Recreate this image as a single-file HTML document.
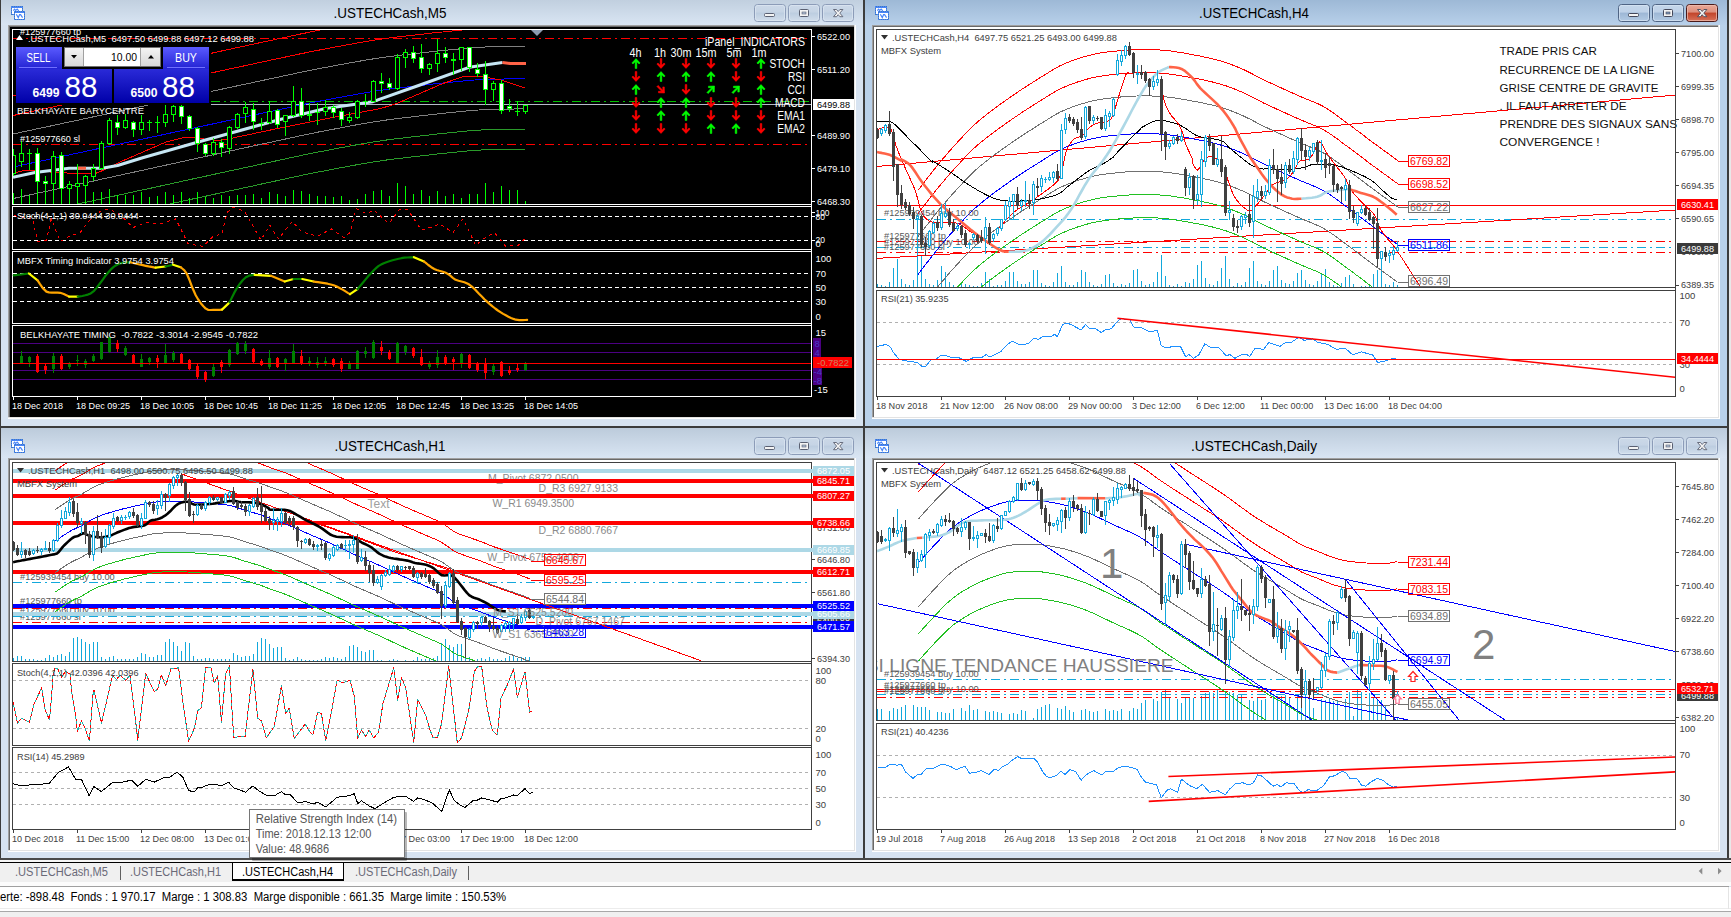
<!DOCTYPE html><html><head><meta charset="utf-8"><title>MT4</title><style>html,body{margin:0;padding:0;background:#f0f0f0;overflow:hidden}svg{display:block}text{font-family:"Liberation Sans",sans-serif;white-space:pre}</style></head><body>
<svg width="1731" height="917" viewBox="0 0 1731 917">
<defs>
<linearGradient id="gInact" x1="0" y1="0" x2="0" y2="1"><stop offset="0" stop-color="#bccbdb"/><stop offset="1" stop-color="#d9e5f3"/></linearGradient>
<linearGradient id="gAct" x1="0" y1="0" x2="0" y2="1"><stop offset="0" stop-color="#98b4d2"/><stop offset="1" stop-color="#b8d0ea"/></linearGradient>
<linearGradient id="gBtnI" x1="0" y1="0" x2="0" y2="1"><stop offset="0" stop-color="#ccd9e8"/><stop offset="0.45" stop-color="#c6d4e5"/><stop offset="0.5" stop-color="#bccde0"/><stop offset="1" stop-color="#d2deec"/></linearGradient>
<linearGradient id="gBtnA" x1="0" y1="0" x2="0" y2="1"><stop offset="0" stop-color="#c4d6ea"/><stop offset="0.45" stop-color="#bfd2e8"/><stop offset="0.5" stop-color="#9db7d5"/><stop offset="1" stop-color="#b4cbe4"/></linearGradient>
<linearGradient id="gBtnX" x1="0" y1="0" x2="0" y2="1"><stop offset="0" stop-color="#eaa999"/><stop offset="0.45" stop-color="#dd8f7d"/><stop offset="0.5" stop-color="#c2442a"/><stop offset="1" stop-color="#d8745c"/></linearGradient>
<linearGradient id="gSell" x1="0" y1="0" x2="0" y2="1"><stop offset="0" stop-color="#5a5aff"/><stop offset="1" stop-color="#2020d0"/></linearGradient>
<linearGradient id="gPrice" x1="0" y1="0" x2="0" y2="1"><stop offset="0" stop-color="#2a2ad8"/><stop offset="1" stop-color="#0000a8"/></linearGradient>
<linearGradient id="gSpin" x1="0" y1="0" x2="0" y2="1"><stop offset="0" stop-color="#f4f4f4"/><stop offset="1" stop-color="#d8d8d8"/></linearGradient>
</defs>
<rect x="0" y="0" width="1731" height="917" fill="#d7e3f1" />
<g shape-rendering="crispEdges">
<rect x="-1" y="-7" width="866" height="435" fill="#3c3c3c" />
<rect x="1" y="-5" width="862" height="431" fill="#d7e3f1" />
<rect x="1" y="-5" width="862" height="30" fill="url(#gInact)" />
<rect x="8" y="25" width="848" height="394" fill="#ffffff" />
<rect x="8" y="25" width="847" height="393" fill="#e3e3e3" />
<rect x="8" y="25" width="846" height="392" fill="#a0a0a0" />
<rect x="9" y="26" width="845" height="391" fill="#696969" />
<rect x="10" y="27" width="844" height="390" fill="#000000" />
</g>
<g shape-rendering="crispEdges">
<rect x="11" y="6" width="12" height="9" fill="#4a86f8" />
<rect x="12" y="8" width="10" height="6" fill="#fff" />
<rect x="12" y="6" width="1" height="1" fill="#3f78c0" />
<rect x="14" y="6" width="1" height="1" fill="#3f78c0" />
<rect x="16" y="6" width="1" height="1" fill="#3f78c0" />
<rect x="18" y="6" width="1" height="1" fill="#3f78c0" />
<rect x="20" y="6" width="1" height="1" fill="#3f78c0" />
<rect x="22" y="6" width="1" height="1" fill="#3f78c0" />
<rect x="11" y="8" width="1" height="1" fill="#3f78c0" />
<rect x="22" y="8" width="1" height="1" fill="#3f78c0" />
<rect x="11" y="10" width="1" height="1" fill="#3f78c0" />
<rect x="22" y="10" width="1" height="1" fill="#3f78c0" />
<rect x="11" y="12" width="1" height="1" fill="#3f78c0" />
<rect x="22" y="12" width="1" height="1" fill="#3f78c0" />
<rect x="11" y="14" width="1" height="1" fill="#3f78c0" />
<rect x="22" y="14" width="1" height="1" fill="#3f78c0" />
<rect x="12" y="14" width="1" height="1" fill="#3f78c0" />
<rect x="14" y="14" width="1" height="1" fill="#3f78c0" />
<rect x="16" y="14" width="1" height="1" fill="#3f78c0" />
<rect x="18" y="14" width="1" height="1" fill="#3f78c0" />
<rect x="20" y="14" width="1" height="1" fill="#3f78c0" />
<rect x="22" y="14" width="1" height="1" fill="#3f78c0" />
<rect x="14" y="11" width="11" height="9" fill="#4a86f8" />
<rect x="15" y="13" width="9" height="6" fill="#fff" />
<rect x="15" y="11" width="1" height="1" fill="#3f78c0" />
<rect x="15" y="19" width="1" height="1" fill="#3f78c0" />
<rect x="17" y="11" width="1" height="1" fill="#3f78c0" />
<rect x="17" y="19" width="1" height="1" fill="#3f78c0" />
<rect x="19" y="11" width="1" height="1" fill="#3f78c0" />
<rect x="19" y="19" width="1" height="1" fill="#3f78c0" />
<rect x="21" y="11" width="1" height="1" fill="#3f78c0" />
<rect x="21" y="19" width="1" height="1" fill="#3f78c0" />
<rect x="23" y="11" width="1" height="1" fill="#3f78c0" />
<rect x="23" y="19" width="1" height="1" fill="#3f78c0" />
<rect x="14" y="12" width="1" height="1" fill="#3f78c0" />
<rect x="24" y="12" width="1" height="1" fill="#3f78c0" />
<rect x="14" y="14" width="1" height="1" fill="#3f78c0" />
<rect x="24" y="14" width="1" height="1" fill="#3f78c0" />
<rect x="14" y="16" width="1" height="1" fill="#3f78c0" />
<rect x="24" y="16" width="1" height="1" fill="#3f78c0" />
<rect x="14" y="18" width="1" height="1" fill="#3f78c0" />
<rect x="24" y="18" width="1" height="1" fill="#3f78c0" />
</g>
<polyline points="13.3,10.6 14.6,9.2 15.6,10.4 17.2,9.0 18.8,10.8" fill="none" stroke="#4a86f8" stroke-width="1.2"/>
<polyline points="16.3,14.3 18.3,17.6 19.6,14.6 20.6,14.6 22.6,17.6" fill="none" stroke="#4a86f8" stroke-width="1.2"/>
<text x="390" y="17.5" font-size="15" fill="#000" text-anchor="middle" textLength="113" lengthAdjust="spacingAndGlyphs" >.USTECHCash,M5</text>
<rect x="754.5" y="4.5" width="31" height="17" rx="3" ry="3" fill="url(#gBtnI)" stroke="#8c9cb8"/>
<rect x="755.5" y="5.5" width="29" height="15" rx="2" ry="2" fill="none" stroke="#dde7f2" stroke-opacity="0.7"/>
<rect x="764.5" y="13.5" width="10" height="3" rx="1" fill="#f4f4f4" stroke="#5a6072"/>
<rect x="788.5" y="4.5" width="31" height="17" rx="3" ry="3" fill="url(#gBtnI)" stroke="#8c9cb8"/>
<rect x="789.5" y="5.5" width="29" height="15" rx="2" ry="2" fill="none" stroke="#dde7f2" stroke-opacity="0.7"/>
<rect x="799.5" y="9.5" width="9" height="7" rx="1" fill="#f4f4f4" stroke="#5a6072"/>
<rect x="802" y="12" width="4" height="2" fill="#b0c0d6" stroke="#5a6072" stroke-width="0.6"/>
<rect x="822.5" y="4.5" width="31" height="17" rx="3" ry="3" fill="url(#gBtnI)" stroke="#8c9cb8"/>
<rect x="823.5" y="5.5" width="29" height="15" rx="2" ry="2" fill="none" stroke="#dde7f2" stroke-opacity="0.7"/>
<path d="M833.5 9.5 l3 0 l1.7 2 l1.7 -2 l3 0 l-3.1 3.6 l3.1 3.6 l-3 0 l-1.7 -2 l-1.7 2 l-3 0 l3.1 -3.6 z" fill="#f4f4f4" stroke="#5a6072" stroke-width="0.9" stroke-linejoin="round"/>
<g shape-rendering="crispEdges">
<rect x="-1" y="426" width="866" height="435" fill="#3c3c3c" />
<rect x="1" y="428" width="862" height="431" fill="#d7e3f1" />
<rect x="1" y="428" width="862" height="30" fill="url(#gInact)" />
<rect x="8" y="458" width="848" height="394" fill="#ffffff" />
<rect x="8" y="458" width="847" height="393" fill="#e3e3e3" />
<rect x="8" y="458" width="846" height="392" fill="#a0a0a0" />
<rect x="9" y="459" width="845" height="391" fill="#696969" />
<rect x="10" y="460" width="844" height="390" fill="#ffffff" />
</g>
<g shape-rendering="crispEdges">
<rect x="11" y="439" width="12" height="9" fill="#4a86f8" />
<rect x="12" y="441" width="10" height="6" fill="#fff" />
<rect x="12" y="439" width="1" height="1" fill="#3f78c0" />
<rect x="14" y="439" width="1" height="1" fill="#3f78c0" />
<rect x="16" y="439" width="1" height="1" fill="#3f78c0" />
<rect x="18" y="439" width="1" height="1" fill="#3f78c0" />
<rect x="20" y="439" width="1" height="1" fill="#3f78c0" />
<rect x="22" y="439" width="1" height="1" fill="#3f78c0" />
<rect x="11" y="441" width="1" height="1" fill="#3f78c0" />
<rect x="22" y="441" width="1" height="1" fill="#3f78c0" />
<rect x="11" y="443" width="1" height="1" fill="#3f78c0" />
<rect x="22" y="443" width="1" height="1" fill="#3f78c0" />
<rect x="11" y="445" width="1" height="1" fill="#3f78c0" />
<rect x="22" y="445" width="1" height="1" fill="#3f78c0" />
<rect x="11" y="447" width="1" height="1" fill="#3f78c0" />
<rect x="22" y="447" width="1" height="1" fill="#3f78c0" />
<rect x="12" y="447" width="1" height="1" fill="#3f78c0" />
<rect x="14" y="447" width="1" height="1" fill="#3f78c0" />
<rect x="16" y="447" width="1" height="1" fill="#3f78c0" />
<rect x="18" y="447" width="1" height="1" fill="#3f78c0" />
<rect x="20" y="447" width="1" height="1" fill="#3f78c0" />
<rect x="22" y="447" width="1" height="1" fill="#3f78c0" />
<rect x="14" y="444" width="11" height="9" fill="#4a86f8" />
<rect x="15" y="446" width="9" height="6" fill="#fff" />
<rect x="15" y="444" width="1" height="1" fill="#3f78c0" />
<rect x="15" y="452" width="1" height="1" fill="#3f78c0" />
<rect x="17" y="444" width="1" height="1" fill="#3f78c0" />
<rect x="17" y="452" width="1" height="1" fill="#3f78c0" />
<rect x="19" y="444" width="1" height="1" fill="#3f78c0" />
<rect x="19" y="452" width="1" height="1" fill="#3f78c0" />
<rect x="21" y="444" width="1" height="1" fill="#3f78c0" />
<rect x="21" y="452" width="1" height="1" fill="#3f78c0" />
<rect x="23" y="444" width="1" height="1" fill="#3f78c0" />
<rect x="23" y="452" width="1" height="1" fill="#3f78c0" />
<rect x="14" y="445" width="1" height="1" fill="#3f78c0" />
<rect x="24" y="445" width="1" height="1" fill="#3f78c0" />
<rect x="14" y="447" width="1" height="1" fill="#3f78c0" />
<rect x="24" y="447" width="1" height="1" fill="#3f78c0" />
<rect x="14" y="449" width="1" height="1" fill="#3f78c0" />
<rect x="24" y="449" width="1" height="1" fill="#3f78c0" />
<rect x="14" y="451" width="1" height="1" fill="#3f78c0" />
<rect x="24" y="451" width="1" height="1" fill="#3f78c0" />
</g>
<polyline points="13.3,443.6 14.6,442.2 15.6,443.4 17.2,442.0 18.8,443.8" fill="none" stroke="#4a86f8" stroke-width="1.2"/>
<polyline points="16.3,447.3 18.3,450.6 19.6,447.6 20.6,447.6 22.6,450.6" fill="none" stroke="#4a86f8" stroke-width="1.2"/>
<text x="390" y="450.5" font-size="15" fill="#000" text-anchor="middle" textLength="111" lengthAdjust="spacingAndGlyphs" >.USTECHCash,H1</text>
<rect x="754.5" y="437.5" width="31" height="17" rx="3" ry="3" fill="url(#gBtnI)" stroke="#8c9cb8"/>
<rect x="755.5" y="438.5" width="29" height="15" rx="2" ry="2" fill="none" stroke="#dde7f2" stroke-opacity="0.7"/>
<rect x="764.5" y="446.5" width="10" height="3" rx="1" fill="#f4f4f4" stroke="#5a6072"/>
<rect x="788.5" y="437.5" width="31" height="17" rx="3" ry="3" fill="url(#gBtnI)" stroke="#8c9cb8"/>
<rect x="789.5" y="438.5" width="29" height="15" rx="2" ry="2" fill="none" stroke="#dde7f2" stroke-opacity="0.7"/>
<rect x="799.5" y="442.5" width="9" height="7" rx="1" fill="#f4f4f4" stroke="#5a6072"/>
<rect x="802" y="445" width="4" height="2" fill="#b0c0d6" stroke="#5a6072" stroke-width="0.6"/>
<rect x="822.5" y="437.5" width="31" height="17" rx="3" ry="3" fill="url(#gBtnI)" stroke="#8c9cb8"/>
<rect x="823.5" y="438.5" width="29" height="15" rx="2" ry="2" fill="none" stroke="#dde7f2" stroke-opacity="0.7"/>
<path d="M833.5 442.5 l3 0 l1.7 2 l1.7 -2 l3 0 l-3.1 3.6 l3.1 3.6 l-3 0 l-1.7 -2 l-1.7 2 l-3 0 l3.1 -3.6 z" fill="#f4f4f4" stroke="#5a6072" stroke-width="0.9" stroke-linejoin="round"/>
<g shape-rendering="crispEdges">
<rect x="863" y="426" width="866" height="435" fill="#3c3c3c" />
<rect x="865" y="428" width="862" height="431" fill="#d7e3f1" />
<rect x="865" y="428" width="862" height="30" fill="url(#gInact)" />
<rect x="872" y="458" width="848" height="394" fill="#ffffff" />
<rect x="872" y="458" width="847" height="393" fill="#e3e3e3" />
<rect x="872" y="458" width="846" height="392" fill="#a0a0a0" />
<rect x="873" y="459" width="845" height="391" fill="#696969" />
<rect x="874" y="460" width="844" height="390" fill="#ffffff" />
</g>
<g shape-rendering="crispEdges">
<rect x="875" y="439" width="12" height="9" fill="#4a86f8" />
<rect x="876" y="441" width="10" height="6" fill="#fff" />
<rect x="876" y="439" width="1" height="1" fill="#3f78c0" />
<rect x="878" y="439" width="1" height="1" fill="#3f78c0" />
<rect x="880" y="439" width="1" height="1" fill="#3f78c0" />
<rect x="882" y="439" width="1" height="1" fill="#3f78c0" />
<rect x="884" y="439" width="1" height="1" fill="#3f78c0" />
<rect x="886" y="439" width="1" height="1" fill="#3f78c0" />
<rect x="875" y="441" width="1" height="1" fill="#3f78c0" />
<rect x="886" y="441" width="1" height="1" fill="#3f78c0" />
<rect x="875" y="443" width="1" height="1" fill="#3f78c0" />
<rect x="886" y="443" width="1" height="1" fill="#3f78c0" />
<rect x="875" y="445" width="1" height="1" fill="#3f78c0" />
<rect x="886" y="445" width="1" height="1" fill="#3f78c0" />
<rect x="875" y="447" width="1" height="1" fill="#3f78c0" />
<rect x="886" y="447" width="1" height="1" fill="#3f78c0" />
<rect x="876" y="447" width="1" height="1" fill="#3f78c0" />
<rect x="878" y="447" width="1" height="1" fill="#3f78c0" />
<rect x="880" y="447" width="1" height="1" fill="#3f78c0" />
<rect x="882" y="447" width="1" height="1" fill="#3f78c0" />
<rect x="884" y="447" width="1" height="1" fill="#3f78c0" />
<rect x="886" y="447" width="1" height="1" fill="#3f78c0" />
<rect x="878" y="444" width="11" height="9" fill="#4a86f8" />
<rect x="879" y="446" width="9" height="6" fill="#fff" />
<rect x="879" y="444" width="1" height="1" fill="#3f78c0" />
<rect x="879" y="452" width="1" height="1" fill="#3f78c0" />
<rect x="881" y="444" width="1" height="1" fill="#3f78c0" />
<rect x="881" y="452" width="1" height="1" fill="#3f78c0" />
<rect x="883" y="444" width="1" height="1" fill="#3f78c0" />
<rect x="883" y="452" width="1" height="1" fill="#3f78c0" />
<rect x="885" y="444" width="1" height="1" fill="#3f78c0" />
<rect x="885" y="452" width="1" height="1" fill="#3f78c0" />
<rect x="887" y="444" width="1" height="1" fill="#3f78c0" />
<rect x="887" y="452" width="1" height="1" fill="#3f78c0" />
<rect x="878" y="445" width="1" height="1" fill="#3f78c0" />
<rect x="888" y="445" width="1" height="1" fill="#3f78c0" />
<rect x="878" y="447" width="1" height="1" fill="#3f78c0" />
<rect x="888" y="447" width="1" height="1" fill="#3f78c0" />
<rect x="878" y="449" width="1" height="1" fill="#3f78c0" />
<rect x="888" y="449" width="1" height="1" fill="#3f78c0" />
<rect x="878" y="451" width="1" height="1" fill="#3f78c0" />
<rect x="888" y="451" width="1" height="1" fill="#3f78c0" />
</g>
<polyline points="877.3,443.6 878.6,442.2 879.6,443.4 881.2,442.0 882.8,443.8" fill="none" stroke="#4a86f8" stroke-width="1.2"/>
<polyline points="880.3,447.3 882.3,450.6 883.6,447.6 884.6,447.6 886.6,450.6" fill="none" stroke="#4a86f8" stroke-width="1.2"/>
<text x="1254" y="450.5" font-size="15" fill="#000" text-anchor="middle" textLength="126" lengthAdjust="spacingAndGlyphs" >.USTECHCash,Daily</text>
<rect x="1618.5" y="437.5" width="31" height="17" rx="3" ry="3" fill="url(#gBtnI)" stroke="#8c9cb8"/>
<rect x="1619.5" y="438.5" width="29" height="15" rx="2" ry="2" fill="none" stroke="#dde7f2" stroke-opacity="0.7"/>
<rect x="1628.5" y="446.5" width="10" height="3" rx="1" fill="#f4f4f4" stroke="#5a6072"/>
<rect x="1652.5" y="437.5" width="31" height="17" rx="3" ry="3" fill="url(#gBtnI)" stroke="#8c9cb8"/>
<rect x="1653.5" y="438.5" width="29" height="15" rx="2" ry="2" fill="none" stroke="#dde7f2" stroke-opacity="0.7"/>
<rect x="1663.5" y="442.5" width="9" height="7" rx="1" fill="#f4f4f4" stroke="#5a6072"/>
<rect x="1666" y="445" width="4" height="2" fill="#b0c0d6" stroke="#5a6072" stroke-width="0.6"/>
<rect x="1686.5" y="437.5" width="31" height="17" rx="3" ry="3" fill="url(#gBtnI)" stroke="#8c9cb8"/>
<rect x="1687.5" y="438.5" width="29" height="15" rx="2" ry="2" fill="none" stroke="#dde7f2" stroke-opacity="0.7"/>
<path d="M1697.5 442.5 l3 0 l1.7 2 l1.7 -2 l3 0 l-3.1 3.6 l3.1 3.6 l-3 0 l-1.7 -2 l-1.7 2 l-3 0 l3.1 -3.6 z" fill="#f4f4f4" stroke="#5a6072" stroke-width="0.9" stroke-linejoin="round"/>
<g shape-rendering="crispEdges">
<rect x="863" y="-7" width="866" height="435" fill="#3c3c3c" />
<rect x="865" y="-5" width="862" height="431" fill="#b9d1ea" />
<rect x="865" y="-5" width="862" height="30" fill="url(#gAct)" />
<rect x="872" y="25" width="848" height="394" fill="#ffffff" />
<rect x="872" y="25" width="847" height="393" fill="#e3e3e3" />
<rect x="872" y="25" width="846" height="392" fill="#a0a0a0" />
<rect x="873" y="26" width="845" height="391" fill="#696969" />
<rect x="874" y="27" width="844" height="390" fill="#ffffff" />
</g>
<g shape-rendering="crispEdges">
<rect x="875" y="6" width="12" height="9" fill="#4a86f8" />
<rect x="876" y="8" width="10" height="6" fill="#fff" />
<rect x="876" y="6" width="1" height="1" fill="#3f78c0" />
<rect x="878" y="6" width="1" height="1" fill="#3f78c0" />
<rect x="880" y="6" width="1" height="1" fill="#3f78c0" />
<rect x="882" y="6" width="1" height="1" fill="#3f78c0" />
<rect x="884" y="6" width="1" height="1" fill="#3f78c0" />
<rect x="886" y="6" width="1" height="1" fill="#3f78c0" />
<rect x="875" y="8" width="1" height="1" fill="#3f78c0" />
<rect x="886" y="8" width="1" height="1" fill="#3f78c0" />
<rect x="875" y="10" width="1" height="1" fill="#3f78c0" />
<rect x="886" y="10" width="1" height="1" fill="#3f78c0" />
<rect x="875" y="12" width="1" height="1" fill="#3f78c0" />
<rect x="886" y="12" width="1" height="1" fill="#3f78c0" />
<rect x="875" y="14" width="1" height="1" fill="#3f78c0" />
<rect x="886" y="14" width="1" height="1" fill="#3f78c0" />
<rect x="876" y="14" width="1" height="1" fill="#3f78c0" />
<rect x="878" y="14" width="1" height="1" fill="#3f78c0" />
<rect x="880" y="14" width="1" height="1" fill="#3f78c0" />
<rect x="882" y="14" width="1" height="1" fill="#3f78c0" />
<rect x="884" y="14" width="1" height="1" fill="#3f78c0" />
<rect x="886" y="14" width="1" height="1" fill="#3f78c0" />
<rect x="878" y="11" width="11" height="9" fill="#4a86f8" />
<rect x="879" y="13" width="9" height="6" fill="#fff" />
<rect x="879" y="11" width="1" height="1" fill="#3f78c0" />
<rect x="879" y="19" width="1" height="1" fill="#3f78c0" />
<rect x="881" y="11" width="1" height="1" fill="#3f78c0" />
<rect x="881" y="19" width="1" height="1" fill="#3f78c0" />
<rect x="883" y="11" width="1" height="1" fill="#3f78c0" />
<rect x="883" y="19" width="1" height="1" fill="#3f78c0" />
<rect x="885" y="11" width="1" height="1" fill="#3f78c0" />
<rect x="885" y="19" width="1" height="1" fill="#3f78c0" />
<rect x="887" y="11" width="1" height="1" fill="#3f78c0" />
<rect x="887" y="19" width="1" height="1" fill="#3f78c0" />
<rect x="878" y="12" width="1" height="1" fill="#3f78c0" />
<rect x="888" y="12" width="1" height="1" fill="#3f78c0" />
<rect x="878" y="14" width="1" height="1" fill="#3f78c0" />
<rect x="888" y="14" width="1" height="1" fill="#3f78c0" />
<rect x="878" y="16" width="1" height="1" fill="#3f78c0" />
<rect x="888" y="16" width="1" height="1" fill="#3f78c0" />
<rect x="878" y="18" width="1" height="1" fill="#3f78c0" />
<rect x="888" y="18" width="1" height="1" fill="#3f78c0" />
</g>
<polyline points="877.3,10.6 878.6,9.2 879.6,10.4 881.2,9.0 882.8,10.8" fill="none" stroke="#4a86f8" stroke-width="1.2"/>
<polyline points="880.3,14.3 882.3,17.6 883.6,14.6 884.6,14.6 886.6,17.6" fill="none" stroke="#4a86f8" stroke-width="1.2"/>
<text x="1254" y="17.5" font-size="15" fill="#000" text-anchor="middle" textLength="110" lengthAdjust="spacingAndGlyphs" >.USTECHCash,H4</text>
<rect x="1618.5" y="4.5" width="31" height="17" rx="3" ry="3" fill="url(#gBtnA)" stroke="#4f6484"/>
<rect x="1619.5" y="5.5" width="29" height="15" rx="2" ry="2" fill="none" stroke="#d8e6f4" stroke-opacity="0.7"/>
<rect x="1628.5" y="13.5" width="10" height="3" rx="1" fill="#f4f4f4" stroke="#44485a"/>
<rect x="1652.5" y="4.5" width="31" height="17" rx="3" ry="3" fill="url(#gBtnA)" stroke="#4f6484"/>
<rect x="1653.5" y="5.5" width="29" height="15" rx="2" ry="2" fill="none" stroke="#d8e6f4" stroke-opacity="0.7"/>
<rect x="1663.5" y="9.5" width="9" height="7" rx="1" fill="#f4f4f4" stroke="#44485a"/>
<rect x="1666" y="12" width="4" height="2" fill="#7d98bb" stroke="#44485a" stroke-width="0.6"/>
<rect x="1686.5" y="4.5" width="31" height="17" rx="3" ry="3" fill="url(#gBtnX)" stroke="#4a1a1a"/>
<rect x="1687.5" y="5.5" width="29" height="15" rx="2" ry="2" fill="none" stroke="#f0c0b4" stroke-opacity="0.7"/>
<path d="M1697.5 9.5 l3 0 l1.7 2 l1.7 -2 l3 0 l-3.1 3.6 l3.1 3.6 l-3 0 l-1.7 -2 l-1.7 2 l-3 0 l3.1 -3.6 z" fill="#f4f4f4" stroke="#44485a" stroke-width="0.9" stroke-linejoin="round"/>
<g shape-rendering="crispEdges">
<rect x="1727" y="0" width="2" height="860" fill="#3c3c3c" />
<rect x="1729" y="0" width="2" height="860" fill="#e8e8e8" />
</g>
<g id="m5">
<clipPath id="cm5"><rect x="13" y="30" width="798" height="174"/></clipPath>
<g clip-path="url(#cm5)">
<line x1="13" y1="38.5" x2="811" y2="38.5" stroke="#ff0000" stroke-width="1" stroke-dasharray="9 4 2 4" shape-rendering="crispEdges"/>
<line x1="13" y1="144.5" x2="811" y2="144.5" stroke="#ff0000" stroke-width="1" stroke-dasharray="9 4 2 4" shape-rendering="crispEdges"/>
<line x1="211" y1="101.5" x2="811" y2="101.5" stroke="#00c000" stroke-width="1" stroke-dasharray="9 4 2 4" shape-rendering="crispEdges"/>
<line x1="211" y1="104.5" x2="811" y2="104.5" stroke="#b4bcc8" stroke-width="1" shape-rendering="crispEdges"/>
<polyline points="13.0,96.0 14.0,95.8 15.1,95.6 16.2,95.3 17.3,95.1 18.5,94.8 19.7,94.6 21.0,94.3 22.3,94.0 23.6,93.7 25.0,93.4 26.5,93.1 27.9,92.8 29.5,92.5 31.0,92.1 32.7,91.8 34.3,91.4 36.0,91.1 37.8,90.7 39.6,90.3 41.4,89.9 43.3,89.5 45.2,89.1 47.2,88.7 49.3,88.2 51.3,87.8 53.5,87.3 55.6,86.9 57.9,86.4 60.1,85.9 62.4,85.4 64.8,84.9 67.2,84.4 69.7,83.8 72.2,83.3 74.7,82.7 77.3,82.2 80.0,81.6 82.7,81.0 85.5,80.4 88.3,79.8 91.1,79.2 94.0,78.6 97.0,77.9 100.0,77.3 101.5,77.0 103.0,76.7 104.6,76.3 106.2,76.0 107.8,75.6 109.5,75.3 111.2,74.9 112.9,74.5 114.6,74.1 116.4,73.8 118.2,73.4 120.1,73.0 122.0,72.6 123.9,72.1 125.8,71.7 127.8,71.3 129.7,70.9 131.7,70.4 133.7,70.0 135.8,69.6 137.9,69.1 139.9,68.7 142.0,68.2 144.2,67.7 146.3,67.3 148.4,66.8 150.6,66.4 152.8,65.9 155.0,65.4 157.2,64.9 159.4,64.4 161.6,64.0 163.9,63.5 166.1,63.0 168.4,62.5 170.6,62.0 172.9,61.5 175.2,61.0 177.5,60.5 179.7,60.0 182.0,59.5 184.3,59.1 186.6,58.6 188.9,58.1 191.2,57.6 193.5,57.1 195.7,56.6 198.0,56.1 200.3,55.6 202.6,55.1 204.8,54.6 207.1,54.1 209.3,53.6 211.6,53.2 213.8,52.7 216.0,52.2 218.2,51.7 220.4,51.2 222.6,50.8 224.7,50.3 226.9,49.8 229.0,49.4 231.2,48.9 233.3,48.5 235.3,48.0 237.4,47.6 239.4,47.1 241.5,46.7 243.5,46.3 245.4,45.8 247.4,45.4 249.3,45.0 251.2,44.6 253.1,44.2 254.9,43.8 256.7,43.4 258.5,43.0 260.3,42.6 262.0,42.3 263.7,41.9 265.4,41.5 267.0,41.2 268.6,40.8 270.2,40.5 271.7,40.2 273.2,39.9 274.6,39.6 276.0,39.3 277.4,39.0 278.7,38.7 280.0,38.4 284.2,37.5 288.1,36.7 291.7,35.9 294.9,35.2 297.8,34.6 300.5,34.0 302.9,33.5 305.1,33.1 307.1,32.7 308.8,32.3 310.5,32.0 312.0,31.7 313.3,31.4 314.6,31.1 315.8,30.9 316.9,30.7 318.0,30.5 319.1,30.3 320.2,30.0 321.3,29.8 322.5,29.6 323.8,29.4 325.1,29.1 326.6,28.8 328.2,28.5 330.0,28.2 332.0,27.8 334.0,27.4 336.1,27.0 338.1,26.7 340.1,26.3 342.1,25.9 344.1,25.5 346.1,25.2 348.1,24.8 350.1,24.4 352.1,24.1 354.1,23.7 356.0,23.4 358.0,23.0 359.9,22.7 361.9,22.3 363.8,22.0 365.7,21.7 367.6,21.4 369.5,21.1 371.3,20.8 373.2,20.5 375.0,20.2 376.8,19.9 378.9,19.6 381.1,19.3 383.1,19.0 385.2,18.7 387.3,18.4 389.3,18.1 391.3,17.9 393.3,17.6 395.2,17.4 397.2,17.2 399.1,16.9 401.1,16.7 403.0,16.5 404.9,16.3 406.7,16.1 408.6,15.8 410.5,15.6 412.3,15.4 414.2,15.2 416.0,15.0 418.0,14.8 420.0,14.5 422.0,14.3 423.9,14.1 425.8,13.9 427.8,13.6 429.6,13.4 431.5,13.2 433.4,13.0 435.2,12.8 437.1,12.6 438.9,12.4 440.8,12.2 442.6,12.0 444.5,11.9 446.3,11.7 448.1,11.5 450.0,11.3 452.0,11.1 453.9,10.9 455.8,10.7 457.6,10.5 459.5,10.3 461.4,10.2 463.2,10.0 465.1,9.8 466.9,9.6 468.8,9.5 470.7,9.3 472.7,9.1 474.6,9.0 476.7,8.9 478.7,8.7 480.8,8.6 483.0,8.5 484.8,8.4 486.6,8.3 488.6,8.3 490.7,8.2 492.8,8.2 494.9,8.1 497.1,8.1 499.4,8.0 501.6,8.0 503.8,8.0 506.1,7.9 508.2,7.9 510.4,7.9 512.4,7.8 514.4,7.8 516.3,7.8 518.1,7.8 519.8,7.8 521.3,7.8 522.7,7.7 524.0,7.7 525.0,7.7" fill="none" stroke="#ff0000" stroke-width="1" stroke-linejoin="round" shape-rendering="crispEdges" />
<polyline points="13.0,115.5 14.0,115.3 15.1,115.1 16.2,114.8 17.3,114.6 18.5,114.3 19.7,114.1 21.0,113.8 22.3,113.5 23.6,113.2 25.0,112.9 26.5,112.6 27.9,112.3 29.5,112.0 31.0,111.6 32.7,111.3 34.3,110.9 36.0,110.6 37.8,110.2 39.6,109.8 41.4,109.4 43.3,109.0 45.2,108.6 47.2,108.2 49.3,107.8 51.3,107.3 53.5,106.9 55.6,106.4 57.9,105.9 60.1,105.4 62.4,104.9 64.8,104.4 67.2,103.9 69.7,103.4 72.2,102.9 74.7,102.3 77.3,101.7 80.0,101.2 82.7,100.6 85.5,100.0 88.3,99.4 91.1,98.8 94.0,98.2 97.0,97.5 100.0,96.9 101.5,96.6 103.0,96.2 104.6,95.9 106.2,95.6 107.8,95.2 109.5,94.9 111.2,94.5 112.9,94.1 114.6,93.7 116.4,93.4 118.2,93.0 120.1,92.6 122.0,92.2 123.9,91.7 125.8,91.3 127.8,90.9 129.7,90.5 131.7,90.1 133.7,89.6 135.8,89.2 137.9,88.7 139.9,88.3 142.0,87.8 144.2,87.4 146.3,86.9 148.4,86.5 150.6,86.0 152.8,85.5 155.0,85.0 157.2,84.6 159.4,84.1 161.6,83.6 163.9,83.1 166.1,82.6 168.4,82.2 170.6,81.7 172.9,81.2 175.2,80.7 177.5,80.2 179.7,79.7 182.0,79.2 184.3,78.7 186.6,78.2 188.9,77.7 191.2,77.2 193.5,76.7 195.7,76.3 198.0,75.8 200.3,75.3 202.6,74.8 204.8,74.3 207.1,73.8 209.3,73.3 211.6,72.8 213.8,72.4 216.0,71.9 218.2,71.4 220.4,70.9 222.6,70.5 224.7,70.0 226.9,69.5 229.0,69.1 231.2,68.6 233.3,68.2 235.3,67.7 237.4,67.3 239.4,66.8 241.5,66.4 243.5,66.0 245.4,65.6 247.4,65.1 249.3,64.7 251.2,64.3 253.1,63.9 254.9,63.5 256.7,63.1 258.5,62.7 260.3,62.4 262.0,62.0 263.7,61.6 265.4,61.3 267.0,60.9 268.6,60.6 270.2,60.3 271.7,59.9 273.2,59.6 274.6,59.3 276.0,59.0 277.4,58.7 278.7,58.4 280.0,58.2 284.2,57.3 288.1,56.4 291.7,55.7 294.9,55.0 297.8,54.4 300.5,53.8 302.9,53.3 305.1,52.9 307.1,52.5 308.8,52.1 310.5,51.8 312.0,51.5 313.3,51.2 314.6,50.9 315.8,50.7 316.9,50.5 318.0,50.3 319.1,50.1 320.2,49.8 321.3,49.6 322.5,49.4 323.8,49.2 325.1,48.9 326.6,48.7 328.2,48.3 330.0,48.0 332.0,47.6 334.0,47.2 336.1,46.9 338.1,46.5 340.1,46.1 342.1,45.7 344.1,45.4 346.1,45.0 348.1,44.6 350.1,44.3 352.1,43.9 354.1,43.6 356.0,43.2 358.0,42.9 359.9,42.5 361.9,42.2 363.8,41.9 365.7,41.5 367.6,41.2 369.5,40.9 371.3,40.6 373.2,40.3 375.0,40.0 376.8,39.8 378.9,39.4 381.1,39.1 383.1,38.8 385.2,38.5 387.3,38.3 389.3,38.0 391.3,37.8 393.3,37.5 395.2,37.3 397.2,37.0 399.1,36.8 401.1,36.6 403.0,36.4 404.9,36.2 406.7,35.9 408.6,35.7 410.5,35.5 412.3,35.3 414.2,35.1 416.0,34.9 418.0,34.7 420.0,34.4 422.0,34.2 423.9,34.0 425.8,33.8 427.8,33.5 429.6,33.3 431.5,33.1 433.4,32.9 435.2,32.7 437.1,32.5 438.9,32.3 440.8,32.1 442.6,32.0 444.5,31.8 446.3,31.6 448.1,31.4 450.0,31.2 452.0,31.0 453.9,30.8 455.8,30.7 457.6,30.5 459.5,30.3 461.4,30.1 463.2,29.9 465.1,29.7 466.9,29.6 468.8,29.4 470.7,29.3 472.7,29.1 474.6,29.0 476.7,28.8 478.7,28.7 480.8,28.6 483.0,28.5 484.8,28.4 486.6,28.3 488.6,28.2 490.7,28.2 492.8,28.1 494.9,28.1 497.1,28.0 499.4,28.0 501.6,28.0 503.8,27.9 506.1,27.9 508.2,27.9 510.4,27.9 512.4,27.8 514.4,27.8 516.3,27.8 518.1,27.8 519.8,27.8 521.3,27.7 522.7,27.7 524.0,27.7 525.0,27.7" fill="none" stroke="#ff0000" stroke-width="1" stroke-linejoin="round" shape-rendering="crispEdges" />
<polyline points="13.0,134.0 14.0,133.8 15.1,133.6 16.2,133.3 17.3,133.1 18.5,132.8 19.7,132.6 21.0,132.3 22.3,132.0 23.6,131.7 25.0,131.4 26.5,131.1 27.9,130.8 29.5,130.5 31.0,130.2 32.7,129.8 34.3,129.5 36.0,129.1 37.8,128.7 39.6,128.3 41.4,127.9 43.3,127.5 45.2,127.1 47.2,126.7 49.3,126.3 51.3,125.8 53.5,125.4 55.6,124.9 57.9,124.4 60.1,123.9 62.4,123.4 64.8,122.9 67.2,122.4 69.7,121.9 72.2,121.4 74.7,120.8 77.3,120.3 80.0,119.7 82.7,119.1 85.5,118.5 88.3,117.9 91.1,117.3 94.0,116.7 97.0,116.0 100.0,115.4 101.5,115.1 103.0,114.8 104.6,114.4 106.2,114.1 107.8,113.7 109.5,113.4 111.2,113.0 112.9,112.6 114.6,112.3 116.4,111.9 118.2,111.5 120.1,111.1 122.0,110.7 123.9,110.3 125.8,109.9 127.8,109.4 129.7,109.0 131.7,108.6 133.7,108.1 135.8,107.7 137.9,107.3 139.9,106.8 142.0,106.4 144.2,105.9 146.3,105.4 148.4,105.0 150.6,104.5 152.8,104.0 155.0,103.6 157.2,103.1 159.4,102.6 161.6,102.1 163.9,101.7 166.1,101.2 168.4,100.7 170.6,100.2 172.9,99.7 175.2,99.2 177.5,98.7 179.7,98.2 182.0,97.7 184.3,97.3 186.6,96.8 188.9,96.3 191.2,95.8 193.5,95.3 195.7,94.8 198.0,94.3 200.3,93.8 202.6,93.3 204.8,92.8 207.1,92.4 209.3,91.9 211.6,91.4 213.8,90.9 216.0,90.4 218.2,90.0 220.4,89.5 222.6,89.0 224.7,88.5 226.9,88.1 229.0,87.6 231.2,87.2 233.3,86.7 235.3,86.3 237.4,85.8 239.4,85.4 241.5,85.0 243.5,84.5 245.4,84.1 247.4,83.7 249.3,83.3 251.2,82.9 253.1,82.5 254.9,82.1 256.7,81.7 258.5,81.3 260.3,80.9 262.0,80.5 263.7,80.2 265.4,79.8 267.0,79.5 268.6,79.1 270.2,78.8 271.7,78.5 273.2,78.2 274.6,77.9 276.0,77.6 277.4,77.3 278.7,77.0 280.0,76.7 284.2,75.8 288.1,75.0 291.7,74.2 294.9,73.6 297.8,72.9 300.5,72.4 302.9,71.9 305.1,71.4 307.1,71.0 308.8,70.6 310.5,70.3 312.0,70.0 313.3,69.7 314.6,69.5 315.8,69.3 316.9,69.0 318.0,68.8 319.1,68.6 320.2,68.4 321.3,68.2 322.5,68.0 323.8,67.7 325.1,67.5 326.6,67.2 328.2,66.9 330.0,66.6 332.0,66.2 334.0,65.8 336.1,65.4 338.1,65.0 340.1,64.7 342.1,64.3 344.1,63.9 346.1,63.6 348.1,63.2 350.1,62.8 352.1,62.5 354.1,62.1 356.0,61.8 358.0,61.4 359.9,61.1 361.9,60.8 363.8,60.4 365.7,60.1 367.6,59.8 369.5,59.5 371.3,59.2 373.2,58.9 375.0,58.6 376.8,58.3 378.9,58.0 381.1,57.7 383.1,57.4 385.2,57.1 387.3,56.8 389.3,56.6 391.3,56.3 393.3,56.1 395.2,55.8 397.2,55.6 399.1,55.4 401.1,55.2 403.0,54.9 404.9,54.7 406.7,54.5 408.6,54.3 410.5,54.1 412.3,53.9 414.2,53.7 416.0,53.5 418.0,53.2 420.0,53.0 422.0,52.8 423.9,52.6 425.8,52.3 427.8,52.1 429.6,51.9 431.5,51.7 433.4,51.5 435.2,51.3 437.1,51.1 438.9,50.9 440.8,50.7 442.6,50.5 444.5,50.4 446.3,50.2 448.1,50.0 450.0,49.8 452.0,49.6 453.9,49.4 455.8,49.2 457.6,49.1 459.5,48.9 461.4,48.7 463.2,48.5 465.1,48.3 466.9,48.2 468.8,48.0 470.7,47.8 472.7,47.7 474.6,47.5 476.7,47.4 478.7,47.3 480.8,47.2 483.0,47.1 484.8,47.0 486.6,46.9 488.6,46.8 490.7,46.8 492.8,46.7 494.9,46.7 497.1,46.6 499.4,46.6 501.6,46.6 503.8,46.5 506.1,46.5 508.2,46.5 510.4,46.5 512.4,46.4 514.4,46.4 516.3,46.4 518.1,46.4 519.8,46.4 521.3,46.3 522.7,46.3 524.0,46.3 525.0,46.3" fill="none" stroke="#808080" stroke-width="1" stroke-linejoin="round" shape-rendering="crispEdges" />
<polyline points="13.0,198.5 14.0,198.3 15.1,198.1 16.2,197.8 17.3,197.6 18.5,197.3 19.7,197.0 21.0,196.8 22.3,196.5 23.6,196.2 25.0,195.9 26.5,195.6 27.9,195.3 29.5,194.9 31.0,194.6 32.7,194.2 34.3,193.9 36.0,193.5 37.8,193.1 39.6,192.7 41.4,192.3 43.3,191.9 45.2,191.5 47.2,191.1 49.3,190.6 51.3,190.2 53.5,189.7 55.6,189.2 57.9,188.8 60.1,188.3 62.4,187.8 64.8,187.2 67.2,186.7 69.7,186.2 72.2,185.6 74.7,185.1 77.3,184.5 80.0,183.9 82.7,183.3 85.5,182.7 88.3,182.1 91.1,181.5 94.0,180.9 97.0,180.2 100.0,179.6 101.5,179.2 103.0,178.9 104.6,178.6 106.2,178.2 107.8,177.9 109.5,177.5 111.2,177.1 112.9,176.7 114.6,176.4 116.4,176.0 118.2,175.6 120.1,175.2 122.0,174.8 123.9,174.3 125.8,173.9 127.8,173.5 129.7,173.1 131.7,172.6 133.7,172.2 135.8,171.7 137.9,171.3 139.9,170.8 142.0,170.4 144.2,169.9 146.3,169.4 148.4,169.0 150.6,168.5 152.8,168.0 155.0,167.5 157.2,167.0 159.4,166.5 161.6,166.1 163.9,165.6 166.1,165.1 168.4,164.6 170.6,164.1 172.9,163.6 175.2,163.1 177.5,162.6 179.7,162.1 182.0,161.6 184.3,161.1 186.6,160.6 188.9,160.1 191.2,159.6 193.5,159.1 195.7,158.6 198.0,158.1 200.3,157.6 202.6,157.1 204.8,156.6 207.1,156.1 209.3,155.6 211.6,155.1 213.8,154.6 216.0,154.1 218.2,153.7 220.4,153.2 222.6,152.7 224.7,152.2 226.9,151.7 229.0,151.3 231.2,150.8 233.3,150.4 235.3,149.9 237.4,149.5 239.4,149.0 241.5,148.6 243.5,148.1 245.4,147.7 247.4,147.3 249.3,146.8 251.2,146.4 253.1,146.0 254.9,145.6 256.7,145.2 258.5,144.8 260.3,144.5 262.0,144.1 263.7,143.7 265.4,143.3 267.0,143.0 268.6,142.6 270.2,142.3 271.7,142.0 273.2,141.7 274.6,141.3 276.0,141.0 277.4,140.7 278.7,140.4 280.0,140.2 284.2,139.3 288.1,138.4 291.7,137.7 294.9,137.0 297.8,136.3 300.5,135.8 302.9,135.2 305.1,134.8 307.1,134.4 308.8,134.0 310.5,133.7 312.0,133.3 313.3,133.1 314.6,132.8 315.8,132.6 316.9,132.3 318.0,132.1 319.1,131.9 320.2,131.7 321.3,131.5 322.5,131.3 323.8,131.0 325.1,130.8 326.6,130.5 328.2,130.2 330.0,129.8 332.0,129.4 334.0,129.1 336.1,128.7 338.1,128.3 340.1,127.9 342.1,127.5 344.1,127.1 346.1,126.8 348.1,126.4 350.1,126.0 352.1,125.6 354.1,125.3 356.0,124.9 358.0,124.6 359.9,124.2 361.9,123.9 363.8,123.6 365.7,123.2 367.6,122.9 369.5,122.6 371.3,122.3 373.2,122.0 375.0,121.7 376.8,121.4 378.9,121.1 381.1,120.8 383.1,120.5 385.2,120.2 387.3,119.9 389.3,119.6 391.3,119.4 393.3,119.1 395.2,118.9 397.2,118.6 399.1,118.4 401.1,118.1 403.0,117.9 404.9,117.7 406.7,117.5 408.6,117.3 410.5,117.1 412.3,116.8 414.2,116.6 416.0,116.4 418.0,116.2 420.0,115.9 422.0,115.7 423.9,115.5 425.8,115.2 427.8,115.0 429.6,114.8 431.5,114.6 433.4,114.4 435.2,114.2 437.1,114.0 438.9,113.8 440.8,113.6 442.6,113.4 444.5,113.2 446.3,113.0 448.1,112.8 450.0,112.6 452.0,112.4 453.9,112.2 455.8,112.0 457.6,111.8 459.5,111.6 461.4,111.4 463.2,111.3 465.1,111.1 466.9,110.9 468.8,110.7 470.7,110.6 472.7,110.4 474.6,110.2 476.7,110.1 478.7,110.0 480.8,109.8 483.0,109.7 484.8,109.6 486.6,109.6 488.6,109.5 490.7,109.4 492.8,109.4 494.9,109.3 497.1,109.2 499.4,109.2 501.6,109.2 503.8,109.1 506.1,109.1 508.2,109.0 510.4,109.0 512.4,109.0 514.4,109.0 516.3,108.9 518.1,108.9 519.8,108.9 521.3,108.9 522.7,108.8 524.0,108.8 525.0,108.8" fill="none" stroke="#808080" stroke-width="1" stroke-linejoin="round" shape-rendering="crispEdges" />
<polyline points="13.0,218.0 14.0,217.8 15.1,217.6 16.2,217.3 17.3,217.1 18.5,216.8 19.7,216.6 21.0,216.3 22.3,216.0 23.6,215.7 25.0,215.4 26.5,215.1 27.9,214.8 29.5,214.4 31.0,214.1 32.7,213.8 34.3,213.4 36.0,213.0 37.8,212.7 39.6,212.3 41.4,211.9 43.3,211.5 45.2,211.0 47.2,210.6 49.3,210.2 51.3,209.7 53.5,209.3 55.6,208.8 57.9,208.3 60.1,207.8 62.4,207.3 64.8,206.8 67.2,206.3 69.7,205.8 72.2,205.2 74.7,204.7 77.3,204.1 80.0,203.5 82.7,202.9 85.5,202.3 88.3,201.7 91.1,201.1 94.0,200.5 97.0,199.8 100.0,199.2 101.5,198.9 103.0,198.5 104.6,198.2 106.2,197.8 107.8,197.5 109.5,197.1 111.2,196.8 112.9,196.4 114.6,196.0 116.4,195.6 118.2,195.2 120.1,194.8 122.0,194.4 123.9,194.0 125.8,193.6 127.8,193.1 129.7,192.7 131.7,192.3 133.7,191.8 135.8,191.4 137.9,190.9 139.9,190.5 142.0,190.0 144.2,189.6 146.3,189.1 148.4,188.6 150.6,188.2 152.8,187.7 155.0,187.2 157.2,186.7 159.4,186.2 161.6,185.8 163.9,185.3 166.1,184.8 168.4,184.3 170.6,183.8 172.9,183.3 175.2,182.8 177.5,182.3 179.7,181.8 182.0,181.3 184.3,180.8 186.6,180.3 188.9,179.8 191.2,179.3 193.5,178.8 195.7,178.3 198.0,177.8 200.3,177.3 202.6,176.8 204.8,176.3 207.1,175.9 209.3,175.4 211.6,174.9 213.8,174.4 216.0,173.9 218.2,173.4 220.4,173.0 222.6,172.5 224.7,172.0 226.9,171.5 229.0,171.1 231.2,170.6 233.3,170.2 235.3,169.7 237.4,169.3 239.4,168.8 241.5,168.4 243.5,167.9 245.4,167.5 247.4,167.1 249.3,166.7 251.2,166.3 253.1,165.9 254.9,165.5 256.7,165.1 258.5,164.7 260.3,164.3 262.0,163.9 263.7,163.5 265.4,163.2 267.0,162.8 268.6,162.5 270.2,162.2 271.7,161.8 273.2,161.5 274.6,161.2 276.0,160.9 277.4,160.6 278.7,160.3 280.0,160.0 284.2,159.1 288.1,158.3 291.7,157.5 294.9,156.8 297.8,156.2 300.5,155.7 302.9,155.1 305.1,154.7 307.1,154.3 308.8,153.9 310.5,153.6 312.0,153.3 313.3,153.0 314.6,152.7 315.8,152.5 316.9,152.3 318.0,152.0 319.1,151.8 320.2,151.6 321.3,151.4 322.5,151.2 323.8,151.0 325.1,150.7 326.6,150.4 328.2,150.1 330.0,149.8 332.0,149.4 334.0,149.0 336.1,148.6 338.1,148.2 340.1,147.8 342.1,147.5 344.1,147.1 346.1,146.7 348.1,146.3 350.1,146.0 352.1,145.6 354.1,145.3 356.0,144.9 358.0,144.5 359.9,144.2 361.9,143.9 363.8,143.5 365.7,143.2 367.6,142.9 369.5,142.6 371.3,142.3 373.2,142.0 375.0,141.7 376.8,141.4 378.9,141.1 381.1,140.8 383.1,140.5 385.2,140.2 387.3,139.9 389.3,139.6 391.3,139.4 393.3,139.1 395.2,138.9 397.2,138.6 399.1,138.4 401.1,138.2 403.0,138.0 404.9,137.7 406.7,137.5 408.6,137.3 410.5,137.1 412.3,136.9 414.2,136.7 416.0,136.4 418.0,136.2 420.0,136.0 422.0,135.7 423.9,135.5 425.8,135.3 427.8,135.1 429.6,134.9 431.5,134.7 433.4,134.4 435.2,134.2 437.1,134.0 438.9,133.8 440.8,133.6 442.6,133.5 444.5,133.3 446.3,133.1 448.1,132.9 450.0,132.7 452.0,132.5 453.9,132.3 455.8,132.1 457.6,131.9 459.5,131.7 461.4,131.6 463.2,131.4 465.1,131.2 466.9,131.0 468.8,130.8 470.7,130.7 472.7,130.5 474.6,130.4 476.7,130.2 478.7,130.1 480.8,130.0 483.0,129.9 484.8,129.8 486.6,129.7 488.6,129.6 490.7,129.6 492.8,129.5 494.9,129.5 497.1,129.4 499.4,129.4 501.6,129.3 503.8,129.3 506.1,129.3 508.2,129.2 510.4,129.2 512.4,129.2 514.4,129.1 516.3,129.1 518.1,129.1 519.8,129.1 521.3,129.1 522.7,129.0 524.0,129.0 525.0,129.0" fill="none" stroke="#2a9a2a" stroke-width="1" stroke-linejoin="round" shape-rendering="crispEdges" />
<polyline points="13.0,238.0 14.0,237.8 15.1,237.6 16.2,237.3 17.3,237.1 18.5,236.8 19.7,236.6 21.0,236.3 22.3,236.0 23.6,235.7 25.0,235.4 26.5,235.1 27.9,234.8 29.5,234.4 31.0,234.1 32.7,233.8 34.3,233.4 36.0,233.0 37.8,232.7 39.6,232.3 41.4,231.9 43.3,231.5 45.2,231.0 47.2,230.6 49.3,230.2 51.3,229.7 53.5,229.3 55.6,228.8 57.9,228.3 60.1,227.8 62.4,227.3 64.8,226.8 67.2,226.3 69.7,225.8 72.2,225.2 74.7,224.7 77.3,224.1 80.0,223.5 82.7,222.9 85.5,222.3 88.3,221.7 91.1,221.1 94.0,220.5 97.0,219.8 100.0,219.2 101.5,218.9 103.0,218.5 104.6,218.2 106.2,217.8 107.8,217.5 109.5,217.1 111.2,216.8 112.9,216.4 114.6,216.0 116.4,215.6 118.2,215.2 120.1,214.8 122.0,214.4 123.9,214.0 125.8,213.6 127.8,213.1 129.7,212.7 131.7,212.3 133.7,211.8 135.8,211.4 137.9,210.9 139.9,210.5 142.0,210.0 144.2,209.6 146.3,209.1 148.4,208.6 150.6,208.2 152.8,207.7 155.0,207.2 157.2,206.7 159.4,206.2 161.6,205.8 163.9,205.3 166.1,204.8 168.4,204.3 170.6,203.8 172.9,203.3 175.2,202.8 177.5,202.3 179.7,201.8 182.0,201.3 184.3,200.8 186.6,200.3 188.9,199.8 191.2,199.3 193.5,198.8 195.7,198.3 198.0,197.8 200.3,197.3 202.6,196.8 204.8,196.3 207.1,195.9 209.3,195.4 211.6,194.9 213.8,194.4 216.0,193.9 218.2,193.4 220.4,193.0 222.6,192.5 224.7,192.0 226.9,191.5 229.0,191.1 231.2,190.6 233.3,190.2 235.3,189.7 237.4,189.3 239.4,188.8 241.5,188.4 243.5,187.9 245.4,187.5 247.4,187.1 249.3,186.7 251.2,186.3 253.1,185.9 254.9,185.5 256.7,185.1 258.5,184.7 260.3,184.3 262.0,183.9 263.7,183.5 265.4,183.2 267.0,182.8 268.6,182.5 270.2,182.2 271.7,181.8 273.2,181.5 274.6,181.2 276.0,180.9 277.4,180.6 278.7,180.3 280.0,180.0 284.2,179.1 288.1,178.3 291.7,177.5 294.9,176.8 297.8,176.2 300.5,175.7 302.9,175.1 305.1,174.7 307.1,174.3 308.8,173.9 310.5,173.6 312.0,173.3 313.3,173.0 314.6,172.7 315.8,172.5 316.9,172.3 318.0,172.0 319.1,171.8 320.2,171.6 321.3,171.4 322.5,171.2 323.8,171.0 325.1,170.7 326.6,170.4 328.2,170.1 330.0,169.8 332.0,169.4 334.0,169.0 336.1,168.6 338.1,168.2 340.1,167.8 342.1,167.5 344.1,167.1 346.1,166.7 348.1,166.3 350.1,166.0 352.1,165.6 354.1,165.3 356.0,164.9 358.0,164.5 359.9,164.2 361.9,163.9 363.8,163.5 365.7,163.2 367.6,162.9 369.5,162.6 371.3,162.3 373.2,162.0 375.0,161.7 376.8,161.4 378.9,161.1 381.1,160.8 383.1,160.5 385.2,160.2 387.3,159.9 389.3,159.6 391.3,159.4 393.3,159.1 395.2,158.9 397.2,158.6 399.1,158.4 401.1,158.2 403.0,158.0 404.9,157.7 406.7,157.5 408.6,157.3 410.5,157.1 412.3,156.9 414.2,156.7 416.0,156.4 418.0,156.2 420.0,156.0 422.0,155.7 423.9,155.5 425.8,155.3 427.8,155.1 429.6,154.9 431.5,154.7 433.4,154.4 435.2,154.2 437.1,154.0 438.9,153.8 440.8,153.6 442.6,153.5 444.5,153.3 446.3,153.1 448.1,152.9 450.0,152.7 452.0,152.5 453.9,152.3 455.8,152.1 457.6,151.9 459.5,151.7 461.4,151.6 463.2,151.4 465.1,151.2 466.9,151.0 468.8,150.8 470.7,150.7 472.7,150.5 474.6,150.4 476.7,150.2 478.7,150.1 480.8,150.0 483.0,149.9 484.8,149.8 486.6,149.7 488.6,149.6 490.7,149.6 492.8,149.5 494.9,149.5 497.1,149.4 499.4,149.4 501.6,149.3 503.8,149.3 506.1,149.3 508.2,149.2 510.4,149.2 512.4,149.2 514.4,149.1 516.3,149.1 518.1,149.1 519.8,149.1 521.3,149.1 522.7,149.0 524.0,149.0 525.0,149.0" fill="none" stroke="#2a9a2a" stroke-width="1" stroke-linejoin="round" shape-rendering="crispEdges" />
<polyline points="13.0,167.0 14.0,166.8 15.1,166.6 16.2,166.3 17.3,166.1 18.5,165.8 19.7,165.6 21.0,165.3 22.3,165.0 23.6,164.7 25.0,164.4 26.5,164.1 27.9,163.8 29.5,163.5 31.0,163.1 32.7,162.8 34.3,162.4 36.0,162.1 37.8,161.7 39.6,161.3 41.4,160.9 43.3,160.5 45.2,160.1 47.2,159.7 49.3,159.2 51.3,158.8 53.5,158.3 55.6,157.9 57.9,157.4 60.1,156.9 62.4,156.4 64.8,155.9 67.2,155.4 69.7,154.8 72.2,154.3 74.7,153.7 77.3,153.2 80.0,152.6 82.7,152.0 85.5,151.4 88.3,150.8 91.1,150.2 94.0,149.6 97.0,148.9 100.0,148.3 101.5,148.0 103.0,147.7 104.6,147.3 106.2,147.0 107.8,146.6 109.5,146.3 111.2,145.9 112.9,145.5 114.6,145.1 116.4,144.8 118.2,144.4 120.1,144.0 122.0,143.6 123.9,143.1 125.8,142.7 127.8,142.3 129.7,141.9 131.7,141.4 133.7,141.0 135.8,140.6 137.9,140.1 139.9,139.7 142.0,139.2 144.2,138.7 146.3,138.3 148.4,137.8 150.6,137.4 152.8,136.9 155.0,136.4 157.2,135.9 159.4,135.4 161.6,135.0 163.9,134.5 166.1,134.0 168.4,133.5 170.6,133.0 172.9,132.5 175.2,132.0 177.5,131.5 179.7,131.0 182.0,130.5 184.3,130.1 186.6,129.6 188.9,129.1 191.2,128.6 193.5,128.1 195.7,127.6 198.0,127.1 200.3,126.6 202.6,126.1 204.8,125.6 207.1,125.1 209.3,124.6 211.6,124.2 213.8,123.7 216.0,123.2 218.2,122.7 220.4,122.2 222.6,121.8 224.7,121.3 226.9,120.8 229.0,120.4 231.2,119.9 233.3,119.5 235.3,119.0 237.4,118.6 239.4,118.1 241.5,117.7 243.5,117.3 245.4,116.8 247.4,116.4 249.3,116.0 251.2,115.6 253.1,115.2 254.9,114.8 256.7,114.4 258.5,114.0 260.3,113.6 262.0,113.3 263.7,112.9 265.4,112.5 267.0,112.2 268.6,111.8 270.2,111.5 271.7,111.2 273.2,110.9 274.6,110.6 276.0,110.3 277.4,110.0 278.7,109.7 280.0,109.4 284.2,108.5 288.1,107.7 291.7,106.9 294.9,106.2 297.8,105.6 300.5,105.0 302.9,104.5 305.1,104.1 307.1,103.7 308.8,103.3 310.5,103.0 312.0,102.7 313.3,102.4 314.6,102.1 315.8,101.9 316.9,101.7 318.0,101.5 319.1,101.3 320.2,101.0 321.3,100.8 322.5,100.6 323.8,100.4 325.1,100.1 326.6,99.8 328.2,99.5 330.0,99.2 332.0,98.8 334.0,98.4 336.1,98.0 338.1,97.7 340.1,97.3 342.1,96.9 344.1,96.5 346.1,96.2 348.1,95.8 350.1,95.4 352.1,95.1 354.1,94.7 356.0,94.4 358.0,94.0 359.9,93.7 361.9,93.3 363.8,93.0 365.7,92.7 367.6,92.4 369.5,92.1 371.3,91.8 373.2,91.5 375.0,91.2 376.8,90.9 378.9,90.6 381.1,90.3 383.1,90.0 385.2,89.7 387.3,89.4 389.3,89.1 391.3,88.9 393.3,88.6 395.2,88.4 397.2,88.2 399.1,87.9 401.1,87.7 403.0,87.5 404.9,87.3 406.7,87.1 408.6,86.8 410.5,86.6 412.3,86.4 414.2,86.2 416.0,86.0 418.0,85.8 420.0,85.5 422.0,85.3 423.9,85.1 425.8,84.9 427.8,84.6 429.6,84.4 431.5,84.2 433.4,84.0 435.2,83.8 437.1,83.6 438.9,83.4 440.8,83.2 442.6,83.0 444.5,82.9 446.3,82.7 448.1,82.5 450.0,82.3 452.0,82.1 453.9,81.9 455.8,81.7 457.6,81.5 459.5,81.3 461.4,81.2 463.2,81.0 465.1,80.8 466.9,80.6 468.8,80.5 470.7,80.3 472.7,80.1 474.6,80.0 476.7,79.9 478.7,79.7 480.8,79.6 483.0,79.5 484.8,79.4 486.6,79.3 488.6,79.3 490.7,79.2 492.8,79.2 494.9,79.1 497.1,79.1 499.4,79.0 501.6,79.0 503.8,79.0 506.1,78.9 508.2,78.9 510.4,78.9 512.4,78.8 514.4,78.8 516.3,78.8 518.1,78.8 519.8,78.8 521.3,78.8 522.7,78.7 524.0,78.7 525.0,78.7" fill="none" stroke="#0000ff" stroke-width="1" stroke-linejoin="round" shape-rendering="crispEdges" />
<polyline points="13.0,173.3 25.6,170.2 50.0,172.0 72.4,173.3 94.0,174.0 104.0,170.0 119.0,162.4 166.0,142.0 186.0,137.0 200.0,138.5 217.5,140.5 228.0,139.0 280.0,128.0 330.0,118.0 380.7,108.5 396.5,103.6 441.7,84.0 465.0,76.0 479.0,76.0 500.6,80.0 525.0,88.0" fill="none" stroke="#ff0000" stroke-width="1" stroke-linejoin="round" shape-rendering="crispEdges" />
<g shape-rendering="crispEdges">
<rect x="13" y="193" width="1" height="11" fill="#00ff00" />
<rect x="21" y="189" width="1" height="15" fill="#00ff00" />
<rect x="29" y="195" width="1" height="9" fill="#00ff00" />
<rect x="37" y="184" width="1" height="20" fill="#00ff00" />
<rect x="45" y="184" width="1" height="20" fill="#00ff00" />
<rect x="53" y="184" width="1" height="20" fill="#00ff00" />
<rect x="61" y="184" width="1" height="20" fill="#00ff00" />
<rect x="69" y="187" width="1" height="17" fill="#00ff00" />
<rect x="77" y="187" width="1" height="17" fill="#00ff00" />
<rect x="85" y="187" width="1" height="17" fill="#00ff00" />
<rect x="93" y="192" width="1" height="12" fill="#00ff00" />
<rect x="101" y="192" width="1" height="12" fill="#00ff00" />
<rect x="109" y="189" width="1" height="15" fill="#00ff00" />
<rect x="117" y="195" width="1" height="9" fill="#00ff00" />
<rect x="125" y="195" width="1" height="9" fill="#00ff00" />
<rect x="133" y="195" width="1" height="9" fill="#00ff00" />
<rect x="141" y="192" width="1" height="12" fill="#00ff00" />
<rect x="149" y="197" width="1" height="7" fill="#00ff00" />
<rect x="157" y="196" width="1" height="8" fill="#00ff00" />
<rect x="165" y="192" width="1" height="12" fill="#00ff00" />
<rect x="173" y="195" width="1" height="9" fill="#00ff00" />
<rect x="181" y="192" width="1" height="12" fill="#00ff00" />
<rect x="189" y="198" width="1" height="6" fill="#00ff00" />
<rect x="197" y="192" width="1" height="12" fill="#00ff00" />
<rect x="205" y="197" width="1" height="7" fill="#00ff00" />
<rect x="213" y="198" width="1" height="6" fill="#00ff00" />
<rect x="221" y="195" width="1" height="9" fill="#00ff00" />
<rect x="229" y="196" width="1" height="8" fill="#00ff00" />
<rect x="237" y="195" width="1" height="9" fill="#00ff00" />
<rect x="245" y="195" width="1" height="9" fill="#00ff00" />
<rect x="253" y="194" width="1" height="10" fill="#00ff00" />
<rect x="261" y="198" width="1" height="6" fill="#00ff00" />
<rect x="269" y="192" width="1" height="12" fill="#00ff00" />
<rect x="277" y="194" width="1" height="10" fill="#00ff00" />
<rect x="285" y="196" width="1" height="8" fill="#00ff00" />
<rect x="293" y="190" width="1" height="14" fill="#00ff00" />
<rect x="301" y="191" width="1" height="13" fill="#00ff00" />
<rect x="309" y="194" width="1" height="10" fill="#00ff00" />
<rect x="317" y="196" width="1" height="8" fill="#00ff00" />
<rect x="325" y="196" width="1" height="8" fill="#00ff00" />
<rect x="333" y="197" width="1" height="7" fill="#00ff00" />
<rect x="341" y="196" width="1" height="8" fill="#00ff00" />
<rect x="349" y="200" width="1" height="4" fill="#00ff00" />
<rect x="357" y="199" width="1" height="5" fill="#00ff00" />
<rect x="365" y="194" width="1" height="10" fill="#00ff00" />
<rect x="373" y="191" width="1" height="13" fill="#00ff00" />
<rect x="381" y="190" width="1" height="14" fill="#00ff00" />
<rect x="389" y="196" width="1" height="8" fill="#00ff00" />
<rect x="397" y="183" width="1" height="21" fill="#00ff00" />
<rect x="405" y="186" width="1" height="18" fill="#00ff00" />
<rect x="413" y="194" width="1" height="10" fill="#00ff00" />
<rect x="421" y="190" width="1" height="14" fill="#00ff00" />
<rect x="429" y="196" width="1" height="8" fill="#00ff00" />
<rect x="437" y="191" width="1" height="13" fill="#00ff00" />
<rect x="445" y="196" width="1" height="8" fill="#00ff00" />
<rect x="453" y="194" width="1" height="10" fill="#00ff00" />
<rect x="461" y="198" width="1" height="6" fill="#00ff00" />
<rect x="469" y="194" width="1" height="10" fill="#00ff00" />
<rect x="477" y="194" width="1" height="10" fill="#00ff00" />
<rect x="485" y="183" width="1" height="21" fill="#00ff00" />
<rect x="493" y="192" width="1" height="12" fill="#00ff00" />
<rect x="501" y="186" width="1" height="18" fill="#00ff00" />
<rect x="509" y="190" width="1" height="14" fill="#00ff00" />
<rect x="517" y="190" width="1" height="14" fill="#00ff00" />
<rect x="525" y="201" width="1" height="3" fill="#00ff00" />
</g>
<polyline points="13.0,177.2 35.0,172.5 69.0,168.2 102.0,168.2 117.6,165.5 142.6,157.7 200.0,141.5 280.0,119.5 325.7,108.5 372.9,101.7 420.0,85.0 469.0,67.3 502.5,62.4" fill="none" stroke="#c6e6f4" stroke-width="3" stroke-linejoin="round" />
<polyline points="78.0,168.2 86.0,168.2" fill="none" stroke="#ff6347" stroke-width="3" stroke-linejoin="round" />
<polyline points="502.5,62.4 510.0,63.4 526.0,63.4" fill="none" stroke="#ff6347" stroke-width="3" stroke-linejoin="round" />
<g shape-rendering="crispEdges">
<rect x="13" y="149" width="1" height="27" fill="#00ff00" />
<rect x="11" y="155" width="5" height="19" fill="#00ff00" />
<rect x="12" y="156" width="3" height="17" fill="#000" />
<rect x="21" y="141" width="1" height="26" fill="#00ff00" />
<rect x="19" y="153" width="5" height="9" fill="#00ff00" />
<rect x="20" y="154" width="3" height="7" fill="#000" />
<rect x="29" y="149" width="1" height="21" fill="#00ff00" />
<rect x="27" y="153" width="5" height="1" fill="#00ff00" />
<rect x="37" y="148" width="1" height="40" fill="#00ff00" />
<rect x="35" y="153" width="5" height="29" fill="#00ff00" />
<rect x="36" y="154" width="3" height="27" fill="#fff" />
<rect x="45" y="176" width="1" height="12" fill="#00ff00" />
<rect x="43" y="181" width="5" height="3" fill="#00ff00" />
<rect x="44" y="182" width="3" height="1" fill="#fff" />
<rect x="53" y="151" width="1" height="34" fill="#00ff00" />
<rect x="51" y="156" width="5" height="28" fill="#00ff00" />
<rect x="52" y="157" width="3" height="26" fill="#000" />
<rect x="61" y="152" width="1" height="39" fill="#00ff00" />
<rect x="59" y="155" width="5" height="34" fill="#00ff00" />
<rect x="60" y="156" width="3" height="32" fill="#fff" />
<rect x="69" y="181" width="1" height="10" fill="#00ff00" />
<rect x="67" y="184" width="5" height="5" fill="#00ff00" />
<rect x="68" y="185" width="3" height="3" fill="#000" />
<rect x="77" y="164" width="1" height="24" fill="#00ff00" />
<rect x="75" y="183" width="5" height="4" fill="#00ff00" />
<rect x="76" y="184" width="3" height="2" fill="#000" />
<rect x="85" y="175" width="1" height="13" fill="#00ff00" />
<rect x="83" y="176" width="5" height="10" fill="#00ff00" />
<rect x="84" y="177" width="3" height="8" fill="#000" />
<rect x="93" y="164" width="1" height="17" fill="#00ff00" />
<rect x="91" y="168" width="5" height="9" fill="#00ff00" />
<rect x="92" y="169" width="3" height="7" fill="#000" />
<rect x="101" y="141" width="1" height="29" fill="#00ff00" />
<rect x="99" y="143" width="5" height="26" fill="#00ff00" />
<rect x="100" y="144" width="3" height="24" fill="#000" />
<rect x="109" y="118" width="1" height="27" fill="#00ff00" />
<rect x="107" y="120" width="5" height="24" fill="#00ff00" />
<rect x="108" y="121" width="3" height="22" fill="#000" />
<rect x="117" y="115" width="1" height="20" fill="#00ff00" />
<rect x="115" y="122" width="5" height="6" fill="#00ff00" />
<rect x="116" y="123" width="3" height="4" fill="#fff" />
<rect x="125" y="114" width="1" height="15" fill="#00ff00" />
<rect x="123" y="120" width="5" height="8" fill="#00ff00" />
<rect x="124" y="121" width="3" height="6" fill="#000" />
<rect x="133" y="121" width="1" height="16" fill="#00ff00" />
<rect x="131" y="122" width="5" height="8" fill="#00ff00" />
<rect x="132" y="123" width="3" height="6" fill="#fff" />
<rect x="141" y="115" width="1" height="20" fill="#00ff00" />
<rect x="139" y="122" width="5" height="8" fill="#00ff00" />
<rect x="140" y="123" width="3" height="6" fill="#000" />
<rect x="149" y="120" width="1" height="11" fill="#00ff00" />
<rect x="147" y="122" width="5" height="1" fill="#00ff00" />
<rect x="157" y="116" width="1" height="17" fill="#00ff00" />
<rect x="155" y="122" width="5" height="1" fill="#00ff00" />
<rect x="165" y="105" width="1" height="22" fill="#00ff00" />
<rect x="163" y="114" width="5" height="9" fill="#00ff00" />
<rect x="164" y="115" width="3" height="7" fill="#000" />
<rect x="173" y="105" width="1" height="17" fill="#00ff00" />
<rect x="171" y="106" width="5" height="9" fill="#00ff00" />
<rect x="172" y="107" width="3" height="7" fill="#000" />
<rect x="181" y="105" width="1" height="19" fill="#00ff00" />
<rect x="179" y="106" width="5" height="11" fill="#00ff00" />
<rect x="180" y="107" width="3" height="9" fill="#fff" />
<rect x="189" y="115" width="1" height="16" fill="#00ff00" />
<rect x="187" y="116" width="5" height="13" fill="#00ff00" />
<rect x="188" y="117" width="3" height="11" fill="#fff" />
<rect x="197" y="127" width="1" height="25" fill="#00ff00" />
<rect x="195" y="128" width="5" height="16" fill="#00ff00" />
<rect x="196" y="129" width="3" height="14" fill="#fff" />
<rect x="205" y="143" width="1" height="13" fill="#00ff00" />
<rect x="203" y="144" width="5" height="10" fill="#00ff00" />
<rect x="204" y="145" width="3" height="8" fill="#fff" />
<rect x="213" y="138" width="1" height="18" fill="#00ff00" />
<rect x="211" y="142" width="5" height="12" fill="#00ff00" />
<rect x="212" y="143" width="3" height="10" fill="#000" />
<rect x="221" y="139" width="1" height="18" fill="#00ff00" />
<rect x="219" y="142" width="5" height="6" fill="#00ff00" />
<rect x="220" y="143" width="3" height="4" fill="#fff" />
<rect x="229" y="126" width="1" height="28" fill="#00ff00" />
<rect x="227" y="127" width="5" height="22" fill="#00ff00" />
<rect x="228" y="128" width="3" height="20" fill="#000" />
<rect x="237" y="113" width="1" height="16" fill="#00ff00" />
<rect x="235" y="114" width="5" height="14" fill="#00ff00" />
<rect x="236" y="115" width="3" height="12" fill="#000" />
<rect x="245" y="102" width="1" height="21" fill="#00ff00" />
<rect x="243" y="107" width="5" height="7" fill="#00ff00" />
<rect x="244" y="108" width="3" height="5" fill="#000" />
<rect x="253" y="103" width="1" height="27" fill="#00ff00" />
<rect x="251" y="109" width="5" height="13" fill="#00ff00" />
<rect x="252" y="110" width="3" height="11" fill="#fff" />
<rect x="261" y="118" width="1" height="12" fill="#00ff00" />
<rect x="259" y="123" width="5" height="1" fill="#00ff00" />
<rect x="269" y="101" width="1" height="23" fill="#00ff00" />
<rect x="267" y="111" width="5" height="12" fill="#00ff00" />
<rect x="268" y="112" width="3" height="10" fill="#000" />
<rect x="277" y="109" width="1" height="19" fill="#00ff00" />
<rect x="275" y="110" width="5" height="15" fill="#00ff00" />
<rect x="276" y="111" width="3" height="13" fill="#fff" />
<rect x="285" y="115" width="1" height="21" fill="#00ff00" />
<rect x="283" y="115" width="5" height="7" fill="#00ff00" />
<rect x="284" y="116" width="3" height="5" fill="#000" />
<rect x="293" y="86" width="1" height="31" fill="#00ff00" />
<rect x="291" y="101" width="5" height="15" fill="#00ff00" />
<rect x="292" y="102" width="3" height="13" fill="#000" />
<rect x="301" y="88" width="1" height="30" fill="#00ff00" />
<rect x="299" y="101" width="5" height="15" fill="#00ff00" />
<rect x="300" y="102" width="3" height="13" fill="#fff" />
<rect x="309" y="103" width="1" height="18" fill="#00ff00" />
<rect x="307" y="114" width="5" height="2" fill="#00ff00" />
<rect x="317" y="103" width="1" height="22" fill="#00ff00" />
<rect x="315" y="112" width="5" height="1" fill="#00ff00" />
<rect x="325" y="100" width="1" height="16" fill="#00ff00" />
<rect x="323" y="107" width="5" height="5" fill="#00ff00" />
<rect x="324" y="108" width="3" height="3" fill="#000" />
<rect x="333" y="105" width="1" height="13" fill="#00ff00" />
<rect x="331" y="107" width="5" height="6" fill="#00ff00" />
<rect x="332" y="108" width="3" height="4" fill="#fff" />
<rect x="341" y="108" width="1" height="18" fill="#00ff00" />
<rect x="339" y="111" width="5" height="9" fill="#00ff00" />
<rect x="340" y="112" width="3" height="7" fill="#fff" />
<rect x="349" y="112" width="1" height="11" fill="#00ff00" />
<rect x="347" y="117" width="5" height="4" fill="#00ff00" />
<rect x="348" y="118" width="3" height="2" fill="#000" />
<rect x="357" y="100" width="1" height="19" fill="#00ff00" />
<rect x="355" y="101" width="5" height="17" fill="#00ff00" />
<rect x="356" y="102" width="3" height="15" fill="#000" />
<rect x="365" y="94" width="1" height="13" fill="#00ff00" />
<rect x="363" y="101" width="5" height="1" fill="#00ff00" />
<rect x="373" y="80" width="1" height="22" fill="#00ff00" />
<rect x="371" y="81" width="5" height="21" fill="#00ff00" />
<rect x="372" y="82" width="3" height="19" fill="#000" />
<rect x="381" y="73" width="1" height="20" fill="#00ff00" />
<rect x="379" y="81" width="5" height="3" fill="#00ff00" />
<rect x="380" y="82" width="3" height="1" fill="#fff" />
<rect x="389" y="78" width="1" height="12" fill="#00ff00" />
<rect x="387" y="83" width="5" height="5" fill="#00ff00" />
<rect x="388" y="84" width="3" height="3" fill="#fff" />
<rect x="397" y="54" width="1" height="36" fill="#00ff00" />
<rect x="395" y="57" width="5" height="32" fill="#00ff00" />
<rect x="396" y="58" width="3" height="30" fill="#000" />
<rect x="405" y="49" width="1" height="19" fill="#00ff00" />
<rect x="403" y="52" width="5" height="6" fill="#00ff00" />
<rect x="404" y="53" width="3" height="4" fill="#000" />
<rect x="413" y="46" width="1" height="17" fill="#00ff00" />
<rect x="411" y="52" width="5" height="7" fill="#00ff00" />
<rect x="412" y="53" width="3" height="5" fill="#fff" />
<rect x="421" y="44" width="1" height="29" fill="#00ff00" />
<rect x="419" y="57" width="5" height="12" fill="#00ff00" />
<rect x="420" y="58" width="3" height="10" fill="#fff" />
<rect x="429" y="63" width="1" height="12" fill="#00ff00" />
<rect x="427" y="64" width="5" height="5" fill="#00ff00" />
<rect x="428" y="65" width="3" height="3" fill="#000" />
<rect x="437" y="39" width="1" height="33" fill="#00ff00" />
<rect x="435" y="53" width="5" height="11" fill="#00ff00" />
<rect x="436" y="54" width="3" height="9" fill="#000" />
<rect x="445" y="47" width="1" height="16" fill="#00ff00" />
<rect x="443" y="53" width="5" height="5" fill="#00ff00" />
<rect x="444" y="54" width="3" height="3" fill="#fff" />
<rect x="453" y="53" width="1" height="22" fill="#00ff00" />
<rect x="451" y="59" width="5" height="2" fill="#00ff00" />
<rect x="461" y="47" width="1" height="24" fill="#00ff00" />
<rect x="459" y="47" width="5" height="13" fill="#00ff00" />
<rect x="460" y="48" width="3" height="11" fill="#000" />
<rect x="469" y="47" width="1" height="25" fill="#00ff00" />
<rect x="467" y="47" width="5" height="21" fill="#00ff00" />
<rect x="468" y="48" width="3" height="19" fill="#fff" />
<rect x="477" y="63" width="1" height="14" fill="#00ff00" />
<rect x="475" y="69" width="5" height="5" fill="#00ff00" />
<rect x="476" y="70" width="3" height="3" fill="#fff" />
<rect x="485" y="61" width="1" height="44" fill="#00ff00" />
<rect x="483" y="74" width="5" height="16" fill="#00ff00" />
<rect x="484" y="75" width="3" height="14" fill="#fff" />
<rect x="493" y="81" width="1" height="20" fill="#00ff00" />
<rect x="491" y="83" width="5" height="7" fill="#00ff00" />
<rect x="492" y="84" width="3" height="5" fill="#000" />
<rect x="501" y="80" width="1" height="34" fill="#00ff00" />
<rect x="499" y="83" width="5" height="28" fill="#00ff00" />
<rect x="500" y="84" width="3" height="26" fill="#fff" />
<rect x="509" y="99" width="1" height="13" fill="#00ff00" />
<rect x="507" y="106" width="5" height="3" fill="#00ff00" />
<rect x="508" y="107" width="3" height="1" fill="#fff" />
<rect x="517" y="101" width="1" height="15" fill="#00ff00" />
<rect x="515" y="111" width="5" height="1" fill="#00ff00" />
<rect x="525" y="105" width="1" height="9" fill="#00ff00" />
<rect x="523" y="105" width="5" height="7" fill="#00ff00" />
<rect x="524" y="106" width="3" height="5" fill="#000" />
</g>
</g>
<path d="M531 30 l12 0 l-6 6z" fill="#8c9cb0"/>
<g shape-rendering="crispEdges">
<rect x="12" y="29" width="800" height="1" fill="#ffffff" />
<rect x="12" y="204" width="800" height="1" fill="#ffffff" />
<rect x="12" y="29" width="1" height="176" fill="#ffffff" />
<rect x="12" y="206" width="800" height="1" fill="#ffffff" />
<rect x="12" y="249" width="800" height="1" fill="#ffffff" />
<rect x="12" y="206" width="1" height="44" fill="#ffffff" />
<rect x="12" y="251" width="800" height="1" fill="#ffffff" />
<rect x="12" y="323" width="800" height="1" fill="#ffffff" />
<rect x="12" y="251" width="1" height="73" fill="#ffffff" />
<rect x="12" y="325" width="800" height="1" fill="#ffffff" />
<rect x="12" y="396" width="800" height="1" fill="#ffffff" />
<rect x="12" y="325" width="1" height="72" fill="#ffffff" />
<rect x="811" y="29" width="1" height="368" fill="#ffffff" />
<rect x="812" y="36" width="3" height="1" fill="#ffffff" />
<rect x="812" y="69" width="3" height="1" fill="#ffffff" />
<rect x="812" y="135" width="3" height="1" fill="#ffffff" />
<rect x="812" y="168" width="3" height="1" fill="#ffffff" />
<rect x="812" y="201" width="3" height="1" fill="#ffffff" />
<rect x="812" y="212" width="3" height="1" fill="#ffffff" />
<rect x="812" y="216" width="3" height="1" fill="#ffffff" />
<rect x="812" y="240" width="3" height="1" fill="#ffffff" />
</g>
<text x="817" y="39.5" font-size="9.5" fill="#ffffff" text-anchor="start" textLength="33" lengthAdjust="spacingAndGlyphs" >6522.00</text>
<text x="817" y="72.5" font-size="9.5" fill="#ffffff" text-anchor="start" textLength="33" lengthAdjust="spacingAndGlyphs" >6511.20</text>
<text x="817" y="138.5" font-size="9.5" fill="#ffffff" text-anchor="start" textLength="33" lengthAdjust="spacingAndGlyphs" >6489.90</text>
<text x="817" y="171.5" font-size="9.5" fill="#ffffff" text-anchor="start" textLength="33" lengthAdjust="spacingAndGlyphs" >6479.10</text>
<text x="817" y="204.5" font-size="9.5" fill="#ffffff" text-anchor="start" textLength="33" lengthAdjust="spacingAndGlyphs" >6468.30</text>
<rect x="813" y="99" width="41" height="11" fill="#ffffff" shape-rendering="crispEdges"/>
<text x="817" y="107.8" font-size="9.5" fill="#000" text-anchor="start" textLength="33" lengthAdjust="spacingAndGlyphs" >6499.88</text>
<text x="815.5" y="215.5" font-size="9.5" fill="#ffffff" text-anchor="start" textLength="14" lengthAdjust="spacingAndGlyphs" >100</text>
<text x="815.5" y="219.5" font-size="9.5" fill="#ffffff" text-anchor="start" textLength="9.5" lengthAdjust="spacingAndGlyphs" >80</text>
<text x="815.5" y="243.3" font-size="9.5" fill="#ffffff" text-anchor="start" textLength="9.5" lengthAdjust="spacingAndGlyphs" >20</text>
<text x="815.5" y="247" font-size="9.5" fill="#ffffff" text-anchor="start" >0</text>
<text x="815.5" y="261.5" font-size="9.5" fill="#ffffff" text-anchor="start" >100</text>
<text x="815.5" y="277.0" font-size="9.5" fill="#ffffff" text-anchor="start" >70</text>
<text x="815.5" y="291.0" font-size="9.5" fill="#ffffff" text-anchor="start" >50</text>
<text x="815.5" y="305.0" font-size="9.5" fill="#ffffff" text-anchor="start" >30</text>
<text x="815.5" y="320.0" font-size="9.5" fill="#ffffff" text-anchor="start" >0</text>
<text x="815.5" y="336" font-size="9.5" fill="#ffffff" text-anchor="start" >15</text>
<text x="814" y="393" font-size="9.5" fill="#ffffff" text-anchor="start" >-15</text>
<rect x="813" y="338" width="8" height="20" fill="#4b0082" shape-rendering="crispEdges"/>
<rect x="813" y="367" width="9" height="18" fill="#4b0082" shape-rendering="crispEdges"/>
<text x="814.5" y="346.5" font-size="9.5" fill="#4a3ac8" text-anchor="start" >8</text>
<text x="814.5" y="356" font-size="9.5" fill="#4a3ac8" text-anchor="start" >4</text>
<text x="813.5" y="375" font-size="9.5" fill="#4a3ac8" text-anchor="start" >-4</text>
<text x="813.5" y="383.5" font-size="9.5" fill="#4a3ac8" text-anchor="start" >-8</text>
<rect x="813" y="357" width="39" height="11" fill="#ff0000" shape-rendering="crispEdges"/>
<text x="817" y="366" font-size="9.5" fill="#d08060" text-anchor="start" textLength="32" lengthAdjust="spacingAndGlyphs" >-0.7822</text>
<g shape-rendering="crispEdges">
<line x1="13" y1="216.5" x2="811" y2="216.5" stroke="#ffffff" stroke-width="1" stroke-dasharray="4 3" />
<line x1="13" y1="240.5" x2="811" y2="240.5" stroke="#ffffff" stroke-width="1" stroke-dasharray="4 3" />
<line x1="13" y1="273.5" x2="811" y2="273.5" stroke="#ffffff" stroke-width="1" stroke-dasharray="4 3" />
<line x1="13" y1="287.5" x2="811" y2="287.5" stroke="#ffffff" stroke-width="1" stroke-dasharray="4 3" />
<line x1="13" y1="301.5" x2="811" y2="301.5" stroke="#ffffff" stroke-width="1" stroke-dasharray="4 3" />
</g>
<polyline points="13.8,215.6 32.6,218.8 37.6,241.4 46.4,240.1 51.4,218.8 60.2,241.4 69.0,236.4 80.3,232.6 91.6,217.6 102.9,209.5 110.4,209.5 120.4,215.1 133.0,227.6 145.5,222.6 160.6,223.8 175.6,218.8 188.2,243.9 203.2,246.4 213.2,236.4 222.0,233.9 227.0,212.5 233.3,207.5 244.6,211.3 260.9,240.1 269.7,225.1 278.5,238.9 292.3,221.3 301.1,231.4 317.4,236.4 331.2,228.9 343.7,237.6 350.0,232.6 356.2,208.8 366.3,213.8 373.8,210.0 388.9,223.8 398.9,210.0 407.7,209.5 421.5,230.1 434.3,226.3 439.3,223.8 453.1,232.6 463.1,218.8 475.7,245.2 487.0,236.4 494.5,232.6 505.8,246.4 518.3,245.2 525.8,237.6" fill="none" stroke="#ff0000" stroke-width="1" stroke-linejoin="round" stroke-dasharray="3 4" shape-rendering="crispEdges" />
<text x="17" y="219" font-size="9.5" fill="#ffffff" text-anchor="start" textLength="121.5" lengthAdjust="spacingAndGlyphs" >Stoch(4,1,1) 30.0444 30.0444</text>
<polyline points="13.8,275.3 28.9,273.5" fill="none" stroke="#008000" stroke-width="2.2" stroke-linejoin="round" stroke-linecap="round"/>
<polyline points="28.9,273.5 37.6,280.3" fill="none" stroke="#ffff00" stroke-width="2.2" stroke-linejoin="round" stroke-linecap="round"/>
<polyline points="37.6,280.3 39.7,283.6 42.8,288.1 46.4,291.6 48.9,292.4 51.8,292.7 54.8,292.6 57.7,292.6 60.2,292.8 63.8,294.0 66.9,295.5 69.0,296.6" fill="none" stroke="#ffa500" stroke-width="2.2" stroke-linejoin="round" stroke-linecap="round"/>
<polyline points="69.0,296.6 77.8,296.6" fill="none" stroke="#ffff00" stroke-width="2.2" stroke-linejoin="round" stroke-linecap="round"/>
<polyline points="77.8,296.6 79.7,296.4 82.4,296.0 85.3,295.3 87.9,294.6 90.7,293.4 94.1,290.8 96.6,287.9 99.5,284.0 102.6,279.8 105.4,275.9 107.9,272.8 110.9,269.4 113.1,267.4 115.4,265.7 117.9,264.3 120.4,263.4 122.9,262.7 125.7,262.3 128.5,262.3 130.5,262.2" fill="none" stroke="#008000" stroke-width="2.2" stroke-linejoin="round" stroke-linecap="round"/>
<polyline points="130.5,262.2 132.1,262.7 134.5,263.3 137.4,264.0 140.5,264.7 142.9,265.2 145.7,265.8 148.6,266.4 151.5,266.9 153.8,267.4 155.5,267.7" fill="none" stroke="#ffa500" stroke-width="2.2" stroke-linejoin="round" stroke-linecap="round"/>
<polyline points="155.5,267.7 165.6,266.5" fill="none" stroke="#ffff00" stroke-width="2.2" stroke-linejoin="round" stroke-linecap="round"/>
<polyline points="165.6,266.5 173.1,264.7" fill="none" stroke="#008000" stroke-width="2.2" stroke-linejoin="round" stroke-linecap="round"/>
<polyline points="173.1,264.7 180.6,267.2" fill="none" stroke="#ffff00" stroke-width="2.2" stroke-linejoin="round" stroke-linecap="round"/>
<polyline points="180.6,267.2 182.2,268.5 184.4,270.4 186.9,274.0 189.6,280.3 192.6,288.3 195.7,295.3 198.2,299.5 200.8,303.2 203.4,306.3 205.7,308.6 208.4,310.0 210.7,310.0 213.2,309.9 216.4,309.9 219.7,309.8 222.0,309.6" fill="none" stroke="#ffa500" stroke-width="2.2" stroke-linejoin="round" stroke-linecap="round"/>
<polyline points="222.0,309.6 229.6,302.4" fill="none" stroke="#ffff00" stroke-width="2.2" stroke-linejoin="round" stroke-linecap="round"/>
<polyline points="229.6,302.4 231.5,298.4 234.2,292.9 237.1,287.8 239.9,283.7 242.9,280.0 245.9,277.3 249.1,275.7 252.4,275.1 254.6,274.8" fill="none" stroke="#008000" stroke-width="2.2" stroke-linejoin="round" stroke-linecap="round"/>
<polyline points="254.6,274.8 270.9,275.8" fill="none" stroke="#ffff00" stroke-width="2.2" stroke-linejoin="round" stroke-linecap="round"/>
<polyline points="270.9,275.8 284.7,281.5" fill="none" stroke="#ffa500" stroke-width="2.2" stroke-linejoin="round" stroke-linecap="round"/>
<polyline points="284.7,281.5 293.5,279.0" fill="none" stroke="#ffff00" stroke-width="2.2" stroke-linejoin="round" stroke-linecap="round"/>
<polyline points="293.5,279.0 302.3,279.0" fill="none" stroke="#008000" stroke-width="2.2" stroke-linejoin="round" stroke-linecap="round"/>
<polyline points="302.3,279.0 313.6,281.5" fill="none" stroke="#ffff00" stroke-width="2.2" stroke-linejoin="round" stroke-linecap="round"/>
<polyline points="313.6,281.5 315.4,281.8 318.0,282.2 321.0,282.6 324.3,283.1 327.6,283.7 330.8,284.5 333.7,285.3 336.8,286.6 340.0,288.2 343.1,289.9 345.9,291.6 348.2,293.1 350.0,294.1" fill="none" stroke="#ffa500" stroke-width="2.2" stroke-linejoin="round" stroke-linecap="round"/>
<polyline points="350.0,294.1 357.5,289.1" fill="none" stroke="#ffff00" stroke-width="2.2" stroke-linejoin="round" stroke-linecap="round"/>
<polyline points="357.5,289.1 359.3,286.9 362.0,283.7 365.0,280.1 368.2,276.3 371.3,272.9 373.8,270.2 376.6,267.6 378.7,265.9 381.0,264.6 383.8,263.2 386.4,262.2 389.3,261.3 392.5,260.3 395.6,259.5 398.7,258.8 401.4,258.2 404.4,257.7 407.4,257.5 410.1,257.3 412.3,257.3 413.9,257.2" fill="none" stroke="#008000" stroke-width="2.2" stroke-linejoin="round" stroke-linecap="round"/>
<polyline points="413.9,257.2 424.0,261.5" fill="none" stroke="#ffff00" stroke-width="2.2" stroke-linejoin="round" stroke-linecap="round"/>
<polyline points="424.0,261.5 425.8,262.9 428.3,265.0 431.3,267.2 434.3,269.0 436.7,270.0 439.3,270.8 442.0,271.5 444.5,272.3 446.8,273.3 450.0,275.4 452.8,277.8 455.6,279.8 458.6,280.8 461.5,281.5 464.4,282.3 466.7,283.2 468.9,284.3 471.9,286.6 474.0,288.5 476.4,290.9 479.0,293.7 481.8,296.5 484.4,299.2 487.0,301.6 489.8,304.1 492.5,306.4 495.2,308.5 497.9,310.5 500.8,312.4 503.2,313.9 505.8,315.3 508.4,316.7 511.0,317.9 513.5,318.9 515.8,319.7 519.2,320.2 522.4,320.2 525.2,320.0 527.1,319.9" fill="none" stroke="#ffa500" stroke-width="2.2" stroke-linejoin="round" stroke-linecap="round"/>
<text x="17" y="264" font-size="9.5" fill="#ffffff" text-anchor="start" textLength="157" lengthAdjust="spacingAndGlyphs" >MBFX Timing Indicator 3.9754 3.9754</text>
<g shape-rendering="crispEdges">
<rect x="13" y="343" width="798" height="1" fill="#4b0082" />
<rect x="13" y="352" width="798" height="1" fill="#4b0082" />
<rect x="13" y="370" width="798" height="1" fill="#4b0082" />
<rect x="13" y="379" width="798" height="1" fill="#4b0082" />
<rect x="21" y="351" width="1" height="12" fill="#008000" />
<rect x="20" y="356" width="3" height="7" fill="#008000" />
<rect x="29" y="356" width="1" height="11" fill="#008000" />
<rect x="28" y="357" width="3" height="5" fill="#008000" />
<rect x="37" y="354" width="1" height="19" fill="#ff0000" />
<rect x="36" y="356" width="3" height="16" fill="#ff0000" />
<rect x="45" y="364" width="1" height="10" fill="#ff0000" />
<rect x="44" y="366" width="3" height="4" fill="#ff0000" />
<rect x="53" y="353" width="1" height="20" fill="#008000" />
<rect x="52" y="356" width="3" height="13" fill="#008000" />
<rect x="61" y="354" width="1" height="16" fill="#ff0000" />
<rect x="60" y="356" width="3" height="13" fill="#ff0000" />
<rect x="69" y="362" width="1" height="7" fill="#008000" />
<rect x="68" y="363" width="3" height="4" fill="#008000" />
<rect x="77" y="355" width="1" height="11" fill="#008000" />
<rect x="76" y="360" width="3" height="1" fill="#008000" />
<rect x="85" y="359" width="1" height="9" fill="#008000" />
<rect x="84" y="361" width="3" height="4" fill="#008000" />
<rect x="93" y="354" width="1" height="8" fill="#008000" />
<rect x="92" y="356" width="3" height="5" fill="#008000" />
<rect x="101" y="342" width="1" height="18" fill="#008000" />
<rect x="100" y="342" width="3" height="17" fill="#008000" />
<rect x="109" y="337" width="1" height="16" fill="#008000" />
<rect x="108" y="337" width="3" height="15" fill="#008000" />
<rect x="117" y="340" width="1" height="12" fill="#ff0000" />
<rect x="116" y="343" width="3" height="6" fill="#ff0000" />
<rect x="125" y="346" width="1" height="10" fill="#008000" />
<rect x="124" y="348" width="3" height="7" fill="#008000" />
<rect x="133" y="354" width="1" height="10" fill="#ff0000" />
<rect x="132" y="355" width="3" height="8" fill="#ff0000" />
<rect x="141" y="354" width="1" height="13" fill="#008000" />
<rect x="140" y="359" width="3" height="8" fill="#008000" />
<rect x="149" y="357" width="1" height="8" fill="#008000" />
<rect x="148" y="358" width="3" height="4" fill="#008000" />
<rect x="157" y="355" width="1" height="13" fill="#ff0000" />
<rect x="156" y="358" width="3" height="4" fill="#ff0000" />
<rect x="165" y="344" width="1" height="20" fill="#008000" />
<rect x="164" y="355" width="3" height="9" fill="#008000" />
<rect x="173" y="351" width="1" height="11" fill="#008000" />
<rect x="172" y="353" width="3" height="7" fill="#008000" />
<rect x="181" y="353" width="1" height="11" fill="#ff0000" />
<rect x="180" y="354" width="3" height="9" fill="#ff0000" />
<rect x="189" y="359" width="1" height="11" fill="#ff0000" />
<rect x="188" y="360" width="3" height="9" fill="#ff0000" />
<rect x="197" y="364" width="1" height="15" fill="#ff0000" />
<rect x="196" y="366" width="3" height="11" fill="#ff0000" />
<rect x="205" y="371" width="1" height="11" fill="#ff0000" />
<rect x="204" y="372" width="3" height="8" fill="#ff0000" />
<rect x="213" y="364" width="1" height="13" fill="#008000" />
<rect x="212" y="367" width="3" height="9" fill="#008000" />
<rect x="221" y="360" width="1" height="13" fill="#ff0000" />
<rect x="220" y="362" width="3" height="5" fill="#ff0000" />
<rect x="229" y="349" width="1" height="18" fill="#008000" />
<rect x="228" y="350" width="3" height="15" fill="#008000" />
<rect x="237" y="342" width="1" height="13" fill="#008000" />
<rect x="236" y="343" width="3" height="11" fill="#008000" />
<rect x="245" y="341" width="1" height="13" fill="#008000" />
<rect x="244" y="344" width="3" height="7" fill="#008000" />
<rect x="253" y="348" width="1" height="15" fill="#ff0000" />
<rect x="252" y="349" width="3" height="13" fill="#ff0000" />
<rect x="261" y="359" width="1" height="7" fill="#ff0000" />
<rect x="260" y="361" width="3" height="4" fill="#ff0000" />
<rect x="269" y="350" width="1" height="19" fill="#008000" />
<rect x="268" y="358" width="3" height="9" fill="#008000" />
<rect x="277" y="357" width="1" height="11" fill="#ff0000" />
<rect x="276" y="358" width="3" height="9" fill="#ff0000" />
<rect x="285" y="358" width="1" height="13" fill="#008000" />
<rect x="284" y="359" width="3" height="5" fill="#008000" />
<rect x="293" y="344" width="1" height="20" fill="#008000" />
<rect x="292" y="351" width="3" height="12" fill="#008000" />
<rect x="301" y="350" width="1" height="15" fill="#ff0000" />
<rect x="300" y="356" width="3" height="8" fill="#ff0000" />
<rect x="309" y="357" width="1" height="9" fill="#008000" />
<rect x="308" y="361" width="3" height="3" fill="#008000" />
<rect x="317" y="357" width="1" height="11" fill="#008000" />
<rect x="316" y="362" width="3" height="3" fill="#008000" />
<rect x="325" y="357" width="1" height="9" fill="#008000" />
<rect x="324" y="361" width="3" height="3" fill="#008000" />
<rect x="333" y="358" width="1" height="9" fill="#ff0000" />
<rect x="332" y="359" width="3" height="6" fill="#ff0000" />
<rect x="341" y="358" width="1" height="14" fill="#ff0000" />
<rect x="340" y="361" width="3" height="8" fill="#ff0000" />
<rect x="349" y="361" width="1" height="8" fill="#008000" />
<rect x="348" y="363" width="3" height="6" fill="#008000" />
<rect x="357" y="350" width="1" height="19" fill="#008000" />
<rect x="356" y="351" width="3" height="18" fill="#008000" />
<rect x="365" y="347" width="1" height="11" fill="#008000" />
<rect x="364" y="351" width="3" height="3" fill="#008000" />
<rect x="373" y="340" width="1" height="19" fill="#008000" />
<rect x="372" y="342" width="3" height="16" fill="#008000" />
<rect x="381" y="341" width="1" height="14" fill="#ff0000" />
<rect x="380" y="347" width="3" height="4" fill="#ff0000" />
<rect x="389" y="350" width="1" height="10" fill="#ff0000" />
<rect x="388" y="352" width="3" height="7" fill="#ff0000" />
<rect x="397" y="342" width="1" height="22" fill="#008000" />
<rect x="396" y="343" width="3" height="21" fill="#008000" />
<rect x="405" y="345" width="1" height="10" fill="#008000" />
<rect x="404" y="346" width="3" height="6" fill="#008000" />
<rect x="413" y="347" width="1" height="11" fill="#ff0000" />
<rect x="412" y="348" width="3" height="8" fill="#ff0000" />
<rect x="421" y="349" width="1" height="17" fill="#ff0000" />
<rect x="420" y="357" width="3" height="8" fill="#ff0000" />
<rect x="429" y="361" width="1" height="8" fill="#008000" />
<rect x="428" y="363" width="3" height="4" fill="#008000" />
<rect x="437" y="350" width="1" height="18" fill="#008000" />
<rect x="436" y="357" width="3" height="8" fill="#008000" />
<rect x="445" y="355" width="1" height="10" fill="#ff0000" />
<rect x="444" y="357" width="3" height="6" fill="#ff0000" />
<rect x="453" y="357" width="1" height="13" fill="#ff0000" />
<rect x="452" y="359" width="3" height="3" fill="#ff0000" />
<rect x="461" y="353" width="1" height="15" fill="#008000" />
<rect x="460" y="354" width="3" height="9" fill="#008000" />
<rect x="469" y="354" width="1" height="15" fill="#ff0000" />
<rect x="468" y="355" width="3" height="13" fill="#ff0000" />
<rect x="477" y="362" width="1" height="10" fill="#ff0000" />
<rect x="476" y="364" width="3" height="6" fill="#ff0000" />
<rect x="485" y="358" width="1" height="21" fill="#ff0000" />
<rect x="484" y="364" width="3" height="9" fill="#ff0000" />
<rect x="493" y="364" width="1" height="11" fill="#008000" />
<rect x="492" y="366" width="3" height="6" fill="#008000" />
<rect x="501" y="361" width="1" height="16" fill="#ff0000" />
<rect x="500" y="362" width="3" height="14" fill="#ff0000" />
<rect x="509" y="366" width="1" height="9" fill="#ff0000" />
<rect x="508" y="370" width="3" height="3" fill="#ff0000" />
<rect x="517" y="364" width="1" height="8" fill="#ff0000" />
<rect x="516" y="368" width="3" height="2" fill="#ff0000" />
<rect x="525" y="362" width="1" height="9" fill="#008000" />
<rect x="524" y="364" width="3" height="6" fill="#008000" />
<rect x="13" y="363" width="798" height="1" fill="#ff0000" />
</g>
<text x="20" y="337.5" font-size="9.5" fill="#ffffff" text-anchor="start" textLength="238" lengthAdjust="spacingAndGlyphs" >BELKHAYATE TIMING  -0.7822 -3.3014 -2.9545 -0.7822</text>
<rect x="13" y="397" width="1" height="3" fill="#ffffff" shape-rendering="crispEdges"/>
<text x="12" y="409" font-size="9.5" fill="#ffffff" text-anchor="start" textLength="51" lengthAdjust="spacingAndGlyphs" >18 Dec 2018</text>
<rect x="77" y="397" width="1" height="3" fill="#ffffff" shape-rendering="crispEdges"/>
<text x="76" y="409" font-size="9.5" fill="#ffffff" text-anchor="start" textLength="54" lengthAdjust="spacingAndGlyphs" >18 Dec 09:25</text>
<rect x="141" y="397" width="1" height="3" fill="#ffffff" shape-rendering="crispEdges"/>
<text x="140" y="409" font-size="9.5" fill="#ffffff" text-anchor="start" textLength="54" lengthAdjust="spacingAndGlyphs" >18 Dec 10:05</text>
<rect x="205" y="397" width="1" height="3" fill="#ffffff" shape-rendering="crispEdges"/>
<text x="204" y="409" font-size="9.5" fill="#ffffff" text-anchor="start" textLength="54" lengthAdjust="spacingAndGlyphs" >18 Dec 10:45</text>
<rect x="269" y="397" width="1" height="3" fill="#ffffff" shape-rendering="crispEdges"/>
<text x="268" y="409" font-size="9.5" fill="#ffffff" text-anchor="start" textLength="54" lengthAdjust="spacingAndGlyphs" >18 Dec 11:25</text>
<rect x="333" y="397" width="1" height="3" fill="#ffffff" shape-rendering="crispEdges"/>
<text x="332" y="409" font-size="9.5" fill="#ffffff" text-anchor="start" textLength="54" lengthAdjust="spacingAndGlyphs" >18 Dec 12:05</text>
<rect x="397" y="397" width="1" height="3" fill="#ffffff" shape-rendering="crispEdges"/>
<text x="396" y="409" font-size="9.5" fill="#ffffff" text-anchor="start" textLength="54" lengthAdjust="spacingAndGlyphs" >18 Dec 12:45</text>
<rect x="461" y="397" width="1" height="3" fill="#ffffff" shape-rendering="crispEdges"/>
<text x="460" y="409" font-size="9.5" fill="#ffffff" text-anchor="start" textLength="54" lengthAdjust="spacingAndGlyphs" >18 Dec 13:25</text>
<rect x="525" y="397" width="1" height="3" fill="#ffffff" shape-rendering="crispEdges"/>
<text x="524" y="409" font-size="9.5" fill="#ffffff" text-anchor="start" textLength="54" lengthAdjust="spacingAndGlyphs" >18 Dec 14:05</text>
<text x="20" y="35" font-size="9.5" fill="#ffffff" text-anchor="start" textLength="61" lengthAdjust="spacingAndGlyphs" >#125977660 tp</text>
<path d="M16 40 l3.5 -5 l3.5 5z" fill="#fff"/>
<text x="28" y="42" font-size="9.5" fill="#ffffff" text-anchor="start" textLength="226" lengthAdjust="spacingAndGlyphs" >.USTECHCash,M5  6497.50 6499.88 6497.12 6499.88</text>
<text x="17" y="114" font-size="9.5" fill="#ffffff" text-anchor="start" textLength="127" lengthAdjust="spacingAndGlyphs" >BELKHAYATE BARYCENTRE</text>
<text x="20" y="142" font-size="9.5" fill="#ffffff" text-anchor="start" textLength="60" lengthAdjust="spacingAndGlyphs" >#125977660 sl</text>
<g shape-rendering="crispEdges">
<rect x="16" y="45" width="195" height="60" fill="#000" />
<rect x="16" y="47" width="46" height="23" fill="url(#gSell)" />
<rect x="163" y="47" width="46" height="23" fill="url(#gSell)" />
<rect x="16" y="69" width="96" height="34" fill="url(#gPrice)" />
<rect x="114" y="69" width="95" height="34" fill="url(#gPrice)" />
<rect x="19" y="67" width="38" height="1" fill="#7070ff" />
<rect x="167" y="67" width="38" height="1" fill="#7070ff" />
<rect x="64" y="47" width="97" height="20" fill="#707070" />
<rect x="65" y="48" width="95" height="18" fill="#fff" />
<rect x="65" y="48" width="18" height="18" fill="url(#gSpin)" />
<rect x="141" y="48" width="19" height="18" fill="url(#gSpin)" />
<rect x="83" y="48" width="1" height="18" fill="#a0a0a0" />
<rect x="140" y="48" width="1" height="18" fill="#a0a0a0" />
</g>
<path d="M71 55 l6 0 l-3 3.5z" fill="#000"/><path d="M148 58.5 l6 0 l-3 -3.5z" fill="#000"/>
<text x="38.5" y="62.2" font-size="12.5" fill="#ffffff" text-anchor="middle" textLength="24" lengthAdjust="spacingAndGlyphs" >SELL</text>
<text x="186" y="62.2" font-size="12.5" fill="#ffffff" text-anchor="middle" textLength="22" lengthAdjust="spacingAndGlyphs" >BUY</text>
<text x="137" y="61" font-size="11.5" fill="#000" text-anchor="end" textLength="26" lengthAdjust="spacingAndGlyphs" >10.00</text>
<text x="32.5" y="96.8" font-size="12" fill="#ffffff" text-anchor="start" textLength="27" lengthAdjust="spacingAndGlyphs" font-weight="bold" >6499</text>
<text x="64.5" y="96.6" font-size="29.5" fill="#ffffff" text-anchor="start" textLength="33" lengthAdjust="spacingAndGlyphs" >88</text>
<text x="130.5" y="96.8" font-size="12" fill="#ffffff" text-anchor="start" textLength="27" lengthAdjust="spacingAndGlyphs" font-weight="bold" >6500</text>
<text x="162" y="96.6" font-size="29.5" fill="#ffffff" text-anchor="start" textLength="33" lengthAdjust="spacingAndGlyphs" >88</text>
<text x="805" y="45.5" font-size="12" fill="#ffffff" text-anchor="end" textLength="100" lengthAdjust="spacingAndGlyphs" >iPanel_INDICATORS</text>
<text x="635.5" y="57" font-size="12" fill="#ffffff" text-anchor="middle" textLength="12.011625" lengthAdjust="spacingAndGlyphs" >4h</text>
<text x="660" y="57" font-size="12" fill="#ffffff" text-anchor="middle" textLength="12.011625" lengthAdjust="spacingAndGlyphs" >1h</text>
<text x="681" y="57" font-size="12" fill="#ffffff" text-anchor="middle" textLength="21.007687500000003" lengthAdjust="spacingAndGlyphs" >30m</text>
<text x="706" y="57" font-size="12" fill="#ffffff" text-anchor="middle" textLength="21.007687500000003" lengthAdjust="spacingAndGlyphs" >15m</text>
<text x="734" y="57" font-size="12" fill="#ffffff" text-anchor="middle" textLength="15.001875" lengthAdjust="spacingAndGlyphs" >5m</text>
<text x="759" y="57" font-size="12" fill="#ffffff" text-anchor="middle" textLength="15.001875" lengthAdjust="spacingAndGlyphs" >1m</text>
<text x="805" y="67.8" font-size="12" fill="#ffffff" text-anchor="end" textLength="35.515125" lengthAdjust="spacingAndGlyphs" >STOCH</text>
<path transform="translate(636,63.5) rotate(0) scale(0.9)" d="M0 -5.5 L4.6 -0.6 L3.4 0.6 L0.9 -2 L0.9 5.5 L-0.9 5.5 L-0.9 -2 L-3.4 0.6 L-4.6 -0.6 Z" fill="#00ff00" stroke="#00ff00" stroke-width="0.6" stroke-linejoin="round"/>
<path transform="translate(661,63.5) rotate(180) scale(0.9)" d="M0 -5.5 L4.6 -0.6 L3.4 0.6 L0.9 -2 L0.9 5.5 L-0.9 5.5 L-0.9 -2 L-3.4 0.6 L-4.6 -0.6 Z" fill="#ff0000" stroke="#ff0000" stroke-width="0.6" stroke-linejoin="round"/>
<path transform="translate(686,63.5) rotate(180) scale(0.9)" d="M0 -5.5 L4.6 -0.6 L3.4 0.6 L0.9 -2 L0.9 5.5 L-0.9 5.5 L-0.9 -2 L-3.4 0.6 L-4.6 -0.6 Z" fill="#ff0000" stroke="#ff0000" stroke-width="0.6" stroke-linejoin="round"/>
<path transform="translate(711,63.5) rotate(180) scale(0.9)" d="M0 -5.5 L4.6 -0.6 L3.4 0.6 L0.9 -2 L0.9 5.5 L-0.9 5.5 L-0.9 -2 L-3.4 0.6 L-4.6 -0.6 Z" fill="#ff0000" stroke="#ff0000" stroke-width="0.6" stroke-linejoin="round"/>
<path transform="translate(736,63.5) rotate(180) scale(0.9)" d="M0 -5.5 L4.6 -0.6 L3.4 0.6 L0.9 -2 L0.9 5.5 L-0.9 5.5 L-0.9 -2 L-3.4 0.6 L-4.6 -0.6 Z" fill="#ff0000" stroke="#ff0000" stroke-width="0.6" stroke-linejoin="round"/>
<path transform="translate(761,63.5) rotate(0) scale(0.9)" d="M0 -5.5 L4.6 -0.6 L3.4 0.6 L0.9 -2 L0.9 5.5 L-0.9 5.5 L-0.9 -2 L-3.4 0.6 L-4.6 -0.6 Z" fill="#00ff00" stroke="#00ff00" stroke-width="0.6" stroke-linejoin="round"/>
<text x="805" y="80.8" font-size="12" fill="#ffffff" text-anchor="end" textLength="17.00371875" lengthAdjust="spacingAndGlyphs" >RSI</text>
<path transform="translate(636,76.5) rotate(180) scale(0.9)" d="M0 -5.5 L4.6 -0.6 L3.4 0.6 L0.9 -2 L0.9 5.5 L-0.9 5.5 L-0.9 -2 L-3.4 0.6 L-4.6 -0.6 Z" fill="#ff0000" stroke="#ff0000" stroke-width="0.6" stroke-linejoin="round"/>
<path transform="translate(661,76.5) rotate(0) scale(0.9)" d="M0 -5.5 L4.6 -0.6 L3.4 0.6 L0.9 -2 L0.9 5.5 L-0.9 5.5 L-0.9 -2 L-3.4 0.6 L-4.6 -0.6 Z" fill="#00ff00" stroke="#00ff00" stroke-width="0.6" stroke-linejoin="round"/>
<path transform="translate(686,76.5) rotate(0) scale(0.9)" d="M0 -5.5 L4.6 -0.6 L3.4 0.6 L0.9 -2 L0.9 5.5 L-0.9 5.5 L-0.9 -2 L-3.4 0.6 L-4.6 -0.6 Z" fill="#00ff00" stroke="#00ff00" stroke-width="0.6" stroke-linejoin="round"/>
<path transform="translate(711,76.5) rotate(0) scale(0.9)" d="M0 -5.5 L4.6 -0.6 L3.4 0.6 L0.9 -2 L0.9 5.5 L-0.9 5.5 L-0.9 -2 L-3.4 0.6 L-4.6 -0.6 Z" fill="#00ff00" stroke="#00ff00" stroke-width="0.6" stroke-linejoin="round"/>
<path transform="translate(736,76.5) rotate(180) scale(0.9)" d="M0 -5.5 L4.6 -0.6 L3.4 0.6 L0.9 -2 L0.9 5.5 L-0.9 5.5 L-0.9 -2 L-3.4 0.6 L-4.6 -0.6 Z" fill="#ff0000" stroke="#ff0000" stroke-width="0.6" stroke-linejoin="round"/>
<path transform="translate(761,76.5) rotate(180) scale(0.9)" d="M0 -5.5 L4.6 -0.6 L3.4 0.6 L0.9 -2 L0.9 5.5 L-0.9 5.5 L-0.9 -2 L-3.4 0.6 L-4.6 -0.6 Z" fill="#ff0000" stroke="#ff0000" stroke-width="0.6" stroke-linejoin="round"/>
<text x="805" y="93.8" font-size="12" fill="#ffffff" text-anchor="end" textLength="17.566312500000002" lengthAdjust="spacingAndGlyphs" >CCI</text>
<path transform="translate(636,89.5) rotate(0) scale(0.9)" d="M0 -5.5 L4.6 -0.6 L3.4 0.6 L0.9 -2 L0.9 5.5 L-0.9 5.5 L-0.9 -2 L-3.4 0.6 L-4.6 -0.6 Z" fill="#00ff00" stroke="#00ff00" stroke-width="0.6" stroke-linejoin="round"/>
<path transform="translate(661,89.5) rotate(135) scale(0.9)" d="M0 -5.5 L4.6 -0.6 L3.4 0.6 L0.9 -2 L0.9 5.5 L-0.9 5.5 L-0.9 -2 L-3.4 0.6 L-4.6 -0.6 Z" fill="#ff0000" stroke="#ff0000" stroke-width="0.6" stroke-linejoin="round"/>
<path transform="translate(686,89.5) rotate(180) scale(0.9)" d="M0 -5.5 L4.6 -0.6 L3.4 0.6 L0.9 -2 L0.9 5.5 L-0.9 5.5 L-0.9 -2 L-3.4 0.6 L-4.6 -0.6 Z" fill="#ff0000" stroke="#ff0000" stroke-width="0.6" stroke-linejoin="round"/>
<path transform="translate(711,89.5) rotate(45) scale(0.9)" d="M0 -5.5 L4.6 -0.6 L3.4 0.6 L0.9 -2 L0.9 5.5 L-0.9 5.5 L-0.9 -2 L-3.4 0.6 L-4.6 -0.6 Z" fill="#00ff00" stroke="#00ff00" stroke-width="0.6" stroke-linejoin="round"/>
<path transform="translate(736,89.5) rotate(45) scale(0.9)" d="M0 -5.5 L4.6 -0.6 L3.4 0.6 L0.9 -2 L0.9 5.5 L-0.9 5.5 L-0.9 -2 L-3.4 0.6 L-4.6 -0.6 Z" fill="#00ff00" stroke="#00ff00" stroke-width="0.6" stroke-linejoin="round"/>
<path transform="translate(761,89.5) rotate(0) scale(0.9)" d="M0 -5.5 L4.6 -0.6 L3.4 0.6 L0.9 -2 L0.9 5.5 L-0.9 5.5 L-0.9 -2 L-3.4 0.6 L-4.6 -0.6 Z" fill="#00ff00" stroke="#00ff00" stroke-width="0.6" stroke-linejoin="round"/>
<text x="805" y="106.8" font-size="12" fill="#ffffff" text-anchor="end" textLength="30.032625000000003" lengthAdjust="spacingAndGlyphs" >MACD</text>
<path transform="translate(636,102.5) rotate(180) scale(0.9)" d="M0 -5.5 L4.6 -0.6 L3.4 0.6 L0.9 -2 L0.9 5.5 L-0.9 5.5 L-0.9 -2 L-3.4 0.6 L-4.6 -0.6 Z" fill="#ff0000" stroke="#ff0000" stroke-width="0.6" stroke-linejoin="round"/>
<path transform="translate(661,102.5) rotate(0) scale(0.9)" d="M0 -5.5 L4.6 -0.6 L3.4 0.6 L0.9 -2 L0.9 5.5 L-0.9 5.5 L-0.9 -2 L-3.4 0.6 L-4.6 -0.6 Z" fill="#00ff00" stroke="#00ff00" stroke-width="0.6" stroke-linejoin="round"/>
<path transform="translate(686,102.5) rotate(0) scale(0.9)" d="M0 -5.5 L4.6 -0.6 L3.4 0.6 L0.9 -2 L0.9 5.5 L-0.9 5.5 L-0.9 -2 L-3.4 0.6 L-4.6 -0.6 Z" fill="#00ff00" stroke="#00ff00" stroke-width="0.6" stroke-linejoin="round"/>
<path transform="translate(711,102.5) rotate(180) scale(0.9)" d="M0 -5.5 L4.6 -0.6 L3.4 0.6 L0.9 -2 L0.9 5.5 L-0.9 5.5 L-0.9 -2 L-3.4 0.6 L-4.6 -0.6 Z" fill="#ff0000" stroke="#ff0000" stroke-width="0.6" stroke-linejoin="round"/>
<path transform="translate(736,102.5) rotate(180) scale(0.9)" d="M0 -5.5 L4.6 -0.6 L3.4 0.6 L0.9 -2 L0.9 5.5 L-0.9 5.5 L-0.9 -2 L-3.4 0.6 L-4.6 -0.6 Z" fill="#ff0000" stroke="#ff0000" stroke-width="0.6" stroke-linejoin="round"/>
<path transform="translate(761,102.5) rotate(0) scale(0.9)" d="M0 -5.5 L4.6 -0.6 L3.4 0.6 L0.9 -2 L0.9 5.5 L-0.9 5.5 L-0.9 -2 L-3.4 0.6 L-4.6 -0.6 Z" fill="#00ff00" stroke="#00ff00" stroke-width="0.6" stroke-linejoin="round"/>
<text x="805" y="119.8" font-size="12" fill="#ffffff" text-anchor="end" textLength="27.775875" lengthAdjust="spacingAndGlyphs" >EMA1</text>
<path transform="translate(636,115.5) rotate(180) scale(0.9)" d="M0 -5.5 L4.6 -0.6 L3.4 0.6 L0.9 -2 L0.9 5.5 L-0.9 5.5 L-0.9 -2 L-3.4 0.6 L-4.6 -0.6 Z" fill="#ff0000" stroke="#ff0000" stroke-width="0.6" stroke-linejoin="round"/>
<path transform="translate(661,115.5) rotate(0) scale(0.9)" d="M0 -5.5 L4.6 -0.6 L3.4 0.6 L0.9 -2 L0.9 5.5 L-0.9 5.5 L-0.9 -2 L-3.4 0.6 L-4.6 -0.6 Z" fill="#00ff00" stroke="#00ff00" stroke-width="0.6" stroke-linejoin="round"/>
<path transform="translate(686,115.5) rotate(0) scale(0.9)" d="M0 -5.5 L4.6 -0.6 L3.4 0.6 L0.9 -2 L0.9 5.5 L-0.9 5.5 L-0.9 -2 L-3.4 0.6 L-4.6 -0.6 Z" fill="#00ff00" stroke="#00ff00" stroke-width="0.6" stroke-linejoin="round"/>
<path transform="translate(711,115.5) rotate(180) scale(0.9)" d="M0 -5.5 L4.6 -0.6 L3.4 0.6 L0.9 -2 L0.9 5.5 L-0.9 5.5 L-0.9 -2 L-3.4 0.6 L-4.6 -0.6 Z" fill="#ff0000" stroke="#ff0000" stroke-width="0.6" stroke-linejoin="round"/>
<path transform="translate(736,115.5) rotate(180) scale(0.9)" d="M0 -5.5 L4.6 -0.6 L3.4 0.6 L0.9 -2 L0.9 5.5 L-0.9 5.5 L-0.9 -2 L-3.4 0.6 L-4.6 -0.6 Z" fill="#ff0000" stroke="#ff0000" stroke-width="0.6" stroke-linejoin="round"/>
<path transform="translate(761,115.5) rotate(180) scale(0.9)" d="M0 -5.5 L4.6 -0.6 L3.4 0.6 L0.9 -2 L0.9 5.5 L-0.9 5.5 L-0.9 -2 L-3.4 0.6 L-4.6 -0.6 Z" fill="#ff0000" stroke="#ff0000" stroke-width="0.6" stroke-linejoin="round"/>
<text x="805" y="132.8" font-size="12" fill="#ffffff" text-anchor="end" textLength="27.775875" lengthAdjust="spacingAndGlyphs" >EMA2</text>
<path transform="translate(636,128.5) rotate(180) scale(0.9)" d="M0 -5.5 L4.6 -0.6 L3.4 0.6 L0.9 -2 L0.9 5.5 L-0.9 5.5 L-0.9 -2 L-3.4 0.6 L-4.6 -0.6 Z" fill="#ff0000" stroke="#ff0000" stroke-width="0.6" stroke-linejoin="round"/>
<path transform="translate(661,128.5) rotate(180) scale(0.9)" d="M0 -5.5 L4.6 -0.6 L3.4 0.6 L0.9 -2 L0.9 5.5 L-0.9 5.5 L-0.9 -2 L-3.4 0.6 L-4.6 -0.6 Z" fill="#ff0000" stroke="#ff0000" stroke-width="0.6" stroke-linejoin="round"/>
<path transform="translate(686,128.5) rotate(180) scale(0.9)" d="M0 -5.5 L4.6 -0.6 L3.4 0.6 L0.9 -2 L0.9 5.5 L-0.9 5.5 L-0.9 -2 L-3.4 0.6 L-4.6 -0.6 Z" fill="#ff0000" stroke="#ff0000" stroke-width="0.6" stroke-linejoin="round"/>
<path transform="translate(711,128.5) rotate(0) scale(0.9)" d="M0 -5.5 L4.6 -0.6 L3.4 0.6 L0.9 -2 L0.9 5.5 L-0.9 5.5 L-0.9 -2 L-3.4 0.6 L-4.6 -0.6 Z" fill="#00ff00" stroke="#00ff00" stroke-width="0.6" stroke-linejoin="round"/>
<path transform="translate(736,128.5) rotate(0) scale(0.9)" d="M0 -5.5 L4.6 -0.6 L3.4 0.6 L0.9 -2 L0.9 5.5 L-0.9 5.5 L-0.9 -2 L-3.4 0.6 L-4.6 -0.6 Z" fill="#00ff00" stroke="#00ff00" stroke-width="0.6" stroke-linejoin="round"/>
<path transform="translate(761,128.5) rotate(180) scale(0.9)" d="M0 -5.5 L4.6 -0.6 L3.4 0.6 L0.9 -2 L0.9 5.5 L-0.9 5.5 L-0.9 -2 L-3.4 0.6 L-4.6 -0.6 Z" fill="#ff0000" stroke="#ff0000" stroke-width="0.6" stroke-linejoin="round"/>
</g>
<g id="h4">
<clipPath id="ch4"><rect x="877" y="30" width="798" height="257"/></clipPath>
<clipPath id="ch4r"><rect x="877" y="291" width="798" height="105"/></clipPath>
<g clip-path="url(#ch4)">
<g shape-rendering="crispEdges">
<rect x="877" y="284" width="1" height="3" fill="#12a8dc" />
<rect x="881" y="285" width="1" height="2" fill="#12a8dc" />
<rect x="885" y="286" width="1" height="1" fill="#12a8dc" />
<rect x="889" y="282" width="1" height="5" fill="#12a8dc" />
<rect x="893" y="268" width="1" height="19" fill="#12a8dc" />
<rect x="897" y="259" width="1" height="28" fill="#12a8dc" />
<rect x="901" y="279" width="1" height="8" fill="#12a8dc" />
<rect x="905" y="284" width="1" height="3" fill="#12a8dc" />
<rect x="909" y="285" width="1" height="2" fill="#12a8dc" />
<rect x="913" y="280" width="1" height="7" fill="#12a8dc" />
<rect x="917" y="253" width="1" height="34" fill="#12a8dc" />
<rect x="921" y="256" width="1" height="31" fill="#12a8dc" />
<rect x="925" y="279" width="1" height="8" fill="#12a8dc" />
<rect x="929" y="284" width="1" height="3" fill="#12a8dc" />
<rect x="933" y="285" width="1" height="2" fill="#12a8dc" />
<rect x="937" y="280" width="1" height="7" fill="#12a8dc" />
<rect x="941" y="266" width="1" height="21" fill="#12a8dc" />
<rect x="945" y="272" width="1" height="15" fill="#12a8dc" />
<rect x="949" y="282" width="1" height="5" fill="#12a8dc" />
<rect x="953" y="285" width="1" height="2" fill="#12a8dc" />
<rect x="957" y="286" width="1" height="1" fill="#12a8dc" />
<rect x="961" y="282" width="1" height="5" fill="#12a8dc" />
<rect x="965" y="284" width="1" height="3" fill="#12a8dc" />
<rect x="969" y="285" width="1" height="2" fill="#12a8dc" />
<rect x="973" y="286" width="1" height="1" fill="#12a8dc" />
<rect x="977" y="286" width="1" height="1" fill="#12a8dc" />
<rect x="981" y="283" width="1" height="4" fill="#12a8dc" />
<rect x="985" y="272" width="1" height="15" fill="#12a8dc" />
<rect x="989" y="279" width="1" height="8" fill="#12a8dc" />
<rect x="993" y="286" width="1" height="1" fill="#12a8dc" />
<rect x="997" y="285" width="1" height="2" fill="#12a8dc" />
<rect x="1001" y="285" width="1" height="2" fill="#12a8dc" />
<rect x="1005" y="281" width="1" height="6" fill="#12a8dc" />
<rect x="1009" y="272" width="1" height="15" fill="#12a8dc" />
<rect x="1013" y="272" width="1" height="15" fill="#12a8dc" />
<rect x="1017" y="281" width="1" height="6" fill="#12a8dc" />
<rect x="1021" y="284" width="1" height="3" fill="#12a8dc" />
<rect x="1025" y="284" width="1" height="3" fill="#12a8dc" />
<rect x="1029" y="282" width="1" height="5" fill="#12a8dc" />
<rect x="1033" y="270" width="1" height="17" fill="#12a8dc" />
<rect x="1037" y="270" width="1" height="17" fill="#12a8dc" />
<rect x="1041" y="283" width="1" height="4" fill="#12a8dc" />
<rect x="1045" y="285" width="1" height="2" fill="#12a8dc" />
<rect x="1049" y="286" width="1" height="1" fill="#12a8dc" />
<rect x="1053" y="282" width="1" height="5" fill="#12a8dc" />
<rect x="1057" y="273" width="1" height="14" fill="#12a8dc" />
<rect x="1061" y="266" width="1" height="21" fill="#12a8dc" />
<rect x="1065" y="282" width="1" height="5" fill="#12a8dc" />
<rect x="1069" y="285" width="1" height="2" fill="#12a8dc" />
<rect x="1073" y="285" width="1" height="2" fill="#12a8dc" />
<rect x="1077" y="282" width="1" height="5" fill="#12a8dc" />
<rect x="1081" y="270" width="1" height="17" fill="#12a8dc" />
<rect x="1085" y="272" width="1" height="15" fill="#12a8dc" />
<rect x="1089" y="282" width="1" height="5" fill="#12a8dc" />
<rect x="1093" y="285" width="1" height="2" fill="#12a8dc" />
<rect x="1097" y="286" width="1" height="1" fill="#12a8dc" />
<rect x="1101" y="284" width="1" height="3" fill="#12a8dc" />
<rect x="1105" y="275" width="1" height="12" fill="#12a8dc" />
<rect x="1109" y="274" width="1" height="13" fill="#12a8dc" />
<rect x="1113" y="283" width="1" height="4" fill="#12a8dc" />
<rect x="1117" y="286" width="1" height="1" fill="#12a8dc" />
<rect x="1121" y="284" width="1" height="3" fill="#12a8dc" />
<rect x="1125" y="285" width="1" height="2" fill="#12a8dc" />
<rect x="1129" y="283" width="1" height="4" fill="#12a8dc" />
<rect x="1133" y="270" width="1" height="17" fill="#12a8dc" />
<rect x="1137" y="269" width="1" height="18" fill="#12a8dc" />
<rect x="1141" y="281" width="1" height="6" fill="#12a8dc" />
<rect x="1145" y="285" width="1" height="2" fill="#12a8dc" />
<rect x="1149" y="284" width="1" height="3" fill="#12a8dc" />
<rect x="1153" y="282" width="1" height="5" fill="#12a8dc" />
<rect x="1157" y="272" width="1" height="15" fill="#12a8dc" />
<rect x="1161" y="255" width="1" height="32" fill="#12a8dc" />
<rect x="1165" y="276" width="1" height="11" fill="#12a8dc" />
<rect x="1169" y="285" width="1" height="2" fill="#12a8dc" />
<rect x="1173" y="286" width="1" height="1" fill="#12a8dc" />
<rect x="1177" y="284" width="1" height="3" fill="#12a8dc" />
<rect x="1181" y="286" width="1" height="1" fill="#12a8dc" />
<rect x="1185" y="282" width="1" height="5" fill="#12a8dc" />
<rect x="1189" y="283" width="1" height="4" fill="#12a8dc" />
<rect x="1193" y="279" width="1" height="8" fill="#12a8dc" />
<rect x="1197" y="265" width="1" height="22" fill="#12a8dc" />
<rect x="1201" y="261" width="1" height="26" fill="#12a8dc" />
<rect x="1205" y="278" width="1" height="9" fill="#12a8dc" />
<rect x="1209" y="284" width="1" height="3" fill="#12a8dc" />
<rect x="1213" y="285" width="1" height="2" fill="#12a8dc" />
<rect x="1217" y="281" width="1" height="6" fill="#12a8dc" />
<rect x="1221" y="268" width="1" height="19" fill="#12a8dc" />
<rect x="1225" y="256" width="1" height="31" fill="#12a8dc" />
<rect x="1229" y="279" width="1" height="8" fill="#12a8dc" />
<rect x="1233" y="286" width="1" height="1" fill="#12a8dc" />
<rect x="1237" y="283" width="1" height="4" fill="#12a8dc" />
<rect x="1241" y="285" width="1" height="2" fill="#12a8dc" />
<rect x="1245" y="282" width="1" height="5" fill="#12a8dc" />
<rect x="1249" y="268" width="1" height="19" fill="#12a8dc" />
<rect x="1253" y="261" width="1" height="26" fill="#12a8dc" />
<rect x="1257" y="281" width="1" height="6" fill="#12a8dc" />
<rect x="1261" y="284" width="1" height="3" fill="#12a8dc" />
<rect x="1265" y="285" width="1" height="2" fill="#12a8dc" />
<rect x="1269" y="281" width="1" height="6" fill="#12a8dc" />
<rect x="1273" y="270" width="1" height="17" fill="#12a8dc" />
<rect x="1277" y="266" width="1" height="21" fill="#12a8dc" />
<rect x="1281" y="280" width="1" height="7" fill="#12a8dc" />
<rect x="1285" y="283" width="1" height="4" fill="#12a8dc" />
<rect x="1289" y="284" width="1" height="3" fill="#12a8dc" />
<rect x="1293" y="281" width="1" height="6" fill="#12a8dc" />
<rect x="1297" y="273" width="1" height="14" fill="#12a8dc" />
<rect x="1301" y="270" width="1" height="17" fill="#12a8dc" />
<rect x="1305" y="280" width="1" height="7" fill="#12a8dc" />
<rect x="1309" y="284" width="1" height="3" fill="#12a8dc" />
<rect x="1313" y="285" width="1" height="2" fill="#12a8dc" />
<rect x="1317" y="281" width="1" height="6" fill="#12a8dc" />
<rect x="1321" y="273" width="1" height="14" fill="#12a8dc" />
<rect x="1325" y="269" width="1" height="18" fill="#12a8dc" />
<rect x="1329" y="282" width="1" height="5" fill="#12a8dc" />
<rect x="1333" y="285" width="1" height="2" fill="#12a8dc" />
<rect x="1337" y="286" width="1" height="1" fill="#12a8dc" />
<rect x="1341" y="283" width="1" height="4" fill="#12a8dc" />
<rect x="1345" y="277" width="1" height="10" fill="#12a8dc" />
<rect x="1349" y="275" width="1" height="12" fill="#12a8dc" />
<rect x="1353" y="284" width="1" height="3" fill="#12a8dc" />
<rect x="1361" y="286" width="1" height="1" fill="#12a8dc" />
<rect x="1365" y="286" width="1" height="1" fill="#12a8dc" />
<rect x="1369" y="284" width="1" height="3" fill="#12a8dc" />
<rect x="1373" y="274" width="1" height="13" fill="#12a8dc" />
<rect x="1377" y="270" width="1" height="17" fill="#12a8dc" />
<rect x="1381" y="251" width="1" height="36" fill="#12a8dc" />
<rect x="1385" y="284" width="1" height="3" fill="#12a8dc" />
<rect x="1389" y="285" width="1" height="2" fill="#12a8dc" />
<rect x="1393" y="282" width="1" height="5" fill="#12a8dc" />
<rect x="1397" y="285" width="1" height="2" fill="#12a8dc" />
</g>
<g shape-rendering="crispEdges">
<line x1="877" y1="205.5" x2="1675" y2="205.5" stroke="#ff0000" stroke-width="1" />
<line x1="877" y1="219.5" x2="1675" y2="219.5" stroke="#12a8dc" stroke-width="1" stroke-dasharray="9 4 2 4" />
<line x1="877" y1="241.5" x2="1675" y2="241.5" stroke="#ff0000" stroke-width="1" stroke-dasharray="9 4 2 4" />
<line x1="877" y1="247.5" x2="1675" y2="247.5" stroke="#12a8dc" stroke-width="1" stroke-dasharray="9 4 2 4" />
<line x1="877" y1="252.5" x2="1675" y2="252.5" stroke="#ff0000" stroke-width="1" stroke-dasharray="9 4 2 4" />
</g>
<line x1="877" y1="166.5" x2="1675.8" y2="95" stroke="#ff0000" stroke-width="1" shape-rendering="crispEdges" />
<line x1="877" y1="258.4" x2="1675.8" y2="210" stroke="#ff0000" stroke-width="1" shape-rendering="crispEdges" />
<polyline points="918.0,190.3 919.1,188.8 920.6,187.0 922.3,184.7 924.2,182.3 926.2,179.6 928.4,176.8 930.6,173.9 932.8,171.1 935.0,168.4 937.0,165.9 938.8,163.7 940.6,161.5 942.4,159.4 944.3,157.2 946.1,155.0 948.0,152.9 949.8,150.7 951.7,148.6 953.6,146.5 955.5,144.4 957.4,142.3 959.3,140.3 961.2,138.2 963.0,136.3 964.8,134.3 966.7,132.4 968.6,130.4 970.5,128.5 972.5,126.5 974.6,124.5 976.9,122.5 979.2,120.5 980.9,119.1 982.7,117.6 984.5,116.2 986.3,114.7 988.3,113.2 990.2,111.7 992.2,110.2 994.2,108.7 996.2,107.2 998.3,105.7 1000.3,104.2 1002.4,102.8 1004.4,101.3 1006.4,99.9 1008.4,98.5 1010.4,97.1 1012.4,95.7 1014.4,94.4 1016.4,93.0 1018.4,91.6 1020.5,90.3 1022.5,88.9 1024.6,87.6 1026.6,86.3 1028.6,85.0 1030.6,83.7 1032.6,82.5 1034.5,81.2 1036.4,80.1 1038.2,78.9 1039.9,77.8 1041.6,76.8 1043.9,75.4 1046.0,74.0 1048.0,72.8 1049.8,71.6 1051.6,70.5 1053.4,69.4 1055.1,68.4 1057.0,67.4 1058.8,66.4 1060.8,65.4 1063.0,64.4 1064.7,63.7 1066.4,62.9 1068.2,62.2 1070.0,61.5 1071.8,60.8 1073.7,60.1 1075.6,59.5 1077.5,58.8 1079.4,58.2 1081.4,57.6 1083.3,57.0 1085.3,56.4 1087.2,55.9 1089.1,55.4 1091.0,54.9 1092.9,54.5 1094.8,54.1 1096.7,53.7 1098.5,53.3 1100.4,53.0 1102.3,52.7 1104.2,52.4 1106.1,52.2 1108.0,51.9 1109.9,51.7 1111.8,51.5 1113.8,51.3 1115.7,51.1 1117.6,50.9 1119.6,50.7 1121.5,50.5 1123.3,50.4 1125.2,50.2 1127.1,50.1 1129.0,50.0 1130.9,49.9 1132.9,49.8 1134.8,49.7 1136.7,49.6 1138.6,49.5 1140.6,49.5 1142.5,49.5 1144.4,49.4 1146.3,49.4 1148.1,49.5 1150.0,49.5 1151.9,49.6 1153.8,49.6 1155.7,49.7 1157.6,49.8 1159.4,49.9 1161.2,50.1 1163.0,50.2 1164.8,50.4 1166.7,50.6 1168.6,50.8 1170.5,51.0 1172.4,51.3 1174.5,51.6 1176.5,51.9 1178.7,52.2 1180.5,52.5 1182.3,52.8 1184.2,53.1 1186.2,53.4 1188.2,53.8 1190.3,54.2 1192.3,54.6 1194.4,55.0 1196.5,55.4 1198.6,55.8 1200.7,56.2 1202.8,56.6 1204.8,57.1 1206.8,57.5 1208.8,58.0 1210.7,58.4 1212.5,58.8 1214.3,59.3 1216.0,59.7 1218.3,60.3 1220.5,60.9 1222.6,61.6 1224.6,62.2 1226.5,62.8 1228.4,63.5 1230.2,64.1 1231.9,64.8 1233.7,65.5 1235.5,66.2 1237.3,66.9 1239.1,67.7 1241.0,68.5 1242.9,69.3 1244.8,70.2 1246.6,71.1 1248.4,72.0 1250.3,72.9 1252.1,73.8 1253.9,74.8 1255.8,75.8 1257.7,76.8 1259.7,77.8 1261.7,78.8 1263.8,79.9 1266.0,80.9 1267.7,81.7 1269.6,82.6 1271.4,83.4 1273.4,84.3 1275.4,85.2 1277.4,86.2 1279.4,87.1 1281.5,88.0 1283.5,89.0 1285.6,89.9 1287.6,90.8 1289.6,91.7 1291.6,92.6 1293.6,93.5 1295.4,94.3 1297.3,95.1 1299.0,95.9 1301.2,96.9 1303.3,97.7 1305.3,98.6 1307.3,99.4 1309.2,100.1 1311.1,100.9 1312.9,101.6 1314.7,102.4 1316.6,103.2 1318.4,104.0 1320.2,104.9 1322.1,105.8 1324.0,106.9 1325.9,108.0 1327.8,109.2 1329.8,110.5 1331.7,111.8 1333.6,113.1 1335.5,114.5 1337.5,115.9 1339.4,117.3 1341.3,118.8 1343.2,120.2 1345.2,121.7 1347.1,123.1 1349.0,124.5 1350.9,125.9 1352.9,127.3 1354.8,128.8 1356.7,130.3 1358.7,131.7 1360.6,133.2 1362.6,134.7 1364.5,136.1 1366.4,137.6 1368.3,139.1 1370.2,140.5 1372.1,141.9 1374.0,143.3 1376.1,144.8 1378.3,146.4 1380.6,148.1 1382.8,149.8 1385.1,151.4 1387.4,153.0 1389.5,154.6 1391.5,156.0 1393.4,157.4 1395.0,158.6 1396.5,159.6 1397.6,160.4" fill="none" stroke="#ff0000" stroke-width="1" stroke-linejoin="round" shape-rendering="crispEdges" />
<polyline points="918.0,213.5 919.1,212.0 920.6,210.2 922.3,207.9 924.2,205.5 926.2,202.8 928.4,200.0 930.6,197.1 932.8,194.3 935.0,191.6 937.0,189.1 938.8,186.9 940.6,184.7 942.4,182.6 944.3,180.4 946.1,178.2 948.0,176.1 949.8,173.9 951.7,171.8 953.6,169.7 955.5,167.6 957.4,165.5 959.3,163.5 961.2,161.4 963.0,159.5 964.8,157.5 966.7,155.6 968.6,153.6 970.5,151.7 972.5,149.7 974.6,147.7 976.9,145.7 979.2,143.7 980.9,142.3 982.7,140.8 984.5,139.4 986.3,137.9 988.3,136.4 990.2,134.9 992.2,133.4 994.2,131.9 996.2,130.4 998.3,128.9 1000.3,127.4 1002.4,126.0 1004.4,124.5 1006.4,123.1 1008.4,121.7 1010.4,120.3 1012.4,118.9 1014.4,117.6 1016.4,116.2 1018.4,114.8 1020.5,113.5 1022.5,112.1 1024.6,110.8 1026.6,109.5 1028.6,108.2 1030.6,106.9 1032.6,105.7 1034.5,104.4 1036.4,103.3 1038.2,102.1 1039.9,101.0 1041.6,100.0 1043.9,98.6 1046.0,97.2 1048.0,96.0 1049.8,94.8 1051.6,93.7 1053.4,92.6 1055.1,91.6 1057.0,90.6 1058.8,89.6 1060.8,88.6 1063.0,87.6 1064.7,86.9 1066.4,86.1 1068.2,85.4 1070.0,84.7 1071.8,84.0 1073.7,83.3 1075.6,82.7 1077.5,82.0 1079.4,81.4 1081.4,80.8 1083.3,80.2 1085.3,79.6 1087.2,79.1 1089.1,78.6 1091.0,78.1 1092.9,77.7 1094.8,77.3 1096.7,76.9 1098.5,76.5 1100.4,76.2 1102.3,75.9 1104.2,75.6 1106.1,75.4 1108.0,75.1 1109.9,74.9 1111.8,74.7 1113.8,74.5 1115.7,74.3 1117.6,74.1 1119.6,73.9 1121.5,73.7 1123.3,73.6 1125.2,73.4 1127.1,73.3 1129.0,73.2 1130.9,73.1 1132.9,73.0 1134.8,72.9 1136.7,72.8 1138.6,72.7 1140.6,72.7 1142.5,72.7 1144.4,72.6 1146.3,72.6 1148.1,72.7 1150.0,72.7 1151.9,72.8 1153.8,72.8 1155.7,72.9 1157.6,73.0 1159.4,73.1 1161.2,73.3 1163.0,73.4 1164.8,73.6 1166.7,73.8 1168.6,74.0 1170.5,74.2 1172.4,74.5 1174.5,74.8 1176.5,75.1 1178.7,75.4 1180.5,75.7 1182.3,76.0 1184.2,76.3 1186.2,76.6 1188.2,77.0 1190.3,77.4 1192.3,77.8 1194.4,78.2 1196.5,78.6 1198.6,79.0 1200.7,79.4 1202.8,79.8 1204.8,80.3 1206.8,80.7 1208.8,81.2 1210.7,81.6 1212.5,82.0 1214.3,82.5 1216.0,82.9 1218.3,83.5 1220.5,84.1 1222.6,84.8 1224.6,85.4 1226.5,86.0 1228.4,86.7 1230.2,87.3 1231.9,88.0 1233.7,88.7 1235.5,89.4 1237.3,90.1 1239.1,90.9 1241.0,91.7 1242.9,92.5 1244.8,93.4 1246.6,94.3 1248.4,95.2 1250.3,96.1 1252.1,97.0 1253.9,98.0 1255.8,99.0 1257.7,100.0 1259.7,101.0 1261.7,102.0 1263.8,103.1 1266.0,104.1 1267.7,104.9 1269.6,105.8 1271.4,106.6 1273.4,107.5 1275.4,108.4 1277.4,109.4 1279.4,110.3 1281.5,111.2 1283.5,112.2 1285.6,113.1 1287.6,114.0 1289.6,114.9 1291.6,115.8 1293.6,116.7 1295.4,117.5 1297.3,118.3 1299.0,119.1 1301.2,120.1 1303.3,120.9 1305.3,121.8 1307.3,122.6 1309.2,123.3 1311.1,124.1 1312.9,124.8 1314.7,125.6 1316.6,126.4 1318.4,127.2 1320.2,128.1 1322.1,129.0 1324.0,130.1 1325.9,131.2 1327.8,132.4 1329.8,133.7 1331.7,135.0 1333.6,136.3 1335.5,137.7 1337.5,139.1 1339.4,140.5 1341.3,142.0 1343.2,143.4 1345.2,144.9 1347.1,146.3 1349.0,147.7 1350.9,149.1 1352.9,150.5 1354.8,152.0 1356.7,153.5 1358.7,154.9 1360.6,156.4 1362.6,157.9 1364.5,159.3 1366.4,160.8 1368.3,162.3 1370.2,163.7 1372.1,165.1 1374.0,166.5 1376.1,168.0 1378.3,169.6 1380.6,171.3 1382.8,173.0 1385.1,174.6 1387.4,176.2 1389.5,177.8 1391.5,179.2 1393.4,180.6 1395.0,181.8 1396.5,182.8 1397.6,183.6" fill="none" stroke="#ff0000" stroke-width="1" stroke-linejoin="round" shape-rendering="crispEdges" />
<polyline points="918.0,236.7 919.1,235.2 920.6,233.4 922.3,231.1 924.2,228.7 926.2,226.0 928.4,223.2 930.6,220.3 932.8,217.5 935.0,214.8 937.0,212.3 938.8,210.1 940.6,207.9 942.4,205.8 944.3,203.6 946.1,201.4 948.0,199.3 949.8,197.1 951.7,195.0 953.6,192.9 955.5,190.8 957.4,188.7 959.3,186.7 961.2,184.6 963.0,182.7 964.8,180.7 966.7,178.8 968.6,176.8 970.5,174.9 972.5,172.9 974.6,170.9 976.9,168.9 979.2,166.9 980.9,165.5 982.7,164.0 984.5,162.6 986.3,161.1 988.3,159.6 990.2,158.1 992.2,156.6 994.2,155.1 996.2,153.6 998.3,152.1 1000.3,150.6 1002.4,149.2 1004.4,147.7 1006.4,146.3 1008.4,144.9 1010.4,143.5 1012.4,142.1 1014.4,140.8 1016.4,139.4 1018.4,138.0 1020.5,136.7 1022.5,135.3 1024.6,134.0 1026.6,132.7 1028.6,131.4 1030.6,130.1 1032.6,128.9 1034.5,127.6 1036.4,126.5 1038.2,125.3 1039.9,124.2 1041.6,123.2 1043.9,121.8 1046.0,120.4 1048.0,119.2 1049.8,118.0 1051.6,116.9 1053.4,115.8 1055.1,114.8 1057.0,113.8 1058.8,112.8 1060.8,111.8 1063.0,110.8 1064.7,110.1 1066.4,109.3 1068.2,108.6 1070.0,107.9 1071.8,107.2 1073.7,106.5 1075.6,105.9 1077.5,105.2 1079.4,104.6 1081.4,104.0 1083.3,103.4 1085.3,102.8 1087.2,102.3 1089.1,101.8 1091.0,101.3 1092.9,100.9 1094.8,100.5 1096.7,100.1 1098.5,99.7 1100.4,99.4 1102.3,99.1 1104.2,98.8 1106.1,98.6 1108.0,98.3 1109.9,98.1 1111.8,97.9 1113.8,97.7 1115.7,97.5 1117.6,97.3 1119.6,97.1 1121.5,96.9 1123.3,96.8 1125.2,96.6 1127.1,96.5 1129.0,96.4 1130.9,96.3 1132.9,96.2 1134.8,96.1 1136.7,96.0 1138.6,95.9 1140.6,95.9 1142.5,95.9 1144.4,95.8 1146.3,95.8 1148.1,95.9 1150.0,95.9 1151.9,96.0 1153.8,96.0 1155.7,96.1 1157.6,96.2 1159.4,96.3 1161.2,96.5 1163.0,96.6 1164.8,96.8 1166.7,97.0 1168.6,97.2 1170.5,97.4 1172.4,97.7 1174.5,98.0 1176.5,98.3 1178.7,98.6 1180.5,98.9 1182.3,99.2 1184.2,99.5 1186.2,99.8 1188.2,100.2 1190.3,100.6 1192.3,101.0 1194.4,101.4 1196.5,101.8 1198.6,102.2 1200.7,102.6 1202.8,103.0 1204.8,103.5 1206.8,103.9 1208.8,104.4 1210.7,104.8 1212.5,105.2 1214.3,105.7 1216.0,106.1 1218.3,106.7 1220.5,107.3 1222.6,108.0 1224.6,108.6 1226.5,109.2 1228.4,109.9 1230.2,110.5 1231.9,111.2 1233.7,111.9 1235.5,112.6 1237.3,113.3 1239.1,114.1 1241.0,114.9 1242.9,115.7 1244.8,116.6 1246.6,117.5 1248.4,118.4 1250.3,119.3 1252.1,120.2 1253.9,121.2 1255.8,122.2 1257.7,123.2 1259.7,124.2 1261.7,125.2 1263.8,126.3 1266.0,127.3 1267.7,128.1 1269.6,129.0 1271.4,129.8 1273.4,130.7 1275.4,131.6 1277.4,132.6 1279.4,133.5 1281.5,134.4 1283.5,135.4 1285.6,136.3 1287.6,137.2 1289.6,138.1 1291.6,139.0 1293.6,139.9 1295.4,140.7 1297.3,141.5 1299.0,142.3 1301.2,143.3 1303.3,144.1 1305.3,145.0 1307.3,145.8 1309.2,146.5 1311.1,147.3 1312.9,148.0 1314.7,148.8 1316.6,149.6 1318.4,150.4 1320.2,151.3 1322.1,152.2 1324.0,153.3 1325.9,154.4 1327.8,155.6 1329.8,156.9 1331.7,158.2 1333.6,159.5 1335.5,160.9 1337.5,162.3 1339.4,163.7 1341.3,165.2 1343.2,166.6 1345.2,168.1 1347.1,169.5 1349.0,170.9 1350.9,172.3 1352.9,173.7 1354.8,175.2 1356.7,176.7 1358.7,178.1 1360.6,179.6 1362.6,181.1 1364.5,182.5 1366.4,184.0 1368.3,185.5 1370.2,186.9 1372.1,188.3 1374.0,189.7 1376.1,191.2 1378.3,192.8 1380.6,194.5 1382.8,196.2 1385.1,197.8 1387.4,199.4 1389.5,201.0 1391.5,202.4 1393.4,203.8 1395.0,205.0 1396.5,206.0 1397.6,206.8" fill="none" stroke="#707070" stroke-width="1" stroke-linejoin="round" shape-rendering="crispEdges" />
<polyline points="918.0,312.1 919.1,310.6 920.6,308.8 922.3,306.5 924.2,304.1 926.2,301.4 928.4,298.6 930.6,295.7 932.8,292.9 935.0,290.2 937.0,287.7 938.8,285.5 940.6,283.3 942.4,281.2 944.3,279.0 946.1,276.8 948.0,274.7 949.8,272.5 951.7,270.4 953.6,268.3 955.5,266.2 957.4,264.1 959.3,262.1 961.2,260.0 963.0,258.1 964.8,256.1 966.7,254.2 968.6,252.2 970.5,250.3 972.5,248.3 974.6,246.3 976.9,244.3 979.2,242.3 980.9,240.9 982.7,239.4 984.5,238.0 986.3,236.5 988.3,235.0 990.2,233.5 992.2,232.0 994.2,230.5 996.2,229.0 998.3,227.5 1000.3,226.0 1002.4,224.6 1004.4,223.1 1006.4,221.7 1008.4,220.3 1010.4,218.9 1012.4,217.5 1014.4,216.2 1016.4,214.8 1018.4,213.4 1020.5,212.1 1022.5,210.7 1024.6,209.4 1026.6,208.1 1028.6,206.8 1030.6,205.5 1032.6,204.3 1034.5,203.0 1036.4,201.9 1038.2,200.7 1039.9,199.6 1041.6,198.6 1043.9,197.2 1046.0,195.8 1048.0,194.6 1049.8,193.4 1051.6,192.3 1053.4,191.2 1055.1,190.2 1057.0,189.2 1058.8,188.2 1060.8,187.2 1063.0,186.2 1064.7,185.5 1066.4,184.7 1068.2,184.0 1070.0,183.3 1071.8,182.6 1073.7,181.9 1075.6,181.3 1077.5,180.6 1079.4,180.0 1081.4,179.4 1083.3,178.8 1085.3,178.2 1087.2,177.7 1089.1,177.2 1091.0,176.7 1092.9,176.3 1094.8,175.9 1096.7,175.5 1098.5,175.1 1100.4,174.8 1102.3,174.5 1104.2,174.2 1106.1,174.0 1108.0,173.7 1109.9,173.5 1111.8,173.3 1113.8,173.1 1115.7,172.9 1117.6,172.7 1119.6,172.5 1121.5,172.3 1123.3,172.2 1125.2,172.0 1127.1,171.9 1129.0,171.8 1130.9,171.7 1132.9,171.6 1134.8,171.5 1136.7,171.4 1138.6,171.3 1140.6,171.3 1142.5,171.3 1144.4,171.2 1146.3,171.2 1148.1,171.3 1150.0,171.3 1151.9,171.4 1153.8,171.4 1155.7,171.5 1157.6,171.6 1159.4,171.7 1161.2,171.9 1163.0,172.0 1164.8,172.2 1166.7,172.4 1168.6,172.6 1170.5,172.8 1172.4,173.1 1174.5,173.4 1176.5,173.7 1178.7,174.0 1180.5,174.3 1182.3,174.6 1184.2,174.9 1186.2,175.2 1188.2,175.6 1190.3,176.0 1192.3,176.4 1194.4,176.8 1196.5,177.2 1198.6,177.6 1200.7,178.0 1202.8,178.4 1204.8,178.9 1206.8,179.3 1208.8,179.8 1210.7,180.2 1212.5,180.6 1214.3,181.1 1216.0,181.5 1218.3,182.1 1220.5,182.7 1222.6,183.4 1224.6,184.0 1226.5,184.6 1228.4,185.3 1230.2,185.9 1231.9,186.6 1233.7,187.3 1235.5,188.0 1237.3,188.7 1239.1,189.5 1241.0,190.3 1242.9,191.1 1244.8,192.0 1246.6,192.9 1248.4,193.8 1250.3,194.7 1252.1,195.6 1253.9,196.6 1255.8,197.6 1257.7,198.6 1259.7,199.6 1261.7,200.6 1263.8,201.7 1266.0,202.7 1267.7,203.5 1269.6,204.4 1271.4,205.2 1273.4,206.1 1275.4,207.0 1277.4,208.0 1279.4,208.9 1281.5,209.8 1283.5,210.8 1285.6,211.7 1287.6,212.6 1289.6,213.5 1291.6,214.4 1293.6,215.3 1295.4,216.1 1297.3,216.9 1299.0,217.7 1301.2,218.7 1303.3,219.5 1305.3,220.4 1307.3,221.2 1309.2,221.9 1311.1,222.7 1312.9,223.4 1314.7,224.2 1316.6,225.0 1318.4,225.8 1320.2,226.7 1322.1,227.6 1324.0,228.7 1325.9,229.8 1327.8,231.0 1329.8,232.3 1331.7,233.6 1333.6,234.9 1335.5,236.3 1337.5,237.7 1339.4,239.1 1341.3,240.6 1343.2,242.0 1345.2,243.5 1347.1,244.9 1349.0,246.3 1350.9,247.7 1352.9,249.1 1354.8,250.6 1356.7,252.1 1358.7,253.5 1360.6,255.0 1362.6,256.5 1364.5,257.9 1366.4,259.4 1368.3,260.9 1370.2,262.3 1372.1,263.7 1374.0,265.1 1376.1,266.6 1378.3,268.2 1380.6,269.9 1382.8,271.6 1385.1,273.2 1387.4,274.8 1389.5,276.4 1391.5,277.8 1393.4,279.2 1395.0,280.4 1396.5,281.4 1397.6,282.2" fill="none" stroke="#707070" stroke-width="1" stroke-linejoin="round" shape-rendering="crispEdges" />
<polyline points="918.0,335.3 919.1,333.8 920.6,332.0 922.3,329.7 924.2,327.3 926.2,324.6 928.4,321.8 930.6,318.9 932.8,316.1 935.0,313.4 937.0,310.9 938.8,308.7 940.6,306.5 942.4,304.4 944.3,302.2 946.1,300.0 948.0,297.9 949.8,295.7 951.7,293.6 953.6,291.5 955.5,289.4 957.4,287.3 959.3,285.3 961.2,283.2 963.0,281.3 964.8,279.3 966.7,277.4 968.6,275.4 970.5,273.5 972.5,271.5 974.6,269.5 976.9,267.5 979.2,265.5 980.9,264.1 982.7,262.6 984.5,261.2 986.3,259.7 988.3,258.2 990.2,256.7 992.2,255.2 994.2,253.7 996.2,252.2 998.3,250.7 1000.3,249.2 1002.4,247.8 1004.4,246.3 1006.4,244.9 1008.4,243.5 1010.4,242.1 1012.4,240.7 1014.4,239.4 1016.4,238.0 1018.4,236.6 1020.5,235.3 1022.5,233.9 1024.6,232.6 1026.6,231.3 1028.6,230.0 1030.6,228.7 1032.6,227.5 1034.5,226.2 1036.4,225.1 1038.2,223.9 1039.9,222.8 1041.6,221.8 1043.9,220.4 1046.0,219.0 1048.0,217.8 1049.8,216.6 1051.6,215.5 1053.4,214.4 1055.1,213.4 1057.0,212.4 1058.8,211.4 1060.8,210.4 1063.0,209.4 1064.7,208.7 1066.4,207.9 1068.2,207.2 1070.0,206.5 1071.8,205.8 1073.7,205.1 1075.6,204.5 1077.5,203.8 1079.4,203.2 1081.4,202.6 1083.3,202.0 1085.3,201.4 1087.2,200.9 1089.1,200.4 1091.0,199.9 1092.9,199.5 1094.8,199.1 1096.7,198.7 1098.5,198.3 1100.4,198.0 1102.3,197.7 1104.2,197.4 1106.1,197.2 1108.0,196.9 1109.9,196.7 1111.8,196.5 1113.8,196.3 1115.7,196.1 1117.6,195.9 1119.6,195.7 1121.5,195.5 1123.3,195.4 1125.2,195.2 1127.1,195.1 1129.0,195.0 1130.9,194.9 1132.9,194.8 1134.8,194.7 1136.7,194.6 1138.6,194.5 1140.6,194.5 1142.5,194.5 1144.4,194.4 1146.3,194.4 1148.1,194.5 1150.0,194.5 1151.9,194.6 1153.8,194.6 1155.7,194.7 1157.6,194.8 1159.4,194.9 1161.2,195.1 1163.0,195.2 1164.8,195.4 1166.7,195.6 1168.6,195.8 1170.5,196.0 1172.4,196.3 1174.5,196.6 1176.5,196.9 1178.7,197.2 1180.5,197.5 1182.3,197.8 1184.2,198.1 1186.2,198.4 1188.2,198.8 1190.3,199.2 1192.3,199.6 1194.4,200.0 1196.5,200.4 1198.6,200.8 1200.7,201.2 1202.8,201.6 1204.8,202.1 1206.8,202.5 1208.8,203.0 1210.7,203.4 1212.5,203.8 1214.3,204.3 1216.0,204.7 1218.3,205.3 1220.5,205.9 1222.6,206.6 1224.6,207.2 1226.5,207.8 1228.4,208.5 1230.2,209.1 1231.9,209.8 1233.7,210.5 1235.5,211.2 1237.3,211.9 1239.1,212.7 1241.0,213.5 1242.9,214.3 1244.8,215.2 1246.6,216.1 1248.4,217.0 1250.3,217.9 1252.1,218.8 1253.9,219.8 1255.8,220.8 1257.7,221.8 1259.7,222.8 1261.7,223.8 1263.8,224.9 1266.0,225.9 1267.7,226.7 1269.6,227.6 1271.4,228.4 1273.4,229.3 1275.4,230.2 1277.4,231.2 1279.4,232.1 1281.5,233.0 1283.5,234.0 1285.6,234.9 1287.6,235.8 1289.6,236.7 1291.6,237.6 1293.6,238.5 1295.4,239.3 1297.3,240.1 1299.0,240.9 1301.2,241.9 1303.3,242.7 1305.3,243.6 1307.3,244.4 1309.2,245.1 1311.1,245.9 1312.9,246.6 1314.7,247.4 1316.6,248.2 1318.4,249.0 1320.2,249.9 1322.1,250.8 1324.0,251.9 1325.9,253.0 1327.8,254.2 1329.8,255.5 1331.7,256.8 1333.6,258.1 1335.5,259.5 1337.5,260.9 1339.4,262.3 1341.3,263.8 1343.2,265.2 1345.2,266.7 1347.1,268.1 1349.0,269.5 1350.9,270.9 1352.9,272.3 1354.8,273.8 1356.7,275.3 1358.7,276.7 1360.6,278.2 1362.6,279.7 1364.5,281.1 1366.4,282.6 1368.3,284.1 1370.2,285.5 1372.1,286.9 1374.0,288.3 1376.1,289.8 1378.3,291.4 1380.6,293.1 1382.8,294.8 1385.1,296.4 1387.4,298.0 1389.5,299.6 1391.5,301.0 1393.4,302.4 1395.0,303.6 1396.5,304.6 1397.6,305.4" fill="none" stroke="#22c022" stroke-width="1" stroke-linejoin="round" shape-rendering="crispEdges" />
<polyline points="918.0,358.5 919.1,357.0 920.6,355.2 922.3,352.9 924.2,350.5 926.2,347.8 928.4,345.0 930.6,342.1 932.8,339.3 935.0,336.6 937.0,334.1 938.8,331.9 940.6,329.7 942.4,327.6 944.3,325.4 946.1,323.2 948.0,321.1 949.8,318.9 951.7,316.8 953.6,314.7 955.5,312.6 957.4,310.5 959.3,308.5 961.2,306.4 963.0,304.5 964.8,302.5 966.7,300.6 968.6,298.6 970.5,296.7 972.5,294.7 974.6,292.7 976.9,290.7 979.2,288.7 980.9,287.3 982.7,285.8 984.5,284.4 986.3,282.9 988.3,281.4 990.2,279.9 992.2,278.4 994.2,276.9 996.2,275.4 998.3,273.9 1000.3,272.4 1002.4,271.0 1004.4,269.5 1006.4,268.1 1008.4,266.7 1010.4,265.3 1012.4,263.9 1014.4,262.6 1016.4,261.2 1018.4,259.8 1020.5,258.5 1022.5,257.1 1024.6,255.8 1026.6,254.5 1028.6,253.2 1030.6,251.9 1032.6,250.7 1034.5,249.4 1036.4,248.3 1038.2,247.1 1039.9,246.0 1041.6,245.0 1043.9,243.6 1046.0,242.2 1048.0,241.0 1049.8,239.8 1051.6,238.7 1053.4,237.6 1055.1,236.6 1057.0,235.6 1058.8,234.6 1060.8,233.6 1063.0,232.6 1064.7,231.9 1066.4,231.1 1068.2,230.4 1070.0,229.7 1071.8,229.0 1073.7,228.3 1075.6,227.7 1077.5,227.0 1079.4,226.4 1081.4,225.8 1083.3,225.2 1085.3,224.6 1087.2,224.1 1089.1,223.6 1091.0,223.1 1092.9,222.7 1094.8,222.3 1096.7,221.9 1098.5,221.5 1100.4,221.2 1102.3,220.9 1104.2,220.6 1106.1,220.4 1108.0,220.1 1109.9,219.9 1111.8,219.7 1113.8,219.5 1115.7,219.3 1117.6,219.1 1119.6,218.9 1121.5,218.7 1123.3,218.6 1125.2,218.4 1127.1,218.3 1129.0,218.2 1130.9,218.1 1132.9,218.0 1134.8,217.9 1136.7,217.8 1138.6,217.7 1140.6,217.7 1142.5,217.7 1144.4,217.6 1146.3,217.6 1148.1,217.7 1150.0,217.7 1151.9,217.8 1153.8,217.8 1155.7,217.9 1157.6,218.0 1159.4,218.1 1161.2,218.3 1163.0,218.4 1164.8,218.6 1166.7,218.8 1168.6,219.0 1170.5,219.2 1172.4,219.5 1174.5,219.8 1176.5,220.1 1178.7,220.4 1180.5,220.7 1182.3,221.0 1184.2,221.3 1186.2,221.6 1188.2,222.0 1190.3,222.4 1192.3,222.8 1194.4,223.2 1196.5,223.6 1198.6,224.0 1200.7,224.4 1202.8,224.8 1204.8,225.3 1206.8,225.7 1208.8,226.2 1210.7,226.6 1212.5,227.0 1214.3,227.5 1216.0,227.9 1218.3,228.5 1220.5,229.1 1222.6,229.8 1224.6,230.4 1226.5,231.0 1228.4,231.7 1230.2,232.3 1231.9,233.0 1233.7,233.7 1235.5,234.4 1237.3,235.1 1239.1,235.9 1241.0,236.7 1242.9,237.5 1244.8,238.4 1246.6,239.3 1248.4,240.2 1250.3,241.1 1252.1,242.0 1253.9,243.0 1255.8,244.0 1257.7,245.0 1259.7,246.0 1261.7,247.0 1263.8,248.1 1266.0,249.1 1267.7,249.9 1269.6,250.8 1271.4,251.6 1273.4,252.5 1275.4,253.4 1277.4,254.4 1279.4,255.3 1281.5,256.2 1283.5,257.2 1285.6,258.1 1287.6,259.0 1289.6,259.9 1291.6,260.8 1293.6,261.7 1295.4,262.5 1297.3,263.3 1299.0,264.1 1301.2,265.1 1303.3,265.9 1305.3,266.8 1307.3,267.6 1309.2,268.3 1311.1,269.1 1312.9,269.8 1314.7,270.6 1316.6,271.4 1318.4,272.2 1320.2,273.1 1322.1,274.0 1324.0,275.1 1325.9,276.2 1327.8,277.4 1329.8,278.7 1331.7,280.0 1333.6,281.3 1335.5,282.7 1337.5,284.1 1339.4,285.5 1341.3,287.0 1343.2,288.4 1345.2,289.9 1347.1,291.3 1349.0,292.7 1350.9,294.1 1352.9,295.5 1354.8,297.0 1356.7,298.5 1358.7,299.9 1360.6,301.4 1362.6,302.9 1364.5,304.3 1366.4,305.8 1368.3,307.3 1370.2,308.7 1372.1,310.1 1374.0,311.5 1376.1,313.0 1378.3,314.6 1380.6,316.3 1382.8,318.0 1385.1,319.6 1387.4,321.2 1389.5,322.8 1391.5,324.2 1393.4,325.6 1395.0,326.8 1396.5,327.8 1397.6,328.6" fill="none" stroke="#22c022" stroke-width="1" stroke-linejoin="round" shape-rendering="crispEdges" />
<polyline points="918.0,274.4 919.1,272.9 920.6,271.1 922.3,268.8 924.2,266.4 926.2,263.7 928.4,260.9 930.6,258.0 932.8,255.2 935.0,252.5 937.0,250.0 938.8,247.8 940.6,245.6 942.4,243.5 944.3,241.3 946.1,239.1 948.0,237.0 949.8,234.8 951.7,232.7 953.6,230.6 955.5,228.5 957.4,226.4 959.3,224.4 961.2,222.3 963.0,220.4 964.8,218.4 966.7,216.5 968.6,214.5 970.5,212.6 972.5,210.6 974.6,208.6 976.9,206.6 979.2,204.6 980.9,203.2 982.7,201.7 984.5,200.3 986.3,198.8 988.3,197.3 990.2,195.8 992.2,194.3 994.2,192.8 996.2,191.3 998.3,189.8 1000.3,188.3 1002.4,186.9 1004.4,185.4 1006.4,184.0 1008.4,182.6 1010.4,181.2 1012.4,179.8 1014.4,178.5 1016.4,177.1 1018.4,175.7 1020.5,174.4 1022.5,173.0 1024.6,171.7 1026.6,170.4 1028.6,169.1 1030.6,167.8 1032.6,166.6 1034.5,165.3 1036.4,164.2 1038.2,163.0 1039.9,161.9 1041.6,160.9 1043.9,159.5 1046.0,158.1 1048.0,156.9 1049.8,155.7 1051.6,154.6 1053.4,153.5 1055.1,152.5 1057.0,151.5 1058.8,150.5 1060.8,149.5 1063.0,148.5 1064.7,147.8 1066.4,147.0 1068.2,146.3 1070.0,145.6 1071.8,144.9 1073.7,144.2 1075.6,143.6 1077.5,142.9 1079.4,142.3 1081.4,141.7 1083.3,141.1 1085.3,140.5 1087.2,140.0 1089.1,139.5 1091.0,139.0 1092.9,138.6 1094.8,138.2 1096.7,137.8 1098.5,137.4 1100.4,137.1 1102.3,136.8 1104.2,136.5 1106.1,136.3 1108.0,136.0 1109.9,135.8 1111.8,135.6 1113.8,135.4 1115.7,135.2 1117.6,135.0 1119.6,134.8 1121.5,134.6 1123.3,134.5 1125.2,134.3 1127.1,134.2 1129.0,134.1 1130.9,134.0 1132.9,133.9 1134.8,133.8 1136.7,133.7 1138.6,133.6 1140.6,133.6 1142.5,133.6 1144.4,133.5 1146.3,133.5 1148.1,133.6 1150.0,133.6 1151.9,133.7 1153.8,133.7 1155.7,133.8 1157.6,133.9 1159.4,134.0 1161.2,134.2 1163.0,134.3 1164.8,134.5 1166.7,134.7 1168.6,134.9 1170.5,135.1 1172.4,135.4 1174.5,135.7 1176.5,136.0 1178.7,136.3 1180.5,136.6 1182.3,136.9 1184.2,137.2 1186.2,137.5 1188.2,137.9 1190.3,138.3 1192.3,138.7 1194.4,139.1 1196.5,139.5 1198.6,139.9 1200.7,140.3 1202.8,140.7 1204.8,141.2 1206.8,141.6 1208.8,142.1 1210.7,142.5 1212.5,142.9 1214.3,143.4 1216.0,143.8 1218.3,144.4 1220.5,145.0 1222.6,145.7 1224.6,146.3 1226.5,146.9 1228.4,147.6 1230.2,148.2 1231.9,148.9 1233.7,149.6 1235.5,150.3 1237.3,151.0 1239.1,151.8 1241.0,152.6 1242.9,153.4 1244.8,154.3 1246.6,155.2 1248.4,156.1 1250.3,157.0 1252.1,157.9 1253.9,158.9 1255.8,159.9 1257.7,160.9 1259.7,161.9 1261.7,162.9 1263.8,164.0 1266.0,165.0 1267.7,165.8 1269.6,166.7 1271.4,167.5 1273.4,168.4 1275.4,169.3 1277.4,170.3 1279.4,171.2 1281.5,172.1 1283.5,173.1 1285.6,174.0 1287.6,174.9 1289.6,175.8 1291.6,176.7 1293.6,177.6 1295.4,178.4 1297.3,179.2 1299.0,180.0 1301.2,181.0 1303.3,181.8 1305.3,182.7 1307.3,183.5 1309.2,184.2 1311.1,185.0 1312.9,185.7 1314.7,186.5 1316.6,187.3 1318.4,188.1 1320.2,189.0 1322.1,189.9 1324.0,191.0 1325.9,192.1 1327.8,193.3 1329.8,194.6 1331.7,195.9 1333.6,197.2 1335.5,198.6 1337.5,200.0 1339.4,201.4 1341.3,202.9 1343.2,204.3 1345.2,205.8 1347.1,207.2 1349.0,208.6 1350.9,210.0 1352.9,211.4 1354.8,212.9 1356.7,214.4 1358.7,215.8 1360.6,217.3 1362.6,218.8 1364.5,220.2 1366.4,221.7 1368.3,223.2 1370.2,224.6 1372.1,226.0 1374.0,227.4 1376.1,228.9 1378.3,230.5 1380.6,232.2 1382.8,233.9 1385.1,235.5 1387.4,237.1 1389.5,238.7 1391.5,240.1 1393.4,241.5 1395.0,242.7 1396.5,243.7 1397.6,244.5" fill="none" stroke="#0000ff" stroke-width="1" stroke-linejoin="round" shape-rendering="crispEdges" />
<rect x="1398" y="161" width="11" height="1" fill="#ff0000" shape-rendering="crispEdges"/>
<rect x="1398" y="184" width="11" height="1" fill="#ff0000" shape-rendering="crispEdges"/>
<rect x="1398" y="207" width="11" height="1" fill="#707070" shape-rendering="crispEdges"/>
<rect x="1398" y="245" width="11" height="1" fill="#0000ff" shape-rendering="crispEdges"/>
<rect x="1398" y="282" width="11" height="1" fill="#707070" shape-rendering="crispEdges"/>
<polyline points="877.0,121.3 879.2,121.3 882.5,121.2 885.9,121.3 888.7,121.6 891.0,122.1 892.7,123.0 895.0,124.7 897.2,126.7 899.7,129.3 902.6,132.3 905.9,135.6 908.5,138.2 911.4,141.2 914.6,144.3 917.7,147.4 920.6,150.3 923.0,152.8 926.1,155.9 928.8,158.6 930.9,160.7 932.4,162.1 931.8,161.4 932.4,160.9 934.1,161.9 936.5,163.3 939.3,165.1 942.3,167.0 945.4,169.0 948.4,170.9 951.1,172.6 953.9,174.5 956.4,176.3 958.9,178.1 961.4,179.9 964.0,181.7 966.7,183.5 969.3,185.1 972.0,186.8 974.8,188.5 977.7,190.2 980.4,191.8 983.1,193.2 985.4,194.5 988.3,195.9 990.9,197.1 993.2,198.1 995.5,198.9 997.9,199.6 1000.4,200.2 1002.7,200.6 1005.2,200.9 1007.7,201.0 1010.4,201.2 1012.9,201.2 1015.6,201.2 1018.4,201.1 1021.1,200.9 1023.7,200.8 1026.0,200.7 1028.5,200.6 1030.3,200.6 1032.3,200.4 1035.3,199.9 1037.5,199.5 1040.1,199.0 1043.0,198.4 1046.1,197.7 1049.1,197.0 1052.1,196.2 1054.8,195.4 1057.2,194.5 1060.2,192.9 1062.5,191.2 1064.7,189.4 1066.9,187.3 1069.7,185.1 1072.0,183.3 1074.6,181.2 1077.4,179.1 1080.2,176.9 1083.1,174.8 1085.8,172.8 1088.4,171.1 1091.2,169.4 1094.0,167.9 1096.8,166.7 1099.4,165.5 1101.8,164.4 1104.0,163.3 1107.0,161.5 1109.6,159.7 1111.8,158.1 1113.3,157.0 1113.0,157.4 1113.3,156.7 1115.3,154.6 1118.0,151.7 1121.2,148.3 1124.4,144.9 1127.4,141.9 1130.1,139.1 1133.0,136.2 1135.7,133.5 1138.2,131.2 1140.0,129.4 1141.1,127.9 1142.5,127.0 1144.3,126.1 1146.6,124.8 1149.3,123.3 1152.2,122.0 1155.1,120.9 1158.1,120.3 1160.7,120.3 1163.5,120.6 1166.5,121.1 1169.4,121.8 1172.2,122.6 1174.7,123.3 1176.8,123.9 1180.0,125.0 1181.9,126.2 1184.6,127.8 1186.9,129.3 1189.4,131.1 1192.2,133.1 1195.2,134.9 1198.6,136.4 1201.1,137.1 1203.8,137.6 1206.8,138.0 1209.8,138.4 1212.9,138.8 1215.7,139.2 1218.3,139.7 1220.5,140.3 1223.7,142.0 1225.9,144.0 1227.8,146.1 1229.8,148.1 1232.1,150.0 1234.3,151.9 1236.6,153.8 1239.2,155.9 1241.5,157.8 1244.0,159.8 1246.5,161.8 1249.1,163.7 1251.7,165.3 1254.4,166.5 1257.3,167.4 1260.1,168.2 1262.4,168.7 1264.1,169.2 1263.6,169.1 1264.1,168.7 1265.9,168.8 1268.2,168.9 1271.0,169.0 1274.1,169.2 1277.3,169.3 1280.4,169.4 1283.4,169.5 1286.0,169.5 1289.0,169.4 1291.8,169.2 1294.4,169.0 1296.8,168.7 1299.2,168.3 1301.6,167.9 1304.2,167.3 1306.5,166.5 1308.8,165.6 1311.2,164.8 1314.1,164.4 1316.4,164.2 1319.0,164.1 1321.8,164.0 1324.6,164.1 1327.5,164.3 1330.2,164.5 1332.8,164.8 1335.5,165.3 1338.0,165.9 1340.4,166.6 1342.8,167.4 1345.5,168.4 1348.4,169.5 1350.9,170.5 1353.6,171.6 1356.5,172.9 1359.5,174.2 1362.4,175.5 1365.3,176.9 1367.9,178.3 1370.2,179.6 1373.4,181.8 1376.0,184.1 1378.4,186.4 1380.5,188.6 1382.7,190.6 1385.4,192.9 1387.9,195.1 1390.1,196.9 1392.0,198.4 1395.0,199.5 1396.7,199.6" fill="none" stroke="#000" stroke-width="1" stroke-linejoin="round" shape-rendering="crispEdges" />
<polyline points="877.0,129.7 878.9,129.1 881.7,128.2 884.9,127.3 887.9,127.0 890.3,127.8 893.4,135.2 895.7,145.0 897.8,150.4 900.0,155.9 902.8,162.5 905.0,167.5 907.7,173.2 910.4,179.3 913.1,185.2 915.2,190.6 917.7,198.8 919.5,206.3 921.5,212.4 923.9,216.5 926.5,219.1 929.3,221.0 931.3,221.9 933.3,222.2 935.6,222.4 938.6,222.5 940.9,222.6 943.5,222.6 946.3,222.6 949.3,222.5 952.2,222.6 954.9,222.8 957.3,223.3 960.3,224.4 962.9,226.0 965.4,227.8 967.6,229.5 969.8,231.1 972.4,232.8 974.7,234.3 976.9,235.8 979.2,237.3 981.7,239.1 984.5,240.9 986.9,242.5 988.5,243.6" fill="none" stroke="#ff0000" stroke-width="1" stroke-linejoin="round" shape-rendering="crispEdges" />
<polyline points="999.5,228.0 1001.2,225.8 1003.7,222.8 1006.7,219.3 1010.0,215.7 1013.5,212.4 1015.9,210.6 1018.4,208.9 1021.1,207.2 1023.9,205.5 1026.8,203.8 1029.6,202.1 1032.5,200.3 1035.3,198.4 1038.2,196.3 1041.3,194.1 1044.5,191.8 1047.7,189.5 1050.7,187.2 1053.5,184.9 1055.9,182.6 1058.0,180.4 1061.9,172.0 1063.4,164.0 1064.8,156.5 1066.5,149.7 1068.8,145.5 1071.6,141.7 1074.3,138.7 1076.8,137.4 1079.3,137.0 1082.1,135.6 1084.5,133.3 1087.0,130.3 1089.8,127.2 1093.1,124.7 1095.7,123.6 1098.8,122.9 1102.0,122.4 1105.2,121.8 1108.0,121.1 1110.2,120.0 1113.3,115.3 1114.9,109.1 1117.1,101.8 1119.6,93.5 1121.7,86.9 1123.9,79.9 1125.8,74.8 1127.8,72.5 1128.9,72.5" fill="none" stroke="#ff0000" stroke-width="1" stroke-linejoin="round" shape-rendering="crispEdges" />
<polyline points="1161.2,79.5 1162.0,88.0 1163.5,98.2 1165.8,105.6 1169.0,112.2 1171.2,115.4 1173.7,118.3 1176.3,121.2 1178.4,123.9 1181.1,129.1 1183.0,134.1 1184.1,138.4 1185.4,143.4 1187.6,148.6 1190.4,154.5 1192.4,159.0 1192.5,161.2 1192.4,162.5 1194.5,166.9 1197.1,170.3 1199.1,168.4 1201.0,164.8 1202.8,161.9 1204.9,159.4 1206.8,157.9 1208.9,156.7 1211.1,156.2 1213.4,156.9 1215.7,158.3 1217.3,159.4" fill="none" stroke="#ff0000" stroke-width="1" stroke-linejoin="round" shape-rendering="crispEdges" />
<polyline points="1226.7,176.5 1228.3,181.3 1230.6,187.9 1232.9,193.7 1234.9,197.4 1236.8,200.3 1239.2,203.0 1241.6,205.5 1244.5,208.1 1247.4,210.1 1250.1,210.8 1252.5,209.8 1254.8,207.5 1257.1,204.5 1259.5,201.5 1262.2,198.1 1265.2,194.1 1268.1,190.3 1270.4,187.4 1272.7,184.9 1275.1,183.5 1277.5,182.6 1280.4,181.7 1283.4,180.8 1286.0,179.6 1288.4,177.9 1290.3,175.9 1292.2,173.4 1294.4,169.8 1296.6,165.6 1298.5,162.5 1299.8,161.0 1301.6,160.6 1303.5,160.2 1305.9,159.9 1308.5,159.2 1310.9,157.5 1313.9,152.2 1316.8,145.6 1319.5,141.9 1321.9,143.5 1324.1,148.0 1326.5,152.8 1328.7,155.9 1331.1,159.1 1333.5,162.4 1335.9,165.6 1338.3,168.7 1340.8,171.9 1343.1,175.0 1345.3,178.1 1347.3,182.2 1349.1,186.3 1351.5,190.6 1353.6,193.3 1356.1,196.2 1358.8,199.1 1361.5,202.0 1364.0,204.6 1367.0,207.5 1369.9,210.2 1372.6,212.7 1374.9,215.5 1377.3,221.7 1379.6,228.0 1381.6,231.1 1384.0,234.3 1386.5,237.5 1388.9,240.5 1391.3,243.3 1393.6,246.0 1397.5,251.4 1399.8,254.9 1402.8,259.4 1406.1,264.5 1409.5,269.9 1412.9,275.1 1416.0,280.0 1418.6,284.0 1420.4,287.0" fill="none" stroke="#ff0000" stroke-width="1" stroke-linejoin="round" shape-rendering="crispEdges" />
<polyline points="877.0,152.0 878.9,152.4 881.5,152.9 884.5,153.6 887.6,154.3 890.3,155.1 893.4,156.5 896.6,158.1 899.3,159.6 901.2,160.6 901.3,159.9 901.2,159.4 902.8,160.1 905.1,161.3 907.8,163.0 910.6,165.6 912.8,168.4 915.1,171.8 917.6,175.6 920.2,179.6 923.0,183.5 925.6,186.8 928.4,190.3 931.3,193.9 934.3,197.4 937.3,200.7 940.2,203.8 943.0,206.6 945.8,209.1 948.6,211.5 951.4,213.8 954.3,216.1 957.3,218.6 960.1,220.9 962.9,223.2 965.7,225.6 968.7,228.0 971.6,230.4 974.6,232.7 977.6,235.0 980.4,237.0 983.3,239.1 986.3,241.3 989.2,243.3 992.1,245.3 994.8,247.1 997.3,248.6 999.5,249.8 1002.9,251.3 1005.5,251.7 1007.4,251.7 1008.8,251.7" fill="none" stroke="#ff6347" stroke-width="2.6" stroke-linejoin="round" />
<polyline points="1008.8,251.7 1010.7,251.7 1013.3,251.7 1016.4,251.7 1019.7,251.6 1023.0,251.2 1026.0,250.6 1028.7,249.7 1031.3,248.6 1033.9,247.2 1036.4,245.7 1039.0,244.0 1041.6,242.0 1044.2,239.9 1046.8,237.4 1049.5,234.8 1052.1,232.0 1054.7,229.2 1057.2,226.4 1060.0,223.3 1062.8,220.3 1065.5,217.1 1068.2,213.5 1071.2,209.3 1073.8,205.1 1076.5,200.3 1079.3,195.2 1082.2,190.0 1085.2,184.7 1088.4,179.6 1090.8,176.1 1093.3,172.8 1095.9,169.6 1098.5,166.3 1101.3,162.9 1104.1,159.1 1107.1,154.8 1110.2,150.0 1112.9,145.4 1115.9,140.2 1119.0,134.5 1122.3,128.5 1125.6,122.3 1128.8,116.3 1131.8,110.5 1134.7,105.2 1137.2,100.5 1139.4,96.6 1143.1,90.3 1145.3,86.9 1146.8,84.9 1148.7,82.6 1151.0,79.7 1153.3,77.0 1155.6,74.6 1158.1,72.5 1161.0,70.6 1164.1,69.1 1167.0,67.9 1169.0,67.0" fill="none" stroke="#add8e6" stroke-width="2.6" stroke-linejoin="round" />
<polyline points="1169.0,67.0 1170.7,67.1 1173.2,67.3 1176.0,67.5 1178.9,68.0 1181.5,68.9 1184.4,70.6 1187.2,72.9 1189.9,75.4 1192.4,77.9 1194.8,80.9 1196.8,83.9 1200.2,88.1 1202.5,90.4 1205.3,93.0 1208.4,95.9 1211.7,98.9 1214.9,101.9 1217.9,104.8 1220.5,107.6 1223.6,111.2 1226.3,114.8 1228.8,118.3 1231.0,121.6 1232.9,124.7 1235.4,129.0 1237.1,132.9 1239.2,137.2 1241.4,141.3 1243.9,145.9 1246.4,150.5 1248.5,154.3 1250.6,157.9 1252.4,160.5 1254.8,164.0 1256.9,167.1 1259.3,170.6 1261.9,174.3 1264.6,177.9 1267.3,181.2 1270.0,184.2 1272.9,187.2 1275.8,190.0 1278.7,192.4 1281.3,194.5 1284.3,196.2 1287.1,197.4 1289.7,198.1 1292.2,198.7 1294.9,199.0 1297.6,198.9 1299.9,198.8 1301.6,198.7" fill="none" stroke="#ff6347" stroke-width="2.6" stroke-linejoin="round" />
<polyline points="1301.6,198.7 1303.3,198.5 1305.9,198.3 1308.8,198.0 1311.9,197.7 1314.8,197.3 1317.2,196.8 1319.9,195.8 1322.2,194.5 1324.2,193.2 1326.5,192.1 1329.2,191.4 1331.9,191.0 1334.7,190.6 1337.5,190.2 1340.4,189.9 1343.6,189.5 1346.4,189.2 1348.4,189.0" fill="none" stroke="#add8e6" stroke-width="2.6" stroke-linejoin="round" />
<polyline points="1348.4,189.0 1350.1,189.5 1352.5,190.3 1355.3,191.1 1358.2,192.1 1360.9,192.9 1363.3,193.6 1365.8,194.2 1368.3,194.9 1370.8,195.7 1373.3,196.8 1375.9,198.2 1378.4,199.9 1380.9,201.7 1383.4,203.5 1385.8,205.4 1388.9,207.9 1392.0,210.6 1394.8,213.0 1396.7,214.7" fill="none" stroke="#ff6347" stroke-width="2.6" stroke-linejoin="round" />
<text x="884" y="216" font-size="9.5" fill="#585858" text-anchor="start" textLength="94.76405859375" lengthAdjust="spacingAndGlyphs" >#125939454 buy 10.00</text>
<text x="884" y="239" font-size="9.5" fill="#585858" text-anchor="start" textLength="61.805478515625" lengthAdjust="spacingAndGlyphs" >#125977660 tp</text>
<text x="884" y="245" font-size="9.5" fill="#585858" text-anchor="start" textLength="94.76405859375" lengthAdjust="spacingAndGlyphs" >#125977660 buy 10.00</text>
<text x="884" y="250" font-size="9.5" fill="#585858" text-anchor="start" textLength="60.77068359375" lengthAdjust="spacingAndGlyphs" >#125977660 sl</text>
<g shape-rendering="crispEdges">
<rect x="877" y="128" width="1" height="11" fill="#404040" />
<rect x="876" y="130" width="3" height="8" fill="#404040" />
<rect x="881" y="128" width="1" height="8" fill="#12a8dc" />
<rect x="880" y="129" width="3" height="5" fill="#12a8dc" />
<rect x="881" y="130" width="1" height="3" fill="#fff" />
<rect x="885" y="124" width="1" height="9" fill="#12a8dc" />
<rect x="884" y="125" width="3" height="6" fill="#12a8dc" />
<rect x="885" y="126" width="1" height="4" fill="#fff" />
<rect x="889" y="111" width="1" height="25" fill="#404040" />
<rect x="888" y="124" width="3" height="10" fill="#404040" />
<rect x="893" y="129" width="1" height="52" fill="#404040" />
<rect x="892" y="132" width="3" height="35" fill="#404040" />
<rect x="897" y="164" width="1" height="43" fill="#404040" />
<rect x="896" y="164" width="3" height="31" fill="#404040" />
<rect x="901" y="185" width="1" height="24" fill="#404040" />
<rect x="900" y="193" width="3" height="12" fill="#404040" />
<rect x="905" y="199" width="1" height="11" fill="#404040" />
<rect x="904" y="202" width="3" height="6" fill="#404040" />
<rect x="909" y="202" width="1" height="14" fill="#404040" />
<rect x="908" y="205" width="3" height="9" fill="#404040" />
<rect x="913" y="207" width="1" height="22" fill="#404040" />
<rect x="912" y="212" width="3" height="7" fill="#404040" />
<rect x="917" y="214" width="1" height="40" fill="#12a8dc" />
<rect x="916" y="216" width="3" height="3" fill="#12a8dc" />
<rect x="917" y="217" width="1" height="1" fill="#fff" />
<rect x="921" y="215" width="1" height="33" fill="#404040" />
<rect x="920" y="216" width="3" height="29" fill="#404040" />
<rect x="925" y="237" width="1" height="19" fill="#404040" />
<rect x="924" y="243" width="3" height="4" fill="#404040" />
<rect x="929" y="230" width="1" height="17" fill="#12a8dc" />
<rect x="928" y="231" width="3" height="15" fill="#12a8dc" />
<rect x="929" y="232" width="1" height="13" fill="#fff" />
<rect x="933" y="221" width="1" height="13" fill="#12a8dc" />
<rect x="932" y="223" width="3" height="10" fill="#12a8dc" />
<rect x="933" y="224" width="1" height="8" fill="#fff" />
<rect x="937" y="216" width="1" height="15" fill="#404040" />
<rect x="936" y="222" width="3" height="6" fill="#404040" />
<rect x="941" y="204" width="1" height="26" fill="#12a8dc" />
<rect x="940" y="213" width="3" height="15" fill="#12a8dc" />
<rect x="941" y="214" width="1" height="13" fill="#fff" />
<rect x="945" y="203" width="1" height="15" fill="#12a8dc" />
<rect x="944" y="213" width="3" height="4" fill="#12a8dc" />
<rect x="945" y="214" width="1" height="2" fill="#fff" />
<rect x="949" y="208" width="1" height="19" fill="#404040" />
<rect x="948" y="212" width="3" height="13" fill="#404040" />
<rect x="953" y="219" width="1" height="13" fill="#404040" />
<rect x="952" y="223" width="3" height="8" fill="#404040" />
<rect x="957" y="223" width="1" height="8" fill="#12a8dc" />
<rect x="956" y="226" width="3" height="3" fill="#12a8dc" />
<rect x="957" y="227" width="1" height="1" fill="#fff" />
<rect x="961" y="225" width="1" height="13" fill="#404040" />
<rect x="960" y="226" width="3" height="9" fill="#404040" />
<rect x="965" y="230" width="1" height="17" fill="#404040" />
<rect x="964" y="233" width="3" height="12" fill="#404040" />
<rect x="969" y="242" width="1" height="7" fill="#12a8dc" />
<rect x="968" y="243" width="3" height="2" fill="#12a8dc" />
<rect x="973" y="233" width="1" height="7" fill="#12a8dc" />
<rect x="972" y="234" width="3" height="4" fill="#12a8dc" />
<rect x="973" y="235" width="1" height="2" fill="#fff" />
<rect x="977" y="234" width="1" height="9" fill="#404040" />
<rect x="976" y="235" width="3" height="6" fill="#404040" />
<rect x="981" y="230" width="1" height="13" fill="#404040" />
<rect x="980" y="237" width="3" height="4" fill="#404040" />
<rect x="985" y="217" width="1" height="37" fill="#12a8dc" />
<rect x="984" y="227" width="3" height="12" fill="#12a8dc" />
<rect x="985" y="228" width="1" height="10" fill="#fff" />
<rect x="989" y="223" width="1" height="22" fill="#404040" />
<rect x="988" y="227" width="3" height="16" fill="#404040" />
<rect x="993" y="233" width="1" height="9" fill="#12a8dc" />
<rect x="992" y="234" width="3" height="5" fill="#12a8dc" />
<rect x="993" y="235" width="1" height="3" fill="#fff" />
<rect x="997" y="227" width="1" height="9" fill="#12a8dc" />
<rect x="996" y="228" width="3" height="6" fill="#12a8dc" />
<rect x="997" y="229" width="1" height="4" fill="#fff" />
<rect x="1001" y="219" width="1" height="12" fill="#12a8dc" />
<rect x="1000" y="219" width="3" height="10" fill="#12a8dc" />
<rect x="1001" y="220" width="1" height="8" fill="#fff" />
<rect x="1005" y="201" width="1" height="20" fill="#12a8dc" />
<rect x="1004" y="205" width="3" height="15" fill="#12a8dc" />
<rect x="1005" y="206" width="1" height="13" fill="#fff" />
<rect x="1009" y="197" width="1" height="23" fill="#12a8dc" />
<rect x="1008" y="201" width="3" height="6" fill="#12a8dc" />
<rect x="1009" y="202" width="1" height="4" fill="#fff" />
<rect x="1013" y="194" width="1" height="26" fill="#12a8dc" />
<rect x="1012" y="194" width="3" height="8" fill="#12a8dc" />
<rect x="1013" y="195" width="1" height="6" fill="#fff" />
<rect x="1017" y="187" width="1" height="22" fill="#404040" />
<rect x="1016" y="194" width="3" height="12" fill="#404040" />
<rect x="1021" y="199" width="1" height="12" fill="#12a8dc" />
<rect x="1020" y="201" width="3" height="5" fill="#12a8dc" />
<rect x="1021" y="202" width="1" height="3" fill="#fff" />
<rect x="1025" y="181" width="1" height="26" fill="#12a8dc" />
<rect x="1024" y="200" width="3" height="2" fill="#12a8dc" />
<rect x="1029" y="194" width="1" height="15" fill="#404040" />
<rect x="1028" y="200" width="3" height="4" fill="#404040" />
<rect x="1033" y="181" width="1" height="34" fill="#12a8dc" />
<rect x="1032" y="184" width="3" height="19" fill="#12a8dc" />
<rect x="1033" y="185" width="1" height="17" fill="#fff" />
<rect x="1037" y="178" width="1" height="18" fill="#404040" />
<rect x="1036" y="186" width="3" height="2" fill="#404040" />
<rect x="1041" y="175" width="1" height="17" fill="#12a8dc" />
<rect x="1040" y="178" width="3" height="9" fill="#12a8dc" />
<rect x="1041" y="179" width="1" height="7" fill="#fff" />
<rect x="1045" y="177" width="1" height="6" fill="#12a8dc" />
<rect x="1044" y="179" width="3" height="1" fill="#12a8dc" />
<rect x="1049" y="172" width="1" height="9" fill="#12a8dc" />
<rect x="1048" y="177" width="3" height="3" fill="#12a8dc" />
<rect x="1049" y="178" width="1" height="1" fill="#fff" />
<rect x="1053" y="171" width="1" height="12" fill="#12a8dc" />
<rect x="1052" y="172" width="3" height="6" fill="#12a8dc" />
<rect x="1053" y="173" width="1" height="4" fill="#fff" />
<rect x="1057" y="164" width="1" height="17" fill="#404040" />
<rect x="1056" y="171" width="3" height="8" fill="#404040" />
<rect x="1061" y="124" width="1" height="55" fill="#12a8dc" />
<rect x="1060" y="130" width="3" height="49" fill="#12a8dc" />
<rect x="1061" y="131" width="1" height="47" fill="#fff" />
<rect x="1065" y="113" width="1" height="21" fill="#12a8dc" />
<rect x="1064" y="118" width="3" height="12" fill="#12a8dc" />
<rect x="1065" y="119" width="1" height="10" fill="#fff" />
<rect x="1069" y="114" width="1" height="9" fill="#404040" />
<rect x="1068" y="117" width="3" height="4" fill="#404040" />
<rect x="1073" y="117" width="1" height="9" fill="#404040" />
<rect x="1072" y="119" width="3" height="5" fill="#404040" />
<rect x="1077" y="119" width="1" height="14" fill="#404040" />
<rect x="1076" y="122" width="3" height="8" fill="#404040" />
<rect x="1081" y="117" width="1" height="23" fill="#404040" />
<rect x="1080" y="129" width="3" height="9" fill="#404040" />
<rect x="1085" y="106" width="1" height="33" fill="#12a8dc" />
<rect x="1084" y="107" width="3" height="30" fill="#12a8dc" />
<rect x="1085" y="108" width="1" height="28" fill="#fff" />
<rect x="1089" y="106" width="1" height="18" fill="#404040" />
<rect x="1088" y="106" width="3" height="15" fill="#404040" />
<rect x="1093" y="115" width="1" height="9" fill="#12a8dc" />
<rect x="1092" y="117" width="3" height="4" fill="#12a8dc" />
<rect x="1093" y="118" width="1" height="2" fill="#fff" />
<rect x="1097" y="116" width="1" height="5" fill="#404040" />
<rect x="1096" y="118" width="3" height="1" fill="#404040" />
<rect x="1101" y="117" width="1" height="13" fill="#404040" />
<rect x="1100" y="117" width="3" height="12" fill="#404040" />
<rect x="1105" y="109" width="1" height="22" fill="#12a8dc" />
<rect x="1104" y="115" width="3" height="14" fill="#12a8dc" />
<rect x="1105" y="116" width="1" height="12" fill="#fff" />
<rect x="1109" y="111" width="1" height="16" fill="#12a8dc" />
<rect x="1108" y="113" width="3" height="4" fill="#12a8dc" />
<rect x="1109" y="114" width="1" height="2" fill="#fff" />
<rect x="1113" y="98" width="1" height="19" fill="#12a8dc" />
<rect x="1112" y="99" width="3" height="17" fill="#12a8dc" />
<rect x="1113" y="100" width="1" height="15" fill="#fff" />
<rect x="1117" y="54" width="1" height="22" fill="#12a8dc" />
<rect x="1116" y="60" width="3" height="15" fill="#12a8dc" />
<rect x="1117" y="61" width="1" height="13" fill="#fff" />
<rect x="1121" y="50" width="1" height="16" fill="#12a8dc" />
<rect x="1120" y="55" width="3" height="7" fill="#12a8dc" />
<rect x="1121" y="56" width="1" height="5" fill="#fff" />
<rect x="1125" y="45" width="1" height="14" fill="#12a8dc" />
<rect x="1124" y="46" width="3" height="10" fill="#12a8dc" />
<rect x="1125" y="47" width="1" height="8" fill="#fff" />
<rect x="1129" y="42" width="1" height="14" fill="#404040" />
<rect x="1128" y="46" width="3" height="9" fill="#404040" />
<rect x="1133" y="52" width="1" height="26" fill="#404040" />
<rect x="1132" y="53" width="3" height="20" fill="#404040" />
<rect x="1137" y="65" width="1" height="19" fill="#12a8dc" />
<rect x="1136" y="73" width="3" height="2" fill="#12a8dc" />
<rect x="1141" y="65" width="1" height="14" fill="#404040" />
<rect x="1140" y="72" width="3" height="3" fill="#404040" />
<rect x="1145" y="71" width="1" height="12" fill="#404040" />
<rect x="1144" y="72" width="3" height="9" fill="#404040" />
<rect x="1149" y="78" width="1" height="18" fill="#404040" />
<rect x="1148" y="79" width="3" height="8" fill="#404040" />
<rect x="1153" y="76" width="1" height="14" fill="#12a8dc" />
<rect x="1152" y="81" width="3" height="6" fill="#12a8dc" />
<rect x="1153" y="82" width="1" height="4" fill="#fff" />
<rect x="1157" y="70" width="1" height="16" fill="#12a8dc" />
<rect x="1156" y="79" width="3" height="4" fill="#12a8dc" />
<rect x="1157" y="80" width="1" height="2" fill="#fff" />
<rect x="1161" y="76" width="1" height="75" fill="#404040" />
<rect x="1160" y="79" width="3" height="55" fill="#404040" />
<rect x="1165" y="131" width="1" height="29" fill="#404040" />
<rect x="1164" y="132" width="3" height="15" fill="#404040" />
<rect x="1169" y="140" width="1" height="9" fill="#12a8dc" />
<rect x="1168" y="143" width="3" height="4" fill="#12a8dc" />
<rect x="1169" y="144" width="1" height="2" fill="#fff" />
<rect x="1173" y="136" width="1" height="9" fill="#12a8dc" />
<rect x="1172" y="137" width="3" height="7" fill="#12a8dc" />
<rect x="1173" y="138" width="1" height="5" fill="#fff" />
<rect x="1177" y="134" width="1" height="10" fill="#404040" />
<rect x="1176" y="137" width="3" height="4" fill="#404040" />
<rect x="1181" y="132" width="1" height="10" fill="#12a8dc" />
<rect x="1180" y="136" width="3" height="5" fill="#12a8dc" />
<rect x="1181" y="137" width="1" height="3" fill="#fff" />
<rect x="1185" y="167" width="1" height="29" fill="#404040" />
<rect x="1184" y="169" width="3" height="19" fill="#404040" />
<rect x="1189" y="173" width="1" height="22" fill="#12a8dc" />
<rect x="1188" y="177" width="3" height="11" fill="#12a8dc" />
<rect x="1189" y="178" width="1" height="9" fill="#fff" />
<rect x="1193" y="175" width="1" height="34" fill="#404040" />
<rect x="1192" y="176" width="3" height="24" fill="#404040" />
<rect x="1197" y="175" width="1" height="30" fill="#12a8dc" />
<rect x="1196" y="194" width="3" height="6" fill="#12a8dc" />
<rect x="1197" y="195" width="1" height="4" fill="#fff" />
<rect x="1201" y="151" width="1" height="56" fill="#12a8dc" />
<rect x="1200" y="159" width="3" height="36" fill="#12a8dc" />
<rect x="1201" y="160" width="1" height="34" fill="#fff" />
<rect x="1205" y="135" width="1" height="32" fill="#12a8dc" />
<rect x="1204" y="137" width="3" height="25" fill="#12a8dc" />
<rect x="1205" y="138" width="1" height="23" fill="#fff" />
<rect x="1209" y="134" width="1" height="17" fill="#404040" />
<rect x="1208" y="137" width="3" height="9" fill="#404040" />
<rect x="1213" y="143" width="1" height="22" fill="#404040" />
<rect x="1212" y="143" width="3" height="22" fill="#404040" />
<rect x="1217" y="148" width="1" height="19" fill="#12a8dc" />
<rect x="1216" y="159" width="3" height="6" fill="#12a8dc" />
<rect x="1217" y="160" width="1" height="4" fill="#fff" />
<rect x="1221" y="136" width="1" height="41" fill="#404040" />
<rect x="1220" y="159" width="3" height="13" fill="#404040" />
<rect x="1225" y="165" width="1" height="51" fill="#404040" />
<rect x="1224" y="167" width="3" height="46" fill="#404040" />
<rect x="1229" y="201" width="1" height="19" fill="#12a8dc" />
<rect x="1228" y="210" width="3" height="3" fill="#12a8dc" />
<rect x="1229" y="211" width="1" height="1" fill="#fff" />
<rect x="1233" y="214" width="1" height="17" fill="#404040" />
<rect x="1232" y="218" width="3" height="9" fill="#404040" />
<rect x="1237" y="220" width="1" height="13" fill="#404040" />
<rect x="1236" y="226" width="3" height="2" fill="#404040" />
<rect x="1241" y="215" width="1" height="15" fill="#12a8dc" />
<rect x="1240" y="216" width="3" height="11" fill="#12a8dc" />
<rect x="1241" y="217" width="1" height="9" fill="#fff" />
<rect x="1245" y="212" width="1" height="12" fill="#12a8dc" />
<rect x="1244" y="215" width="3" height="3" fill="#12a8dc" />
<rect x="1245" y="216" width="1" height="1" fill="#fff" />
<rect x="1249" y="194" width="1" height="33" fill="#404040" />
<rect x="1248" y="214" width="3" height="9" fill="#404040" />
<rect x="1253" y="185" width="1" height="53" fill="#12a8dc" />
<rect x="1252" y="196" width="3" height="26" fill="#12a8dc" />
<rect x="1253" y="197" width="1" height="24" fill="#fff" />
<rect x="1257" y="179" width="1" height="23" fill="#12a8dc" />
<rect x="1256" y="191" width="3" height="7" fill="#12a8dc" />
<rect x="1257" y="192" width="1" height="5" fill="#fff" />
<rect x="1261" y="186" width="1" height="15" fill="#404040" />
<rect x="1260" y="191" width="3" height="5" fill="#404040" />
<rect x="1265" y="185" width="1" height="14" fill="#12a8dc" />
<rect x="1264" y="191" width="3" height="5" fill="#12a8dc" />
<rect x="1265" y="192" width="1" height="3" fill="#fff" />
<rect x="1269" y="159" width="1" height="36" fill="#12a8dc" />
<rect x="1268" y="165" width="3" height="28" fill="#12a8dc" />
<rect x="1269" y="166" width="1" height="26" fill="#fff" />
<rect x="1273" y="149" width="1" height="25" fill="#404040" />
<rect x="1272" y="165" width="3" height="5" fill="#404040" />
<rect x="1277" y="165" width="1" height="37" fill="#404040" />
<rect x="1276" y="169" width="3" height="10" fill="#404040" />
<rect x="1281" y="164" width="1" height="31" fill="#404040" />
<rect x="1280" y="177" width="3" height="7" fill="#404040" />
<rect x="1285" y="162" width="1" height="26" fill="#12a8dc" />
<rect x="1284" y="165" width="3" height="18" fill="#12a8dc" />
<rect x="1285" y="166" width="1" height="16" fill="#fff" />
<rect x="1289" y="159" width="1" height="15" fill="#404040" />
<rect x="1288" y="165" width="3" height="7" fill="#404040" />
<rect x="1293" y="151" width="1" height="23" fill="#12a8dc" />
<rect x="1292" y="158" width="3" height="14" fill="#12a8dc" />
<rect x="1293" y="159" width="1" height="12" fill="#fff" />
<rect x="1297" y="137" width="1" height="28" fill="#12a8dc" />
<rect x="1296" y="138" width="3" height="22" fill="#12a8dc" />
<rect x="1297" y="139" width="1" height="20" fill="#fff" />
<rect x="1301" y="128" width="1" height="32" fill="#404040" />
<rect x="1300" y="138" width="3" height="13" fill="#404040" />
<rect x="1305" y="144" width="1" height="26" fill="#404040" />
<rect x="1304" y="150" width="3" height="7" fill="#404040" />
<rect x="1309" y="147" width="1" height="14" fill="#12a8dc" />
<rect x="1308" y="150" width="3" height="7" fill="#12a8dc" />
<rect x="1309" y="151" width="1" height="5" fill="#fff" />
<rect x="1313" y="143" width="1" height="11" fill="#12a8dc" />
<rect x="1312" y="143" width="3" height="9" fill="#12a8dc" />
<rect x="1313" y="144" width="1" height="7" fill="#fff" />
<rect x="1317" y="140" width="1" height="25" fill="#404040" />
<rect x="1316" y="142" width="3" height="20" fill="#404040" />
<rect x="1321" y="140" width="1" height="30" fill="#12a8dc" />
<rect x="1320" y="160" width="3" height="2" fill="#12a8dc" />
<rect x="1325" y="153" width="1" height="25" fill="#404040" />
<rect x="1324" y="159" width="3" height="9" fill="#404040" />
<rect x="1329" y="157" width="1" height="17" fill="#404040" />
<rect x="1328" y="163" width="3" height="3" fill="#404040" />
<rect x="1333" y="165" width="1" height="27" fill="#404040" />
<rect x="1332" y="166" width="3" height="19" fill="#404040" />
<rect x="1337" y="183" width="1" height="10" fill="#404040" />
<rect x="1336" y="184" width="3" height="6" fill="#404040" />
<rect x="1341" y="186" width="1" height="16" fill="#404040" />
<rect x="1340" y="187" width="3" height="2" fill="#404040" />
<rect x="1345" y="179" width="1" height="22" fill="#12a8dc" />
<rect x="1344" y="185" width="3" height="5" fill="#12a8dc" />
<rect x="1345" y="186" width="1" height="3" fill="#fff" />
<rect x="1349" y="180" width="1" height="39" fill="#404040" />
<rect x="1348" y="185" width="3" height="27" fill="#404040" />
<rect x="1353" y="206" width="1" height="17" fill="#404040" />
<rect x="1352" y="210" width="3" height="8" fill="#404040" />
<rect x="1357" y="212" width="1" height="14" fill="#12a8dc" />
<rect x="1356" y="212" width="3" height="12" fill="#12a8dc" />
<rect x="1357" y="213" width="1" height="10" fill="#fff" />
<rect x="1361" y="205" width="1" height="9" fill="#12a8dc" />
<rect x="1360" y="209" width="3" height="4" fill="#12a8dc" />
<rect x="1361" y="210" width="1" height="2" fill="#fff" />
<rect x="1365" y="205" width="1" height="11" fill="#404040" />
<rect x="1364" y="208" width="3" height="7" fill="#404040" />
<rect x="1369" y="208" width="1" height="13" fill="#404040" />
<rect x="1368" y="212" width="3" height="8" fill="#404040" />
<rect x="1373" y="216" width="1" height="33" fill="#404040" />
<rect x="1372" y="217" width="3" height="7" fill="#404040" />
<rect x="1377" y="208" width="1" height="59" fill="#404040" />
<rect x="1376" y="223" width="3" height="36" fill="#404040" />
<rect x="1381" y="251" width="1" height="12" fill="#12a8dc" />
<rect x="1380" y="251" width="3" height="8" fill="#12a8dc" />
<rect x="1381" y="252" width="1" height="6" fill="#fff" />
<rect x="1385" y="247" width="1" height="14" fill="#404040" />
<rect x="1384" y="252" width="3" height="5" fill="#404040" />
<rect x="1389" y="250" width="1" height="13" fill="#12a8dc" />
<rect x="1388" y="253" width="3" height="3" fill="#12a8dc" />
<rect x="1389" y="254" width="1" height="1" fill="#fff" />
<rect x="1393" y="247" width="1" height="13" fill="#12a8dc" />
<rect x="1392" y="250" width="3" height="5" fill="#12a8dc" />
<rect x="1393" y="251" width="1" height="3" fill="#fff" />
<rect x="1397" y="241" width="1" height="11" fill="#12a8dc" />
<rect x="1396" y="247" width="3" height="4" fill="#12a8dc" />
<rect x="1397" y="248" width="1" height="2" fill="#fff" />
</g>
</g>
<path d="M881 35 l7 0 l-3.5 4.5z" fill="#303030"/>
<text x="892" y="41" font-size="9.5" fill="#404040" text-anchor="start" textLength="225" lengthAdjust="spacingAndGlyphs" >.USTECHCash,H4  6497.75 6521.25 6493.00 6499.88</text>
<text x="881" y="54" font-size="9.5" fill="#404040" text-anchor="start" textLength="60" lengthAdjust="spacingAndGlyphs" >MBFX System</text>
<rect x="1408.5" y="155.5" width="41" height="11" fill="none" stroke="#ff0000" shape-rendering="crispEdges"/>
<text x="1410" y="165.2" font-size="11.5" fill="#ff0000" text-anchor="start" textLength="38" lengthAdjust="spacingAndGlyphs" >6769.82</text>
<rect x="1408.5" y="178.5" width="41" height="11" fill="none" stroke="#ff0000" shape-rendering="crispEdges"/>
<text x="1410" y="188.2" font-size="11.5" fill="#ff0000" text-anchor="start" textLength="38" lengthAdjust="spacingAndGlyphs" >6698.52</text>
<rect x="1408.5" y="201.5" width="41" height="11" fill="none" stroke="#707070" shape-rendering="crispEdges"/>
<text x="1410" y="211.2" font-size="11.5" fill="#707070" text-anchor="start" textLength="38" lengthAdjust="spacingAndGlyphs" >6627.22</text>
<rect x="1408.5" y="239.5" width="41" height="11" fill="none" stroke="#0000ff" shape-rendering="crispEdges"/>
<text x="1410" y="249.2" font-size="11.5" fill="#0000ff" text-anchor="start" textLength="38" lengthAdjust="spacingAndGlyphs" >6511.86</text>
<rect x="1408.5" y="275.5" width="41" height="11" fill="none" stroke="#707070" shape-rendering="crispEdges"/>
<text x="1410" y="285.2" font-size="11.5" fill="#707070" text-anchor="start" textLength="38" lengthAdjust="spacingAndGlyphs" >6396.49</text>
<text x="1499.5" y="55.4" font-size="11.5" fill="#101010" text-anchor="start" textLength="97.3" lengthAdjust="spacingAndGlyphs" >TRADE PRIS CAR</text>
<text x="1499.5" y="73.6" font-size="11.5" fill="#101010" text-anchor="start" textLength="155" lengthAdjust="spacingAndGlyphs" >RECURRENCE DE LA LIGNE</text>
<text x="1499.5" y="91.6" font-size="11.5" fill="#101010" text-anchor="start" textLength="159" lengthAdjust="spacingAndGlyphs" >GRISE CENTRE DE GRAVITE</text>
<text x="1499.5" y="109.8" font-size="11.5" fill="#101010" text-anchor="start" textLength="127" lengthAdjust="spacingAndGlyphs" >. IL FAUT ARRETER DE</text>
<text x="1499.5" y="127.5" font-size="11.5" fill="#101010" text-anchor="start" textLength="177.7" lengthAdjust="spacingAndGlyphs" >PRENDRE DES SIGNAUX SANS</text>
<text x="1499.5" y="145.5" font-size="11.5" fill="#101010" text-anchor="start" textLength="100" lengthAdjust="spacingAndGlyphs" >CONVERGENCE !</text>
<g shape-rendering="crispEdges">
<rect x="876" y="29" width="800" height="1" fill="#404040" />
<rect x="876" y="287" width="800" height="1" fill="#404040" />
<rect x="876" y="29" width="1" height="259" fill="#404040" />
<rect x="876" y="290" width="800" height="1" fill="#404040" />
<rect x="876" y="396" width="800" height="1" fill="#404040" />
<rect x="876" y="290" width="1" height="107" fill="#404040" />
<rect x="1675" y="29" width="1" height="368" fill="#404040" />
<rect x="1676" y="53" width="3" height="1" fill="#404040" />
<rect x="1676" y="86" width="3" height="1" fill="#404040" />
<rect x="1676" y="119" width="3" height="1" fill="#404040" />
<rect x="1676" y="152" width="3" height="1" fill="#404040" />
<rect x="1676" y="185" width="3" height="1" fill="#404040" />
<rect x="1676" y="218" width="3" height="1" fill="#404040" />
<rect x="1676" y="285" width="3" height="1" fill="#404040" />
<line x1="877" y1="322.5" x2="1675" y2="322.5" stroke="#b0b0b0" stroke-width="1" stroke-dasharray="3 3" />
<line x1="877" y1="364.5" x2="1675" y2="364.5" stroke="#b0b0b0" stroke-width="1" stroke-dasharray="3 3" />
</g>
<text x="1681" y="56.9" font-size="9.5" fill="#404040" text-anchor="start" textLength="33" lengthAdjust="spacingAndGlyphs" >7100.00</text>
<text x="1681" y="90.1" font-size="9.5" fill="#404040" text-anchor="start" textLength="33" lengthAdjust="spacingAndGlyphs" >6999.35</text>
<text x="1681" y="123.0" font-size="9.5" fill="#404040" text-anchor="start" textLength="33" lengthAdjust="spacingAndGlyphs" >6898.70</text>
<text x="1681" y="155.7" font-size="9.5" fill="#404040" text-anchor="start" textLength="33" lengthAdjust="spacingAndGlyphs" >6795.00</text>
<text x="1681" y="188.9" font-size="9.5" fill="#404040" text-anchor="start" textLength="33" lengthAdjust="spacingAndGlyphs" >6694.35</text>
<text x="1681" y="221.6" font-size="9.5" fill="#404040" text-anchor="start" textLength="33" lengthAdjust="spacingAndGlyphs" >6590.65</text>
<text x="1681" y="288.3" font-size="9.5" fill="#404040" text-anchor="start" textLength="33" lengthAdjust="spacingAndGlyphs" >6389.35</text>
<text x="1681" y="254.5" font-size="9.5" fill="#404040" text-anchor="start" textLength="33" lengthAdjust="spacingAndGlyphs" >6490.00</text>
<rect x="1677" y="199" width="41" height="11" fill="#ff0000" shape-rendering="crispEdges"/>
<text x="1681" y="208" font-size="9.5" fill="#fff" text-anchor="start" textLength="33" lengthAdjust="spacingAndGlyphs" >6630.41</text>
<rect x="1677" y="243" width="41" height="11" fill="#3a3a3a" shape-rendering="crispEdges"/>
<text x="1681" y="252" font-size="9.5" fill="#fff" text-anchor="start" textLength="33" lengthAdjust="spacingAndGlyphs" >6499.88</text>
<text x="1679.5" y="299.40000000000003" font-size="9.5" fill="#404040" text-anchor="start" >100</text>
<text x="1679.5" y="325.8" font-size="9.5" fill="#404040" text-anchor="start" >70</text>
<text x="1679.5" y="368.2" font-size="9.5" fill="#404040" text-anchor="start" >30</text>
<text x="1679.5" y="392.1" font-size="9.5" fill="#404040" text-anchor="start" >0</text>
<rect x="1677" y="353" width="41" height="11" fill="#ff0000" shape-rendering="crispEdges"/>
<text x="1681" y="362" font-size="9.5" fill="#fff" text-anchor="start" textLength="33" lengthAdjust="spacingAndGlyphs" >34.4444</text>
<g clip-path="url(#ch4r)">
<polyline points="877.3,346.3 886.0,344.5 889.8,346.3 893.5,352.5 898.5,358.8 903.5,360.5 917.3,362.5 922.3,366.8 926.0,366.3 931.0,359.5 936.0,359.0 941.0,355.5 946.0,355.5 952.3,358.0 958.5,357.5 966.1,361.3 973.6,357.5 981.1,358.0 986.1,354.5 989.8,357.0 1001.1,351.3 1007.3,344.5 1012.3,341.3 1018.6,344.5 1028.6,343.8 1033.6,338.0 1038.6,339.5 1042.3,336.5 1051.1,336.3 1054.8,334.3 1057.3,337.0 1062.3,325.0 1066.1,323.0 1071.1,324.5 1081.1,330.0 1085.6,324.5 1089.9,329.0 1094.9,328.3 1101.1,332.5 1106.1,329.5 1111.1,328.8 1117.4,321.3 1121.1,318.8 1129.9,319.5 1133.6,327.0 1141.1,327.5 1148.6,331.3 1157.4,330.8 1161.1,345.5 1166.2,348.0 1173.7,346.3 1180.7,347.0 1185.7,357.0 1188.7,354.3 1193.7,358.3 1198.7,355.0 1204.9,343.8 1211.2,348.0 1218.7,347.5 1226.2,355.8 1229.9,354.5 1234.9,358.3 1241.2,355.0 1246.2,354.3 1249.9,356.3 1254.9,348.3 1263.7,349.3 1268.7,342.5 1280.0,346.3 1286.2,342.0 1291.2,342.5 1299.0,337.0 1304.0,340.4 1312.7,338.9 1317.7,342.4 1327.7,344.4 1336.4,349.4 1345.2,348.1 1352.7,354.9 1361.4,351.9 1372.6,354.9 1377.6,362.4 1385.1,361.1 1392.6,358.6 1396.3,358.6" fill="none" stroke="#1e90ff" stroke-width="1" stroke-linejoin="round" shape-rendering="crispEdges" />
<line x1="877" y1="359.5" x2="1675" y2="359.5" stroke="#ff0000" stroke-width="1" />
<line x1="1117.4" y1="318.3" x2="1675.3" y2="377.3" stroke="#ff0000" stroke-width="1.6" />
</g>
<text x="881" y="302" font-size="9.5" fill="#404040" text-anchor="start" textLength="67.5" lengthAdjust="spacingAndGlyphs" >RSI(21) 35.9235</text>
<rect x="877" y="397" width="1" height="3" fill="#404040" shape-rendering="crispEdges"/>
<text x="876" y="409" font-size="9.5" fill="#404040" text-anchor="start" textLength="51.445327734375" lengthAdjust="spacingAndGlyphs" >18 Nov 2018</text>
<rect x="941" y="397" width="1" height="3" fill="#404040" shape-rendering="crispEdges"/>
<text x="940" y="409" font-size="9.5" fill="#404040" text-anchor="start" textLength="53.965781640624996" lengthAdjust="spacingAndGlyphs" >21 Nov 12:00</text>
<rect x="1005" y="397" width="1" height="3" fill="#404040" shape-rendering="crispEdges"/>
<text x="1004" y="409" font-size="9.5" fill="#404040" text-anchor="start" textLength="53.965781640624996" lengthAdjust="spacingAndGlyphs" >26 Nov 08:00</text>
<rect x="1069" y="397" width="1" height="3" fill="#404040" shape-rendering="crispEdges"/>
<text x="1068" y="409" font-size="9.5" fill="#404040" text-anchor="start" textLength="53.965781640624996" lengthAdjust="spacingAndGlyphs" >29 Nov 00:00</text>
<rect x="1133" y="397" width="1" height="3" fill="#404040" shape-rendering="crispEdges"/>
<text x="1132" y="409" font-size="9.5" fill="#404040" text-anchor="start" textLength="48.92062109374999" lengthAdjust="spacingAndGlyphs" >3 Dec 12:00</text>
<rect x="1197" y="397" width="1" height="3" fill="#404040" shape-rendering="crispEdges"/>
<text x="1196" y="409" font-size="9.5" fill="#404040" text-anchor="start" textLength="48.92062109374999" lengthAdjust="spacingAndGlyphs" >6 Dec 12:00</text>
<rect x="1261" y="397" width="1" height="3" fill="#404040" shape-rendering="crispEdges"/>
<text x="1260" y="409" font-size="9.5" fill="#404040" text-anchor="start" textLength="53.292432031249994" lengthAdjust="spacingAndGlyphs" >11 Dec 00:00</text>
<rect x="1325" y="397" width="1" height="3" fill="#404040" shape-rendering="crispEdges"/>
<text x="1324" y="409" font-size="9.5" fill="#404040" text-anchor="start" textLength="53.965781640624996" lengthAdjust="spacingAndGlyphs" >13 Dec 16:00</text>
<rect x="1389" y="397" width="1" height="3" fill="#404040" shape-rendering="crispEdges"/>
<text x="1388" y="409" font-size="9.5" fill="#404040" text-anchor="start" textLength="53.965781640624996" lengthAdjust="spacingAndGlyphs" >18 Dec 04:00</text>
</g>
<g id="h1">
<clipPath id="ch1"><rect x="13" y="463" width="800" height="198"/></clipPath>
<clipPath id="ch1s"><rect x="13" y="664" width="798" height="81"/></clipPath>
<g clip-path="url(#ch1)">
<g shape-rendering="crispEdges">
<rect x="13" y="658" width="1" height="3" fill="#12a8dc" />
<rect x="17" y="656" width="1" height="5" fill="#12a8dc" />
<rect x="21" y="656" width="1" height="5" fill="#12a8dc" />
<rect x="25" y="659" width="1" height="2" fill="#12a8dc" />
<rect x="29" y="659" width="1" height="2" fill="#12a8dc" />
<rect x="33" y="659" width="1" height="2" fill="#12a8dc" />
<rect x="37" y="660" width="1" height="1" fill="#12a8dc" />
<rect x="41" y="660" width="1" height="1" fill="#12a8dc" />
<rect x="45" y="658" width="1" height="3" fill="#12a8dc" />
<rect x="49" y="655" width="1" height="6" fill="#12a8dc" />
<rect x="53" y="657" width="1" height="4" fill="#12a8dc" />
<rect x="57" y="655" width="1" height="6" fill="#12a8dc" />
<rect x="61" y="654" width="1" height="7" fill="#12a8dc" />
<rect x="65" y="656" width="1" height="5" fill="#12a8dc" />
<rect x="69" y="652" width="1" height="9" fill="#12a8dc" />
<rect x="73" y="638" width="1" height="23" fill="#12a8dc" />
<rect x="77" y="637" width="1" height="24" fill="#12a8dc" />
<rect x="81" y="639" width="1" height="22" fill="#12a8dc" />
<rect x="85" y="642" width="1" height="19" fill="#12a8dc" />
<rect x="89" y="644" width="1" height="17" fill="#12a8dc" />
<rect x="93" y="642" width="1" height="19" fill="#12a8dc" />
<rect x="97" y="642" width="1" height="19" fill="#12a8dc" />
<rect x="101" y="657" width="1" height="4" fill="#12a8dc" />
<rect x="105" y="659" width="1" height="2" fill="#12a8dc" />
<rect x="109" y="657" width="1" height="4" fill="#12a8dc" />
<rect x="113" y="656" width="1" height="5" fill="#12a8dc" />
<rect x="117" y="659" width="1" height="2" fill="#12a8dc" />
<rect x="121" y="659" width="1" height="2" fill="#12a8dc" />
<rect x="125" y="659" width="1" height="2" fill="#12a8dc" />
<rect x="129" y="659" width="1" height="2" fill="#12a8dc" />
<rect x="133" y="659" width="1" height="2" fill="#12a8dc" />
<rect x="137" y="657" width="1" height="4" fill="#12a8dc" />
<rect x="141" y="653" width="1" height="8" fill="#12a8dc" />
<rect x="145" y="654" width="1" height="7" fill="#12a8dc" />
<rect x="149" y="657" width="1" height="4" fill="#12a8dc" />
<rect x="153" y="657" width="1" height="4" fill="#12a8dc" />
<rect x="157" y="655" width="1" height="6" fill="#12a8dc" />
<rect x="161" y="655" width="1" height="6" fill="#12a8dc" />
<rect x="165" y="642" width="1" height="19" fill="#12a8dc" />
<rect x="169" y="639" width="1" height="22" fill="#12a8dc" />
<rect x="173" y="642" width="1" height="19" fill="#12a8dc" />
<rect x="177" y="646" width="1" height="15" fill="#12a8dc" />
<rect x="181" y="651" width="1" height="10" fill="#12a8dc" />
<rect x="185" y="642" width="1" height="19" fill="#12a8dc" />
<rect x="189" y="643" width="1" height="18" fill="#12a8dc" />
<rect x="193" y="656" width="1" height="5" fill="#12a8dc" />
<rect x="197" y="659" width="1" height="2" fill="#12a8dc" />
<rect x="201" y="659" width="1" height="2" fill="#12a8dc" />
<rect x="205" y="658" width="1" height="3" fill="#12a8dc" />
<rect x="209" y="658" width="1" height="3" fill="#12a8dc" />
<rect x="213" y="659" width="1" height="2" fill="#12a8dc" />
<rect x="217" y="659" width="1" height="2" fill="#12a8dc" />
<rect x="221" y="659" width="1" height="2" fill="#12a8dc" />
<rect x="225" y="659" width="1" height="2" fill="#12a8dc" />
<rect x="229" y="659" width="1" height="2" fill="#12a8dc" />
<rect x="233" y="653" width="1" height="8" fill="#12a8dc" />
<rect x="237" y="655" width="1" height="6" fill="#12a8dc" />
<rect x="241" y="657" width="1" height="4" fill="#12a8dc" />
<rect x="245" y="656" width="1" height="5" fill="#12a8dc" />
<rect x="249" y="656" width="1" height="5" fill="#12a8dc" />
<rect x="253" y="654" width="1" height="7" fill="#12a8dc" />
<rect x="257" y="642" width="1" height="19" fill="#12a8dc" />
<rect x="261" y="638" width="1" height="23" fill="#12a8dc" />
<rect x="265" y="639" width="1" height="22" fill="#12a8dc" />
<rect x="269" y="644" width="1" height="17" fill="#12a8dc" />
<rect x="273" y="648" width="1" height="13" fill="#12a8dc" />
<rect x="277" y="647" width="1" height="14" fill="#12a8dc" />
<rect x="281" y="647" width="1" height="14" fill="#12a8dc" />
<rect x="285" y="658" width="1" height="3" fill="#12a8dc" />
<rect x="289" y="660" width="1" height="1" fill="#12a8dc" />
<rect x="293" y="659" width="1" height="2" fill="#12a8dc" />
<rect x="297" y="657" width="1" height="4" fill="#12a8dc" />
<rect x="301" y="659" width="1" height="2" fill="#12a8dc" />
<rect x="305" y="660" width="1" height="1" fill="#12a8dc" />
<rect x="309" y="660" width="1" height="1" fill="#12a8dc" />
<rect x="313" y="660" width="1" height="1" fill="#12a8dc" />
<rect x="317" y="660" width="1" height="1" fill="#12a8dc" />
<rect x="321" y="659" width="1" height="2" fill="#12a8dc" />
<rect x="325" y="657" width="1" height="4" fill="#12a8dc" />
<rect x="329" y="658" width="1" height="3" fill="#12a8dc" />
<rect x="333" y="657" width="1" height="4" fill="#12a8dc" />
<rect x="337" y="658" width="1" height="3" fill="#12a8dc" />
<rect x="341" y="659" width="1" height="2" fill="#12a8dc" />
<rect x="345" y="657" width="1" height="4" fill="#12a8dc" />
<rect x="349" y="646" width="1" height="15" fill="#12a8dc" />
<rect x="353" y="645" width="1" height="16" fill="#12a8dc" />
<rect x="357" y="647" width="1" height="14" fill="#12a8dc" />
<rect x="361" y="651" width="1" height="10" fill="#12a8dc" />
<rect x="365" y="652" width="1" height="9" fill="#12a8dc" />
<rect x="369" y="650" width="1" height="11" fill="#12a8dc" />
<rect x="373" y="650" width="1" height="11" fill="#12a8dc" />
<rect x="377" y="660" width="1" height="1" fill="#12a8dc" />
<rect x="381" y="660" width="1" height="1" fill="#12a8dc" />
<rect x="389" y="660" width="1" height="1" fill="#12a8dc" />
<rect x="393" y="659" width="1" height="2" fill="#12a8dc" />
<rect x="397" y="660" width="1" height="1" fill="#12a8dc" />
<rect x="405" y="660" width="1" height="1" fill="#12a8dc" />
<rect x="413" y="660" width="1" height="1" fill="#12a8dc" />
<rect x="417" y="657" width="1" height="4" fill="#12a8dc" />
<rect x="421" y="659" width="1" height="2" fill="#12a8dc" />
<rect x="425" y="659" width="1" height="2" fill="#12a8dc" />
<rect x="429" y="658" width="1" height="3" fill="#12a8dc" />
<rect x="433" y="658" width="1" height="3" fill="#12a8dc" />
<rect x="437" y="656" width="1" height="5" fill="#12a8dc" />
<rect x="441" y="643" width="1" height="18" fill="#12a8dc" />
<rect x="445" y="639" width="1" height="22" fill="#12a8dc" />
<rect x="449" y="645" width="1" height="16" fill="#12a8dc" />
<rect x="453" y="647" width="1" height="14" fill="#12a8dc" />
<rect x="457" y="644" width="1" height="17" fill="#12a8dc" />
<rect x="461" y="644" width="1" height="17" fill="#12a8dc" />
<rect x="465" y="657" width="1" height="4" fill="#12a8dc" />
<rect x="469" y="657" width="1" height="4" fill="#12a8dc" />
<rect x="473" y="660" width="1" height="1" fill="#12a8dc" />
<rect x="477" y="659" width="1" height="2" fill="#12a8dc" />
<rect x="481" y="658" width="1" height="3" fill="#12a8dc" />
<rect x="485" y="659" width="1" height="2" fill="#12a8dc" />
<rect x="489" y="657" width="1" height="4" fill="#12a8dc" />
<rect x="493" y="659" width="1" height="2" fill="#12a8dc" />
<rect x="497" y="659" width="1" height="2" fill="#12a8dc" />
<rect x="501" y="660" width="1" height="1" fill="#12a8dc" />
<rect x="505" y="658" width="1" height="3" fill="#12a8dc" />
<rect x="509" y="656" width="1" height="5" fill="#12a8dc" />
<rect x="513" y="656" width="1" height="5" fill="#12a8dc" />
<rect x="517" y="658" width="1" height="3" fill="#12a8dc" />
<rect x="521" y="657" width="1" height="4" fill="#12a8dc" />
<rect x="525" y="657" width="1" height="4" fill="#12a8dc" />
<rect x="529" y="657" width="1" height="4" fill="#12a8dc" />
</g>
<text x="20" y="579.6" font-size="9.5" fill="#585858" text-anchor="start" textLength="94.76405859375" lengthAdjust="spacingAndGlyphs" >#125939454 buy 10.00</text>
<text x="20" y="604" font-size="9.5" fill="#585858" text-anchor="start" textLength="61.805478515625" lengthAdjust="spacingAndGlyphs" >#125977660 tp</text>
<text x="20" y="612.5" font-size="9.5" fill="#585858" text-anchor="start" textLength="94.76405859375" lengthAdjust="spacingAndGlyphs" >#125977660 buy 10.00</text>
<text x="20" y="619.7" font-size="9.5" fill="#585858" text-anchor="start" textLength="60.77068359375" lengthAdjust="spacingAndGlyphs" >#125977660 sl</text>
<text x="488" y="481.8" font-size="10.5" fill="#8a8a8a" text-anchor="start" >M_Pivot 6872.0500</text>
<g shape-rendering="crispEdges">
<rect x="13" y="469" width="800" height="4" fill="#add8e6" />
<rect x="13" y="548" width="800" height="4" fill="#add8e6" />
<rect x="13" y="479" width="800" height="4" fill="#ff0000" />
<rect x="13" y="494" width="800" height="4" fill="#ff0000" />
<rect x="13" y="521" width="800" height="4" fill="#ff0000" />
<rect x="13" y="570" width="800" height="4" fill="#ff0000" />
<line x1="13" y1="582.5" x2="811" y2="582.5" stroke="#12a8dc" stroke-width="1" stroke-dasharray="9 4 2 4" />
<line x1="13" y1="608.5" x2="811" y2="608.5" stroke="#ff0000" stroke-width="1" stroke-dasharray="9 4 2 4" />
<line x1="13" y1="616.5" x2="811" y2="616.5" stroke="#12a8dc" stroke-width="1" stroke-dasharray="9 4 2 4" />
<line x1="13" y1="622.5" x2="811" y2="622.5" stroke="#ff0000" stroke-width="1" stroke-dasharray="9 4 2 4" />
<rect x="13" y="604" width="800" height="4" fill="#0000ff" />
<rect x="13" y="612" width="800" height="4" fill="#add8e6" />
<rect x="13" y="625" width="800" height="4" fill="#0000ff" />
</g>
<polyline points="55.2,470.7 57.2,469.3 59.9,467.4 63.1,465.3 66.3,463.1 69.3,461.3 71.8,459.9 74.2,458.7 76.6,457.6 79.1,456.4 81.8,455.1 84.1,453.8 86.5,452.3 89.0,450.8 91.6,449.3 94.4,447.9 97.3,446.5 99.8,445.5 102.3,444.6 105.0,443.7 107.8,442.8 110.6,441.9 113.5,441.1 116.3,440.3 119.2,439.5 122.1,438.7 125.1,437.9 128.2,437.2 131.3,436.5 134.3,435.8 137.2,435.1 140.0,434.5 142.6,434.0 145.5,433.4 148.1,432.8 150.4,432.4 152.7,432.0 155.2,431.6 158.2,431.4 160.7,431.2 163.5,431.0 166.4,430.9 169.4,430.9 172.5,430.8 175.5,430.8 178.6,430.8 181.6,430.9 184.5,431.0 187.4,431.1 190.4,431.3 193.3,431.5 196.2,431.7 199.1,432.0 202.1,432.2 205.0,432.5 208.0,432.7 211.0,432.9 214.1,433.2 217.2,433.4 220.2,433.7 223.1,434.0 225.8,434.4 228.4,434.8 231.4,435.4 234.2,436.2 236.7,437.0 239.1,437.8 241.5,438.7 244.0,439.5 246.6,440.3 249.4,441.1 252.1,441.9 254.8,442.6 257.3,443.4 259.6,444.2 262.4,445.1 264.8,446.1 267.2,447.0 270.0,448.1 272.2,448.8 274.5,449.6 277.0,450.4 279.6,451.3 282.5,452.3 285.6,453.5 288.1,454.6 290.9,455.7 293.8,457.0 296.8,458.3 299.9,459.6 303.0,461.0 306.0,462.3 309.0,463.6 311.9,464.9 314.8,466.2 317.8,467.4 320.7,468.7 323.6,469.9 326.5,471.2 329.5,472.5 332.4,473.8 335.3,475.1 338.2,476.5 341.2,477.9 344.1,479.2 347.0,480.6 349.9,482.0 352.9,483.4 355.8,484.7 358.7,486.0 361.6,487.3 364.6,488.5 367.5,489.8 370.4,491.0 373.3,492.3 376.3,493.5 379.2,494.8 382.1,496.2 385.0,497.5 388.0,498.9 390.9,500.3 393.8,501.7 396.7,503.1 399.7,504.4 402.6,505.8 405.6,507.1 408.6,508.4 411.7,509.8 414.8,511.1 417.8,512.4 420.7,513.6 423.4,514.8 426.0,515.9 429.1,517.2 431.8,518.4 434.4,519.5 436.8,520.5 439.2,521.6 441.6,522.9 444.5,524.7 447.3,526.7 450.0,528.8 452.7,530.7 455.5,532.3 458.3,533.7 461.2,534.8 464.0,535.7 466.7,536.6 469.4,537.5 472.4,538.6 475.3,539.6 478.1,540.6 480.9,541.6 483.8,542.7 486.7,543.9 489.6,545.1 492.5,546.2 495.3,547.3 498.2,548.2 501.1,549.2 504.0,550.3 506.5,551.1 509.0,551.9 511.6,552.8 514.2,553.6 516.8,554.5 519.6,555.6 522.7,556.7 525.7,557.8 528.2,558.8 530.1,559.5" fill="none" stroke="#ff0000" stroke-width="1" stroke-linejoin="round" shape-rendering="crispEdges" />
<polyline points="55.2,490.1 57.2,488.8 59.9,486.9 63.1,484.7 66.3,482.6 69.3,480.8 71.8,479.4 74.2,478.2 76.6,477.1 79.1,475.9 81.8,474.5 84.1,473.2 86.5,471.8 89.0,470.3 91.6,468.8 94.4,467.3 97.3,466.0 99.8,465.0 102.3,464.1 105.0,463.1 107.8,462.3 110.6,461.4 113.5,460.6 116.3,459.7 119.2,458.9 122.1,458.2 125.1,457.4 128.2,456.7 131.3,455.9 134.3,455.3 137.2,454.6 140.0,454.0 142.6,453.5 145.5,452.9 148.1,452.3 150.4,451.8 152.7,451.4 155.2,451.1 158.2,450.8 160.7,450.7 163.5,450.5 166.4,450.4 169.4,450.3 172.5,450.3 175.5,450.3 178.6,450.3 181.6,450.4 184.5,450.5 187.4,450.6 190.4,450.8 193.3,451.0 196.2,451.2 199.1,451.4 202.1,451.7 205.0,451.9 208.0,452.2 211.0,452.4 214.1,452.6 217.2,452.9 220.2,453.2 223.1,453.5 225.8,453.9 228.4,454.3 231.4,454.9 234.2,455.6 236.7,456.5 239.1,457.3 241.5,458.1 244.0,458.9 246.6,459.7 249.4,460.5 252.1,461.3 254.8,462.1 257.3,462.9 259.6,463.6 262.4,464.6 264.8,465.5 267.2,466.5 270.0,467.5 272.2,468.3 274.5,469.1 277.0,469.9 279.6,470.8 282.5,471.8 285.6,473.0 288.1,474.0 290.9,475.2 293.8,476.4 296.8,477.8 299.9,479.1 303.0,480.5 306.0,481.8 309.0,483.1 311.9,484.4 314.8,485.6 317.8,486.9 320.7,488.1 323.6,489.4 326.5,490.7 329.5,492.0 332.4,493.3 335.3,494.6 338.2,496.0 341.2,497.3 344.1,498.7 347.0,500.1 349.9,501.5 352.9,502.8 355.8,504.2 358.7,505.5 361.6,506.7 364.6,508.0 367.5,509.2 370.4,510.5 373.3,511.7 376.3,513.0 379.2,514.3 382.1,515.6 385.0,517.0 388.0,518.4 390.9,519.8 393.8,521.2 396.7,522.5 399.7,523.9 402.6,525.2 405.6,526.6 408.6,527.9 411.7,529.2 414.8,530.5 417.8,531.8 420.7,533.1 423.4,534.3 426.0,535.4 429.1,536.7 431.8,537.9 434.4,538.9 436.8,540.0 439.2,541.1 441.6,542.4 444.5,544.2 447.3,546.2 450.0,548.2 452.7,550.2 455.5,551.8 458.3,553.1 461.2,554.2 464.0,555.2 466.7,556.1 469.4,557.0 472.4,558.1 475.3,559.1 478.1,560.0 480.9,561.1 483.8,562.2 486.7,563.4 489.6,564.5 492.5,565.7 495.3,566.7 498.2,567.7 501.1,568.7 504.0,569.7 506.5,570.6 509.0,571.4 511.6,572.2 514.2,573.1 516.8,574.0 519.6,575.0 522.7,576.2 525.7,577.3 528.2,578.3 530.1,579.0" fill="none" stroke="#ff0000" stroke-width="1" stroke-linejoin="round" shape-rendering="crispEdges" />
<polyline points="55.2,509.6 57.2,508.3 59.9,506.4 63.1,504.2 66.3,502.1 69.3,500.2 71.8,498.8 74.2,497.6 76.6,496.5 79.1,495.4 81.8,494.0 84.1,492.7 86.5,491.3 89.0,489.8 91.6,488.3 94.4,486.8 97.3,485.4 99.8,484.5 102.3,483.5 105.0,482.6 107.8,481.7 110.6,480.9 113.5,480.0 116.3,479.2 119.2,478.4 122.1,477.6 125.1,476.9 128.2,476.1 131.3,475.4 134.3,474.7 137.2,474.1 140.0,473.5 142.6,473.0 145.5,472.3 148.1,471.8 150.4,471.3 152.7,470.9 155.2,470.6 158.2,470.3 160.7,470.1 163.5,470.0 166.4,469.9 169.4,469.8 172.5,469.8 175.5,469.8 178.6,469.8 181.6,469.8 184.5,469.9 187.4,470.1 190.4,470.2 193.3,470.4 196.2,470.7 199.1,470.9 202.1,471.1 205.0,471.4 208.0,471.6 211.0,471.9 214.1,472.1 217.2,472.4 220.2,472.6 223.1,473.0 225.8,473.3 228.4,473.7 231.4,474.4 234.2,475.1 236.7,475.9 239.1,476.8 241.5,477.6 244.0,478.4 246.6,479.2 249.4,480.0 252.1,480.8 254.8,481.6 257.3,482.4 259.6,483.1 262.4,484.1 264.8,485.0 267.2,485.9 270.0,487.0 272.2,487.8 274.5,488.5 277.0,489.3 279.6,490.2 282.5,491.3 285.6,492.5 288.1,493.5 290.9,494.7 293.8,495.9 296.8,497.2 299.9,498.6 303.0,499.9 306.0,501.3 309.0,502.6 311.9,503.9 314.8,505.1 317.8,506.4 320.7,507.6 323.6,508.9 326.5,510.1 329.5,511.4 332.4,512.7 335.3,514.1 338.2,515.4 341.2,516.8 344.1,518.2 347.0,519.6 349.9,521.0 352.9,522.3 355.8,523.6 358.7,524.9 361.6,526.2 364.6,527.5 367.5,528.7 370.4,530.0 373.3,531.2 376.3,532.5 379.2,533.8 382.1,535.1 385.0,536.5 388.0,537.9 390.9,539.2 393.8,540.6 396.7,542.0 399.7,543.4 402.6,544.7 405.6,546.0 408.6,547.4 411.7,548.7 414.8,550.0 417.8,551.3 420.7,552.5 423.4,553.7 426.0,554.8 429.1,556.2 431.8,557.3 434.4,558.4 436.8,559.5 439.2,560.6 441.6,561.9 444.5,563.7 447.3,565.7 450.0,567.7 452.7,569.6 455.5,571.3 458.3,572.6 461.2,573.7 464.0,574.7 466.7,575.6 469.4,576.5 472.4,577.6 475.3,578.5 478.1,579.5 480.9,580.5 483.8,581.6 486.7,582.8 489.6,584.0 492.5,585.1 495.3,586.2 498.2,587.2 501.1,588.2 504.0,589.2 506.5,590.0 509.0,590.9 511.6,591.7 514.2,592.6 516.8,593.5 519.6,594.5 522.7,595.6 525.7,596.8 528.2,597.8 530.1,598.4" fill="none" stroke="#707070" stroke-width="1" stroke-linejoin="round" shape-rendering="crispEdges" />
<polyline points="55.2,572.6 57.2,571.3 59.9,569.4 63.1,567.2 66.3,565.1 69.3,563.3 71.8,561.8 74.2,560.6 76.6,559.5 79.1,558.4 81.8,557.0 84.1,555.7 86.5,554.3 89.0,552.8 91.6,551.3 94.4,549.8 97.3,548.4 99.8,547.5 102.3,546.5 105.0,545.6 107.8,544.7 110.6,543.9 113.5,543.0 116.3,542.2 119.2,541.4 122.1,540.6 125.1,539.9 128.2,539.1 131.3,538.4 134.3,537.7 137.2,537.1 140.0,536.5 142.6,536.0 145.5,535.3 148.1,534.8 150.4,534.3 152.7,533.9 155.2,533.6 158.2,533.3 160.7,533.1 163.5,533.0 166.4,532.9 169.4,532.8 172.5,532.8 175.5,532.8 178.6,532.8 181.6,532.8 184.5,532.9 187.4,533.1 190.4,533.2 193.3,533.4 196.2,533.7 199.1,533.9 202.1,534.2 205.0,534.4 208.0,534.6 211.0,534.9 214.1,535.1 217.2,535.4 220.2,535.7 223.1,536.0 225.8,536.3 228.4,536.7 231.4,537.4 234.2,538.1 236.7,538.9 239.1,539.8 241.5,540.6 244.0,541.4 246.6,542.2 249.4,543.0 252.1,543.8 254.8,544.6 257.3,545.4 259.6,546.1 262.4,547.1 264.8,548.0 267.2,548.9 270.0,550.0 272.2,550.8 274.5,551.5 277.0,552.3 279.6,553.2 282.5,554.3 285.6,555.5 288.1,556.5 290.9,557.7 293.8,558.9 296.8,560.2 299.9,561.6 303.0,562.9 306.0,564.3 309.0,565.6 311.9,566.9 314.8,568.1 317.8,569.4 320.7,570.6 323.6,571.9 326.5,573.1 329.5,574.4 332.4,575.7 335.3,577.1 338.2,578.4 341.2,579.8 344.1,581.2 347.0,582.6 349.9,584.0 352.9,585.3 355.8,586.7 358.7,588.0 361.6,589.2 364.6,590.5 367.5,591.7 370.4,593.0 373.3,594.2 376.3,595.5 379.2,596.8 382.1,598.1 385.0,599.5 388.0,600.9 390.9,602.2 393.8,603.6 396.7,605.0 399.7,606.4 402.6,607.7 405.6,609.0 408.6,610.4 411.7,611.7 414.8,613.0 417.8,614.3 420.7,615.6 423.4,616.7 426.0,617.8 429.1,619.2 431.8,620.3 434.4,621.4 436.8,622.5 439.2,623.6 441.6,624.9 444.5,626.7 447.3,628.7 450.0,630.7 452.7,632.6 455.5,634.3 458.3,635.6 461.2,636.7 464.0,637.7 466.7,638.6 469.4,639.5 472.4,640.6 475.3,641.5 478.1,642.5 480.9,643.5 483.8,644.7 486.7,645.8 489.6,647.0 492.5,648.1 495.3,649.2 498.2,650.2 501.1,651.2 504.0,652.2 506.5,653.0 509.0,653.9 511.6,654.7 514.2,655.6 516.8,656.5 519.6,657.5 522.7,658.7 525.7,659.8 528.2,660.8 530.1,661.4" fill="none" stroke="#707070" stroke-width="1" stroke-linejoin="round" shape-rendering="crispEdges" />
<polyline points="55.2,592.1 57.2,590.8 59.9,588.9 63.1,586.7 66.3,584.5 69.3,582.7 71.8,581.3 74.2,580.1 76.6,579.0 79.1,577.8 81.8,576.5 84.1,575.2 86.5,573.7 89.0,572.2 91.6,570.7 94.4,569.3 97.3,567.9 99.8,566.9 102.3,566.0 105.0,565.1 107.8,564.2 110.6,563.3 113.5,562.5 116.3,561.7 119.2,560.9 122.1,560.1 125.1,559.3 128.2,558.6 131.3,557.9 134.3,557.2 137.2,556.6 140.0,556.0 142.6,555.4 145.5,554.8 148.1,554.3 150.4,553.8 152.7,553.4 155.2,553.1 158.2,552.8 160.7,552.6 163.5,552.5 166.4,552.4 169.4,552.3 172.5,552.2 175.5,552.2 178.6,552.3 181.6,552.3 184.5,552.4 187.4,552.5 190.4,552.7 193.3,552.9 196.2,553.1 199.1,553.4 202.1,553.6 205.0,553.9 208.0,554.1 211.0,554.3 214.1,554.6 217.2,554.8 220.2,555.1 223.1,555.4 225.8,555.8 228.4,556.2 231.4,556.9 234.2,557.6 236.7,558.4 239.1,559.2 241.5,560.1 244.0,560.9 246.6,561.7 249.4,562.5 252.1,563.3 254.8,564.1 257.3,564.8 259.6,565.6 262.4,566.6 264.8,567.5 267.2,568.4 270.0,569.5 272.2,570.2 274.5,571.0 277.0,571.8 279.6,572.7 282.5,573.7 285.6,574.9 288.1,576.0 290.9,577.1 293.8,578.4 296.8,579.7 299.9,581.1 303.0,582.4 306.0,583.8 309.0,585.1 311.9,586.3 314.8,587.6 317.8,588.8 320.7,590.1 323.6,591.3 326.5,592.6 329.5,593.9 332.4,595.2 335.3,596.5 338.2,597.9 341.2,599.3 344.1,600.7 347.0,602.0 349.9,603.4 352.9,604.8 355.8,606.1 358.7,607.4 361.6,608.7 364.6,609.9 367.5,611.2 370.4,612.4 373.3,613.7 376.3,615.0 379.2,616.3 382.1,617.6 385.0,619.0 388.0,620.3 390.9,621.7 393.8,623.1 396.7,624.5 399.7,625.8 402.6,627.2 405.6,628.5 408.6,629.8 411.7,631.2 414.8,632.5 417.8,633.8 420.7,635.0 423.4,636.2 426.0,637.3 429.1,638.6 431.8,639.8 434.4,640.9 436.8,641.9 439.2,643.1 441.6,644.3 444.5,646.1 447.3,648.1 450.0,650.2 452.7,652.1 455.5,653.7 458.3,655.1 461.2,656.2 464.0,657.2 466.7,658.1 469.4,658.9 472.4,660.0 475.3,661.0 478.1,662.0 480.9,663.0 483.8,664.1 486.7,665.3 489.6,666.5 492.5,667.6 495.3,668.7 498.2,669.7 501.1,670.7 504.0,671.7 506.5,672.5 509.0,673.3 511.6,674.2 514.2,675.0 516.8,675.9 519.6,677.0 522.7,678.1 525.7,679.3 528.2,680.2 530.1,680.9" fill="none" stroke="#22c022" stroke-width="1" stroke-linejoin="round" shape-rendering="crispEdges" />
<polyline points="55.2,611.6 57.2,610.2 59.9,608.3 63.1,606.2 66.3,604.0 69.3,602.2 71.8,600.8 74.2,599.6 76.6,598.5 79.1,597.3 81.8,596.0 84.1,594.6 86.5,593.2 89.0,591.7 91.6,590.2 94.4,588.7 97.3,587.4 99.8,586.4 102.3,585.5 105.0,584.6 107.8,583.7 110.6,582.8 113.5,582.0 116.3,581.1 119.2,580.4 122.1,579.6 125.1,578.8 128.2,578.1 131.3,577.4 134.3,576.7 137.2,576.0 140.0,575.4 142.6,574.9 145.5,574.3 148.1,573.7 150.4,573.3 152.7,572.9 155.2,572.5 158.2,572.2 160.7,572.1 163.5,571.9 166.4,571.8 169.4,571.7 172.5,571.7 175.5,571.7 178.6,571.7 181.6,571.8 184.5,571.9 187.4,572.0 190.4,572.2 193.3,572.4 196.2,572.6 199.1,572.8 202.1,573.1 205.0,573.3 208.0,573.6 211.0,573.8 214.1,574.1 217.2,574.3 220.2,574.6 223.1,574.9 225.8,575.3 228.4,575.7 231.4,576.3 234.2,577.1 236.7,577.9 239.1,578.7 241.5,579.5 244.0,580.4 246.6,581.1 249.4,581.9 252.1,582.7 254.8,583.5 257.3,584.3 259.6,585.0 262.4,586.0 264.8,586.9 267.2,587.9 270.0,588.9 272.2,589.7 274.5,590.5 277.0,591.3 279.6,592.2 282.5,593.2 285.6,594.4 288.1,595.4 290.9,596.6 293.8,597.9 296.8,599.2 299.9,600.5 303.0,601.9 306.0,603.2 309.0,604.5 311.9,605.8 314.8,607.1 317.8,608.3 320.7,609.6 323.6,610.8 326.5,612.1 329.5,613.4 332.4,614.7 335.3,616.0 338.2,617.4 341.2,618.7 344.1,620.1 347.0,621.5 349.9,622.9 352.9,624.3 355.8,625.6 358.7,626.9 361.6,628.2 364.6,629.4 367.5,630.7 370.4,631.9 373.3,633.2 376.3,634.4 379.2,635.7 382.1,637.1 385.0,638.4 388.0,639.8 390.9,641.2 393.8,642.6 396.7,644.0 399.7,645.3 402.6,646.6 405.6,648.0 408.6,649.3 411.7,650.6 414.8,652.0 417.8,653.2 420.7,654.5 423.4,655.7 426.0,656.8 429.1,658.1 431.8,659.3 434.4,660.3 436.8,661.4 439.2,662.5 441.6,663.8 444.5,665.6 447.3,667.6 450.0,669.6 452.7,671.6 455.5,673.2 458.3,674.5 461.2,675.7 464.0,676.6 466.7,677.5 469.4,678.4 472.4,679.5 475.3,680.5 478.1,681.4 480.9,682.5 483.8,683.6 486.7,684.8 489.6,686.0 492.5,687.1 495.3,688.1 498.2,689.1 501.1,690.1 504.0,691.1 506.5,692.0 509.0,692.8 511.6,693.6 514.2,694.5 516.8,695.4 519.6,696.4 522.7,697.6 525.7,698.7 528.2,699.7 530.1,700.4" fill="none" stroke="#22c022" stroke-width="1" stroke-linejoin="round" shape-rendering="crispEdges" />
<polyline points="55.2,541.1 57.2,539.8 59.9,537.9 63.1,535.7 66.3,533.6 69.3,531.8 71.8,530.3 74.2,529.1 76.6,528.0 79.1,526.9 81.8,525.5 84.1,524.2 86.5,522.8 89.0,521.3 91.6,519.8 94.4,518.3 97.3,516.9 99.8,516.0 102.3,515.0 105.0,514.1 107.8,513.2 110.6,512.4 113.5,511.5 116.3,510.7 119.2,509.9 122.1,509.1 125.1,508.4 128.2,507.6 131.3,506.9 134.3,506.2 137.2,505.6 140.0,505.0 142.6,504.5 145.5,503.8 148.1,503.3 150.4,502.8 152.7,502.4 155.2,502.1 158.2,501.8 160.7,501.6 163.5,501.5 166.4,501.4 169.4,501.3 172.5,501.3 175.5,501.3 178.6,501.3 181.6,501.3 184.5,501.4 187.4,501.6 190.4,501.7 193.3,501.9 196.2,502.2 199.1,502.4 202.1,502.6 205.0,502.9 208.0,503.1 211.0,503.4 214.1,503.6 217.2,503.9 220.2,504.2 223.1,504.5 225.8,504.8 228.4,505.2 231.4,505.9 234.2,506.6 236.7,507.4 239.1,508.3 241.5,509.1 244.0,509.9 246.6,510.7 249.4,511.5 252.1,512.3 254.8,513.1 257.3,513.9 259.6,514.6 262.4,515.6 264.8,516.5 267.2,517.4 270.0,518.5 272.2,519.3 274.5,520.0 277.0,520.8 279.6,521.7 282.5,522.8 285.6,524.0 288.1,525.0 290.9,526.2 293.8,527.4 296.8,528.7 299.9,530.1 303.0,531.4 306.0,532.8 309.0,534.1 311.9,535.4 314.8,536.6 317.8,537.9 320.7,539.1 323.6,540.4 326.5,541.6 329.5,542.9 332.4,544.2 335.3,545.6 338.2,546.9 341.2,548.3 344.1,549.7 347.0,551.1 349.9,552.5 352.9,553.8 355.8,555.1 358.7,556.4 361.6,557.7 364.6,559.0 367.5,560.2 370.4,561.5 373.3,562.7 376.3,564.0 379.2,565.3 382.1,566.6 385.0,568.0 388.0,569.4 390.9,570.7 393.8,572.1 396.7,573.5 399.7,574.9 402.6,576.2 405.6,577.5 408.6,578.9 411.7,580.2 414.8,581.5 417.8,582.8 420.7,584.0 423.4,585.2 426.0,586.3 429.1,587.7 431.8,588.8 434.4,589.9 436.8,591.0 439.2,592.1 441.6,593.4 444.5,595.2 447.3,597.2 450.0,599.2 452.7,601.1 455.5,602.8 458.3,604.1 461.2,605.2 464.0,606.2 466.7,607.1 469.4,608.0 472.4,609.1 475.3,610.0 478.1,611.0 480.9,612.0 483.8,613.2 486.7,614.3 489.6,615.5 492.5,616.6 495.3,617.7 498.2,618.7 501.1,619.7 504.0,620.7 506.5,621.5 509.0,622.4 511.6,623.2 514.2,624.1 516.8,625.0 519.6,626.0 522.7,627.1 525.7,628.3 528.2,629.3 530.1,629.9" fill="none" stroke="#0000ff" stroke-width="1" stroke-linejoin="round" shape-rendering="crispEdges" />
<line x1="181.6" y1="474" x2="700.7" y2="660.6" stroke="#ff0000" stroke-width="1" shape-rendering="crispEdges" />
<polyline points="307.4,520.1 344.9,533.3 394.8,552.0 450.9,569.2" fill="none" stroke="#ff0000" stroke-width="1" stroke-linejoin="round" shape-rendering="crispEdges" />
<polyline points="13.1,562.2 15.0,561.8 17.4,561.3 20.4,560.8 23.6,560.1 27.0,559.5 30.3,558.9 33.4,558.3 36.4,557.7 39.6,557.1 42.9,556.5 46.1,555.9 49.0,555.3 51.6,554.8 53.7,554.4 57.0,553.5 58.4,552.3 60.4,549.9 63.0,546.6 65.1,544.5 67.6,542.1 70.2,539.8 72.4,538.0 74.8,536.7 76.8,536.2 78.6,535.7 81.0,534.2 83.3,533.3 85.1,533.8 87.1,534.8 89.6,535.7 92.0,536.2 94.8,536.7 97.7,537.1 100.5,537.2 102.9,537.1 105.2,536.8 107.5,536.3 109.8,535.7 112.1,534.9 114.3,533.9 116.6,532.8 119.2,531.8 121.5,530.9 124.0,529.9 126.5,529.0 129.1,528.1 131.7,527.4 134.3,526.9 137.0,526.6 139.6,526.3 142.0,526.0 144.1,525.5 146.6,524.1 148.3,522.3 150.4,520.8 152.5,520.1 155.0,519.7 157.4,519.2 159.7,518.5 162.5,517.2 165.0,515.7 167.5,513.8 170.2,511.3 172.9,508.4 175.3,506.0 177.5,504.4 179.6,503.2 181.6,502.4 183.7,501.9 185.7,501.7 187.8,501.8 189.8,502.5 191.9,503.6 194.1,504.5 196.4,504.7 199.0,504.6 201.9,504.5 204.3,504.4 206.8,504.2 209.6,504.0 212.8,503.7 215.2,503.4 218.0,502.9 220.9,502.5 223.7,502.0 226.3,501.6 228.4,501.3 231.1,501.0 232.9,500.8 234.6,500.9 236.6,501.2 238.5,501.7 240.9,502.1 243.0,502.2 245.3,502.3 247.8,502.3 250.2,502.4 252.6,502.6 254.9,502.8 257.2,503.1 259.6,503.7 262.1,504.7 264.8,506.0 267.2,507.3 268.9,508.4 269.0,509.2 270.0,509.6 272.0,509.7 274.8,509.7 278.1,509.7 281.4,509.8 284.6,509.9 287.2,510.2 290.0,511.0 292.3,512.1 294.4,513.3 296.5,514.6 298.7,515.8 300.9,517.2 303.2,518.6 305.9,520.1 308.4,521.3 311.2,522.7 314.1,524.0 317.0,525.5 319.9,527.1 322.6,528.9 325.3,530.9 328.0,532.9 330.8,534.8 334.0,536.1 336.5,536.7 339.2,537.0 342.1,537.1 345.1,537.2 347.9,537.2 350.4,537.3 352.7,537.7 355.7,538.7 357.9,540.0 359.9,541.4 362.0,542.7 364.4,543.8 366.8,544.9 369.2,546.1 371.4,547.3 374.0,549.4 376.5,551.6 379.2,553.6 381.2,554.7 383.2,555.7 385.5,556.6 388.5,557.5 390.8,558.0 393.5,558.5 396.5,558.9 399.5,559.4 402.4,559.8 405.1,560.2 407.3,560.6 410.6,561.5 412.6,562.2 415.1,562.9 417.6,563.4 420.5,563.8 423.4,564.2 426.0,564.8 428.8,565.8 431.3,566.9 433.8,568.4 436.4,570.7 439.0,573.3 441.6,575.1 444.3,575.5 447.0,575.2 449.4,575.1 452.0,575.8 454.3,577.3 457.0,580.3 460.1,584.3 462.2,586.9 464.5,589.9 467.0,592.9 469.4,595.3 471.7,596.7 474.0,597.7 476.3,598.4 478.6,599.3 481.0,600.4 483.3,601.5 485.6,602.7 487.9,603.9 490.8,605.8 493.6,607.6 496.0,609.1 498.4,610.3 500.6,610.9 503.5,611.3 505.8,611.4" fill="none" stroke="#000" stroke-width="2.6" stroke-linejoin="round" />
<rect x="531" y="561" width="13" height="1" fill="#ff0000" shape-rendering="crispEdges"/>
<rect x="531" y="580" width="13" height="1" fill="#ff0000" shape-rendering="crispEdges"/>
<rect x="531" y="599" width="13" height="1" fill="#707070" shape-rendering="crispEdges"/>
<rect x="531" y="631" width="13" height="1" fill="#0000ff" shape-rendering="crispEdges"/>
<g shape-rendering="crispEdges">
<rect x="13" y="541" width="1" height="10" fill="#404040" />
<rect x="12" y="542" width="3" height="8" fill="#404040" />
<rect x="17" y="545" width="1" height="11" fill="#404040" />
<rect x="16" y="548" width="3" height="7" fill="#404040" />
<rect x="21" y="542" width="1" height="16" fill="#12a8dc" />
<rect x="20" y="551" width="3" height="4" fill="#12a8dc" />
<rect x="21" y="552" width="1" height="2" fill="#fff" />
<rect x="25" y="549" width="1" height="9" fill="#404040" />
<rect x="24" y="550" width="3" height="5" fill="#404040" />
<rect x="29" y="548" width="1" height="8" fill="#404040" />
<rect x="28" y="551" width="3" height="4" fill="#404040" />
<rect x="33" y="549" width="1" height="6" fill="#12a8dc" />
<rect x="32" y="550" width="3" height="4" fill="#12a8dc" />
<rect x="33" y="551" width="1" height="2" fill="#fff" />
<rect x="37" y="546" width="1" height="7" fill="#404040" />
<rect x="36" y="550" width="3" height="1" fill="#404040" />
<rect x="41" y="548" width="1" height="7" fill="#12a8dc" />
<rect x="40" y="549" width="3" height="3" fill="#12a8dc" />
<rect x="41" y="550" width="1" height="1" fill="#fff" />
<rect x="45" y="541" width="1" height="9" fill="#12a8dc" />
<rect x="44" y="548" width="3" height="2" fill="#12a8dc" />
<rect x="49" y="542" width="1" height="11" fill="#404040" />
<rect x="48" y="548" width="3" height="3" fill="#404040" />
<rect x="53" y="539" width="1" height="13" fill="#12a8dc" />
<rect x="52" y="540" width="3" height="11" fill="#12a8dc" />
<rect x="53" y="541" width="1" height="9" fill="#fff" />
<rect x="57" y="523" width="1" height="19" fill="#12a8dc" />
<rect x="56" y="525" width="3" height="16" fill="#12a8dc" />
<rect x="57" y="526" width="1" height="14" fill="#fff" />
<rect x="61" y="510" width="1" height="18" fill="#12a8dc" />
<rect x="60" y="518" width="3" height="8" fill="#12a8dc" />
<rect x="61" y="519" width="1" height="6" fill="#fff" />
<rect x="65" y="507" width="1" height="12" fill="#12a8dc" />
<rect x="64" y="511" width="3" height="8" fill="#12a8dc" />
<rect x="65" y="512" width="1" height="6" fill="#fff" />
<rect x="69" y="497" width="1" height="19" fill="#12a8dc" />
<rect x="68" y="502" width="3" height="11" fill="#12a8dc" />
<rect x="69" y="503" width="1" height="9" fill="#fff" />
<rect x="73" y="499" width="1" height="18" fill="#404040" />
<rect x="72" y="501" width="3" height="13" fill="#404040" />
<rect x="77" y="503" width="1" height="24" fill="#404040" />
<rect x="76" y="512" width="3" height="11" fill="#404040" />
<rect x="81" y="518" width="1" height="16" fill="#12a8dc" />
<rect x="80" y="521" width="3" height="3" fill="#12a8dc" />
<rect x="81" y="522" width="1" height="1" fill="#fff" />
<rect x="85" y="521" width="1" height="23" fill="#404040" />
<rect x="84" y="522" width="3" height="13" fill="#404040" />
<rect x="89" y="531" width="1" height="27" fill="#404040" />
<rect x="88" y="534" width="3" height="21" fill="#404040" />
<rect x="93" y="526" width="1" height="35" fill="#12a8dc" />
<rect x="92" y="531" width="3" height="24" fill="#12a8dc" />
<rect x="93" y="532" width="1" height="22" fill="#fff" />
<rect x="97" y="515" width="1" height="24" fill="#404040" />
<rect x="96" y="531" width="3" height="7" fill="#404040" />
<rect x="101" y="532" width="1" height="21" fill="#404040" />
<rect x="100" y="536" width="3" height="12" fill="#404040" />
<rect x="105" y="529" width="1" height="19" fill="#12a8dc" />
<rect x="104" y="537" width="3" height="10" fill="#12a8dc" />
<rect x="105" y="538" width="1" height="8" fill="#fff" />
<rect x="109" y="524" width="1" height="20" fill="#12a8dc" />
<rect x="108" y="525" width="3" height="13" fill="#12a8dc" />
<rect x="109" y="526" width="1" height="11" fill="#fff" />
<rect x="113" y="513" width="1" height="16" fill="#12a8dc" />
<rect x="112" y="518" width="3" height="9" fill="#12a8dc" />
<rect x="113" y="519" width="1" height="7" fill="#fff" />
<rect x="117" y="516" width="1" height="6" fill="#404040" />
<rect x="116" y="517" width="3" height="4" fill="#404040" />
<rect x="121" y="515" width="1" height="9" fill="#12a8dc" />
<rect x="120" y="517" width="3" height="4" fill="#12a8dc" />
<rect x="121" y="518" width="1" height="2" fill="#fff" />
<rect x="125" y="515" width="1" height="5" fill="#12a8dc" />
<rect x="124" y="517" width="3" height="1" fill="#12a8dc" />
<rect x="129" y="511" width="1" height="8" fill="#12a8dc" />
<rect x="128" y="512" width="3" height="5" fill="#12a8dc" />
<rect x="129" y="513" width="1" height="3" fill="#fff" />
<rect x="133" y="508" width="1" height="10" fill="#404040" />
<rect x="132" y="512" width="3" height="4" fill="#404040" />
<rect x="137" y="514" width="1" height="13" fill="#404040" />
<rect x="136" y="515" width="3" height="11" fill="#404040" />
<rect x="141" y="513" width="1" height="16" fill="#12a8dc" />
<rect x="140" y="518" width="3" height="8" fill="#12a8dc" />
<rect x="141" y="519" width="1" height="6" fill="#fff" />
<rect x="145" y="500" width="1" height="19" fill="#12a8dc" />
<rect x="144" y="502" width="3" height="17" fill="#12a8dc" />
<rect x="145" y="503" width="1" height="15" fill="#fff" />
<rect x="149" y="501" width="1" height="6" fill="#404040" />
<rect x="148" y="502" width="3" height="3" fill="#404040" />
<rect x="153" y="501" width="1" height="13" fill="#404040" />
<rect x="152" y="504" width="3" height="7" fill="#404040" />
<rect x="157" y="500" width="1" height="15" fill="#12a8dc" />
<rect x="156" y="505" width="3" height="4" fill="#12a8dc" />
<rect x="157" y="506" width="1" height="2" fill="#fff" />
<rect x="161" y="491" width="1" height="18" fill="#12a8dc" />
<rect x="160" y="494" width="3" height="12" fill="#12a8dc" />
<rect x="161" y="495" width="1" height="10" fill="#fff" />
<rect x="165" y="493" width="1" height="18" fill="#404040" />
<rect x="164" y="494" width="3" height="4" fill="#404040" />
<rect x="169" y="483" width="1" height="19" fill="#12a8dc" />
<rect x="168" y="484" width="3" height="12" fill="#12a8dc" />
<rect x="169" y="485" width="1" height="10" fill="#fff" />
<rect x="173" y="476" width="1" height="13" fill="#12a8dc" />
<rect x="172" y="477" width="3" height="9" fill="#12a8dc" />
<rect x="173" y="478" width="1" height="7" fill="#fff" />
<rect x="177" y="474" width="1" height="12" fill="#12a8dc" />
<rect x="176" y="475" width="3" height="3" fill="#12a8dc" />
<rect x="177" y="476" width="1" height="1" fill="#fff" />
<rect x="181" y="473" width="1" height="13" fill="#404040" />
<rect x="180" y="475" width="3" height="8" fill="#404040" />
<rect x="185" y="481" width="1" height="30" fill="#404040" />
<rect x="184" y="482" width="3" height="18" fill="#404040" />
<rect x="189" y="492" width="1" height="25" fill="#404040" />
<rect x="188" y="499" width="3" height="17" fill="#404040" />
<rect x="193" y="511" width="1" height="12" fill="#404040" />
<rect x="192" y="514" width="3" height="1" fill="#404040" />
<rect x="197" y="504" width="1" height="12" fill="#12a8dc" />
<rect x="196" y="505" width="3" height="10" fill="#12a8dc" />
<rect x="197" y="506" width="1" height="8" fill="#fff" />
<rect x="201" y="504" width="1" height="6" fill="#404040" />
<rect x="200" y="505" width="3" height="4" fill="#404040" />
<rect x="205" y="501" width="1" height="10" fill="#12a8dc" />
<rect x="204" y="502" width="3" height="7" fill="#12a8dc" />
<rect x="205" y="503" width="1" height="5" fill="#fff" />
<rect x="209" y="496" width="1" height="9" fill="#12a8dc" />
<rect x="208" y="497" width="3" height="6" fill="#12a8dc" />
<rect x="209" y="498" width="1" height="4" fill="#fff" />
<rect x="213" y="495" width="1" height="6" fill="#404040" />
<rect x="212" y="497" width="3" height="3" fill="#404040" />
<rect x="217" y="497" width="1" height="4" fill="#12a8dc" />
<rect x="216" y="497" width="3" height="3" fill="#12a8dc" />
<rect x="217" y="498" width="1" height="1" fill="#fff" />
<rect x="221" y="497" width="1" height="7" fill="#404040" />
<rect x="220" y="497" width="3" height="6" fill="#404040" />
<rect x="225" y="493" width="1" height="10" fill="#12a8dc" />
<rect x="224" y="494" width="3" height="9" fill="#12a8dc" />
<rect x="225" y="495" width="1" height="7" fill="#fff" />
<rect x="229" y="490" width="1" height="10" fill="#12a8dc" />
<rect x="228" y="492" width="3" height="4" fill="#12a8dc" />
<rect x="229" y="493" width="1" height="2" fill="#fff" />
<rect x="233" y="487" width="1" height="18" fill="#404040" />
<rect x="232" y="491" width="3" height="13" fill="#404040" />
<rect x="237" y="501" width="1" height="9" fill="#404040" />
<rect x="236" y="502" width="3" height="6" fill="#404040" />
<rect x="241" y="501" width="1" height="8" fill="#404040" />
<rect x="240" y="505" width="3" height="2" fill="#404040" />
<rect x="245" y="504" width="1" height="12" fill="#404040" />
<rect x="244" y="506" width="3" height="6" fill="#404040" />
<rect x="249" y="504" width="1" height="12" fill="#12a8dc" />
<rect x="248" y="505" width="3" height="7" fill="#12a8dc" />
<rect x="249" y="506" width="1" height="5" fill="#fff" />
<rect x="253" y="497" width="1" height="11" fill="#12a8dc" />
<rect x="252" y="498" width="3" height="9" fill="#12a8dc" />
<rect x="253" y="499" width="1" height="7" fill="#fff" />
<rect x="257" y="488" width="1" height="22" fill="#404040" />
<rect x="256" y="497" width="3" height="10" fill="#404040" />
<rect x="261" y="486" width="1" height="37" fill="#404040" />
<rect x="260" y="505" width="3" height="7" fill="#404040" />
<rect x="265" y="507" width="1" height="15" fill="#404040" />
<rect x="264" y="511" width="3" height="10" fill="#404040" />
<rect x="269" y="516" width="1" height="14" fill="#404040" />
<rect x="268" y="519" width="3" height="4" fill="#404040" />
<rect x="273" y="508" width="1" height="22" fill="#12a8dc" />
<rect x="272" y="520" width="3" height="3" fill="#12a8dc" />
<rect x="273" y="521" width="1" height="1" fill="#fff" />
<rect x="277" y="517" width="1" height="14" fill="#12a8dc" />
<rect x="276" y="519" width="3" height="3" fill="#12a8dc" />
<rect x="277" y="520" width="1" height="1" fill="#fff" />
<rect x="281" y="508" width="1" height="19" fill="#12a8dc" />
<rect x="280" y="513" width="3" height="9" fill="#12a8dc" />
<rect x="281" y="514" width="1" height="7" fill="#fff" />
<rect x="285" y="512" width="1" height="13" fill="#404040" />
<rect x="284" y="513" width="3" height="10" fill="#404040" />
<rect x="289" y="516" width="1" height="10" fill="#404040" />
<rect x="288" y="518" width="3" height="5" fill="#404040" />
<rect x="293" y="516" width="1" height="14" fill="#404040" />
<rect x="292" y="518" width="3" height="9" fill="#404040" />
<rect x="297" y="526" width="1" height="21" fill="#404040" />
<rect x="296" y="527" width="3" height="14" fill="#404040" />
<rect x="301" y="540" width="1" height="9" fill="#404040" />
<rect x="300" y="541" width="3" height="1" fill="#404040" />
<rect x="305" y="538" width="1" height="6" fill="#12a8dc" />
<rect x="304" y="539" width="3" height="4" fill="#12a8dc" />
<rect x="305" y="540" width="1" height="2" fill="#fff" />
<rect x="309" y="538" width="1" height="8" fill="#404040" />
<rect x="308" y="539" width="3" height="6" fill="#404040" />
<rect x="313" y="541" width="1" height="9" fill="#404040" />
<rect x="312" y="544" width="3" height="3" fill="#404040" />
<rect x="317" y="544" width="1" height="7" fill="#12a8dc" />
<rect x="316" y="545" width="3" height="2" fill="#12a8dc" />
<rect x="321" y="540" width="1" height="10" fill="#404040" />
<rect x="320" y="544" width="3" height="2" fill="#404040" />
<rect x="325" y="542" width="1" height="18" fill="#404040" />
<rect x="324" y="543" width="3" height="15" fill="#404040" />
<rect x="329" y="553" width="1" height="8" fill="#12a8dc" />
<rect x="328" y="554" width="3" height="5" fill="#12a8dc" />
<rect x="329" y="555" width="1" height="3" fill="#fff" />
<rect x="333" y="545" width="1" height="12" fill="#12a8dc" />
<rect x="332" y="547" width="3" height="9" fill="#12a8dc" />
<rect x="333" y="548" width="1" height="7" fill="#fff" />
<rect x="337" y="544" width="1" height="7" fill="#12a8dc" />
<rect x="336" y="545" width="3" height="5" fill="#12a8dc" />
<rect x="337" y="546" width="1" height="3" fill="#fff" />
<rect x="341" y="543" width="1" height="6" fill="#404040" />
<rect x="340" y="544" width="3" height="4" fill="#404040" />
<rect x="345" y="540" width="1" height="12" fill="#12a8dc" />
<rect x="344" y="545" width="3" height="1" fill="#12a8dc" />
<rect x="349" y="540" width="1" height="19" fill="#12a8dc" />
<rect x="348" y="544" width="3" height="2" fill="#12a8dc" />
<rect x="353" y="535" width="1" height="18" fill="#12a8dc" />
<rect x="352" y="540" width="3" height="5" fill="#12a8dc" />
<rect x="353" y="541" width="1" height="3" fill="#fff" />
<rect x="357" y="534" width="1" height="30" fill="#404040" />
<rect x="356" y="540" width="3" height="22" fill="#404040" />
<rect x="361" y="549" width="1" height="13" fill="#12a8dc" />
<rect x="360" y="557" width="3" height="4" fill="#12a8dc" />
<rect x="361" y="558" width="1" height="2" fill="#fff" />
<rect x="365" y="551" width="1" height="20" fill="#404040" />
<rect x="364" y="557" width="3" height="9" fill="#404040" />
<rect x="369" y="561" width="1" height="21" fill="#404040" />
<rect x="368" y="565" width="3" height="8" fill="#404040" />
<rect x="373" y="565" width="1" height="21" fill="#404040" />
<rect x="372" y="570" width="3" height="13" fill="#404040" />
<rect x="377" y="576" width="1" height="8" fill="#12a8dc" />
<rect x="376" y="579" width="3" height="4" fill="#12a8dc" />
<rect x="377" y="580" width="1" height="2" fill="#fff" />
<rect x="381" y="574" width="1" height="16" fill="#12a8dc" />
<rect x="380" y="575" width="3" height="12" fill="#12a8dc" />
<rect x="381" y="576" width="1" height="10" fill="#fff" />
<rect x="385" y="570" width="1" height="7" fill="#12a8dc" />
<rect x="384" y="572" width="3" height="4" fill="#12a8dc" />
<rect x="385" y="573" width="1" height="2" fill="#fff" />
<rect x="389" y="565" width="1" height="11" fill="#12a8dc" />
<rect x="388" y="569" width="3" height="6" fill="#12a8dc" />
<rect x="389" y="570" width="1" height="4" fill="#fff" />
<rect x="393" y="565" width="1" height="8" fill="#12a8dc" />
<rect x="392" y="566" width="3" height="5" fill="#12a8dc" />
<rect x="393" y="567" width="1" height="3" fill="#fff" />
<rect x="397" y="565" width="1" height="7" fill="#404040" />
<rect x="396" y="566" width="3" height="4" fill="#404040" />
<rect x="401" y="566" width="1" height="6" fill="#12a8dc" />
<rect x="400" y="566" width="3" height="4" fill="#12a8dc" />
<rect x="401" y="567" width="1" height="2" fill="#fff" />
<rect x="405" y="566" width="1" height="4" fill="#404040" />
<rect x="404" y="567" width="3" height="1" fill="#404040" />
<rect x="409" y="566" width="1" height="4" fill="#404040" />
<rect x="408" y="566" width="3" height="3" fill="#404040" />
<rect x="413" y="566" width="1" height="12" fill="#404040" />
<rect x="412" y="568" width="3" height="9" fill="#404040" />
<rect x="417" y="572" width="1" height="12" fill="#12a8dc" />
<rect x="416" y="573" width="3" height="5" fill="#12a8dc" />
<rect x="417" y="574" width="1" height="3" fill="#fff" />
<rect x="421" y="572" width="1" height="7" fill="#404040" />
<rect x="420" y="573" width="3" height="4" fill="#404040" />
<rect x="425" y="568" width="1" height="10" fill="#404040" />
<rect x="424" y="574" width="3" height="3" fill="#404040" />
<rect x="429" y="574" width="1" height="10" fill="#404040" />
<rect x="428" y="575" width="3" height="7" fill="#404040" />
<rect x="433" y="578" width="1" height="10" fill="#404040" />
<rect x="432" y="580" width="3" height="6" fill="#404040" />
<rect x="437" y="582" width="1" height="12" fill="#404040" />
<rect x="436" y="584" width="3" height="9" fill="#404040" />
<rect x="441" y="586" width="1" height="33" fill="#404040" />
<rect x="440" y="591" width="3" height="15" fill="#404040" />
<rect x="445" y="581" width="1" height="27" fill="#12a8dc" />
<rect x="444" y="585" width="3" height="21" fill="#12a8dc" />
<rect x="445" y="586" width="1" height="19" fill="#fff" />
<rect x="449" y="572" width="1" height="16" fill="#12a8dc" />
<rect x="448" y="573" width="3" height="14" fill="#12a8dc" />
<rect x="449" y="574" width="1" height="12" fill="#fff" />
<rect x="453" y="569" width="1" height="35" fill="#404040" />
<rect x="452" y="573" width="3" height="30" fill="#404040" />
<rect x="457" y="597" width="1" height="26" fill="#404040" />
<rect x="456" y="600" width="3" height="22" fill="#404040" />
<rect x="461" y="618" width="1" height="17" fill="#404040" />
<rect x="460" y="621" width="3" height="9" fill="#404040" />
<rect x="465" y="627" width="1" height="31" fill="#404040" />
<rect x="464" y="628" width="3" height="9" fill="#404040" />
<rect x="469" y="628" width="1" height="11" fill="#12a8dc" />
<rect x="468" y="629" width="3" height="9" fill="#12a8dc" />
<rect x="469" y="630" width="1" height="7" fill="#fff" />
<rect x="473" y="621" width="1" height="11" fill="#12a8dc" />
<rect x="472" y="622" width="3" height="8" fill="#12a8dc" />
<rect x="473" y="623" width="1" height="6" fill="#fff" />
<rect x="477" y="621" width="1" height="8" fill="#404040" />
<rect x="476" y="622" width="3" height="2" fill="#404040" />
<rect x="481" y="616" width="1" height="10" fill="#12a8dc" />
<rect x="480" y="617" width="3" height="6" fill="#12a8dc" />
<rect x="481" y="618" width="1" height="4" fill="#fff" />
<rect x="485" y="616" width="1" height="7" fill="#404040" />
<rect x="484" y="617" width="3" height="6" fill="#404040" />
<rect x="489" y="620" width="1" height="12" fill="#404040" />
<rect x="488" y="621" width="3" height="6" fill="#404040" />
<rect x="493" y="618" width="1" height="12" fill="#404040" />
<rect x="492" y="626" width="3" height="3" fill="#404040" />
<rect x="497" y="626" width="1" height="8" fill="#404040" />
<rect x="496" y="628" width="3" height="5" fill="#404040" />
<rect x="501" y="624" width="1" height="8" fill="#12a8dc" />
<rect x="500" y="625" width="3" height="7" fill="#12a8dc" />
<rect x="501" y="626" width="1" height="5" fill="#fff" />
<rect x="505" y="620" width="1" height="12" fill="#12a8dc" />
<rect x="504" y="623" width="3" height="4" fill="#12a8dc" />
<rect x="505" y="624" width="1" height="2" fill="#fff" />
<rect x="509" y="621" width="1" height="11" fill="#12a8dc" />
<rect x="508" y="622" width="3" height="3" fill="#12a8dc" />
<rect x="509" y="623" width="1" height="1" fill="#fff" />
<rect x="513" y="618" width="1" height="12" fill="#12a8dc" />
<rect x="512" y="618" width="3" height="7" fill="#12a8dc" />
<rect x="513" y="619" width="1" height="5" fill="#fff" />
<rect x="517" y="614" width="1" height="11" fill="#404040" />
<rect x="516" y="619" width="3" height="5" fill="#404040" />
<rect x="521" y="614" width="1" height="10" fill="#12a8dc" />
<rect x="520" y="617" width="3" height="6" fill="#12a8dc" />
<rect x="521" y="618" width="1" height="4" fill="#fff" />
<rect x="525" y="610" width="1" height="11" fill="#12a8dc" />
<rect x="524" y="611" width="3" height="7" fill="#12a8dc" />
<rect x="525" y="612" width="1" height="5" fill="#fff" />
<rect x="529" y="608" width="1" height="11" fill="#404040" />
<rect x="528" y="610" width="3" height="8" fill="#404040" />
<rect x="533" y="615" width="1" height="4" fill="#12a8dc" />
<rect x="532" y="616" width="3" height="2" fill="#12a8dc" />
</g>
</g>
<path d="M17 468 l7 0 l-3.5 4.5z" fill="#303030"/>
<text x="28" y="474" font-size="9.5" fill="#404040" text-anchor="start" textLength="225" lengthAdjust="spacingAndGlyphs" >.USTECHCash,H1  6498.00 6500.75 6496.50 6499.88</text>
<text x="17" y="487" font-size="9.5" fill="#404040" text-anchor="start" textLength="60" lengthAdjust="spacingAndGlyphs" >MBFX System</text>
<text x="367.5" y="507.5" font-size="13" fill="#a0a0a0" text-anchor="start" textLength="22" lengthAdjust="spacingAndGlyphs" >Text</text>
<text x="538.6" y="492.2" font-size="10.5" fill="#8a8a8a" text-anchor="start" >D_R3 6927.9133</text>
<text x="492.4" y="507.3" font-size="10.5" fill="#8a8a8a" text-anchor="start" >W_R1 6949.3500</text>
<text x="538.6" y="533.8" font-size="10.5" fill="#8a8a8a" text-anchor="start" >D_R2 6880.7667</text>
<text x="487.3" y="560.6" font-size="10.5" fill="#8a8a8a" text-anchor="start" >W_Pivot 6753.4000</text>
<text x="493.2" y="616.2" font-size="10.5" fill="#8a8a8a" text-anchor="start" >M_S1 6525.5200</text>
<text x="535.5" y="624.7" font-size="10.5" fill="#8a8a8a" text-anchor="start" >D_Pivot 6767.1467</text>
<text x="492.4" y="638" font-size="10.5" fill="#8a8a8a" text-anchor="start" >W_S1 6365.8500</text>
<rect x="544.5" y="554.0" width="41" height="11" fill="none" stroke="#ff0000" shape-rendering="crispEdges"/>
<text x="546" y="563.5" font-size="11" fill="#ff0000" text-anchor="start" textLength="38" lengthAdjust="spacingAndGlyphs" >6645.67</text>
<rect x="544.5" y="574.3" width="41" height="11" fill="none" stroke="#ff0000" shape-rendering="crispEdges"/>
<text x="546" y="583.8" font-size="11" fill="#ff0000" text-anchor="start" textLength="38" lengthAdjust="spacingAndGlyphs" >6595.25</text>
<rect x="544.5" y="593.9" width="41" height="11" fill="none" stroke="#707070" shape-rendering="crispEdges"/>
<text x="546" y="603.4" font-size="11" fill="#707070" text-anchor="start" textLength="38" lengthAdjust="spacingAndGlyphs" >6544.84</text>
<rect x="544.5" y="626.9" width="41" height="11" fill="none" stroke="#0000ff" shape-rendering="crispEdges"/>
<text x="546" y="636.4" font-size="11" fill="#0000ff" text-anchor="start" textLength="38" lengthAdjust="spacingAndGlyphs" >6463.28</text>
<g shape-rendering="crispEdges">
<rect x="12" y="462" width="800" height="1" fill="#404040" />
<rect x="12" y="661" width="800" height="1" fill="#404040" />
<rect x="12" y="462" width="1" height="200" fill="#404040" />
<rect x="12" y="663" width="800" height="1" fill="#404040" />
<rect x="12" y="745" width="800" height="1" fill="#404040" />
<rect x="12" y="663" width="1" height="83" fill="#404040" />
<rect x="12" y="747" width="800" height="1" fill="#404040" />
<rect x="12" y="829" width="800" height="1" fill="#404040" />
<rect x="12" y="747" width="1" height="83" fill="#404040" />
<rect x="811" y="462" width="1" height="368" fill="#404040" />
<rect x="812" y="559" width="3" height="1" fill="#404040" />
<rect x="812" y="592" width="3" height="1" fill="#404040" />
<rect x="812" y="658" width="3" height="1" fill="#404040" />
<line x1="13" y1="680.5" x2="811" y2="680.5" stroke="#b0b0b0" stroke-width="1" stroke-dasharray="3 3" />
<line x1="13" y1="728.5" x2="811" y2="728.5" stroke="#b0b0b0" stroke-width="1" stroke-dasharray="3 3" />
<line x1="13" y1="772.5" x2="811" y2="772.5" stroke="#b0b0b0" stroke-width="1" stroke-dasharray="3 3" />
<line x1="13" y1="788.5" x2="811" y2="788.5" stroke="#b0b0b0" stroke-width="1" stroke-dasharray="3 3" />
<line x1="13" y1="804.5" x2="811" y2="804.5" stroke="#b0b0b0" stroke-width="1" stroke-dasharray="3 3" />
</g>
<g shape-rendering="crispEdges">
<rect x="811" y="469" width="2" height="4" fill="#add8e6" />
<rect x="811" y="548" width="2" height="4" fill="#add8e6" />
<rect x="811" y="479" width="2" height="4" fill="#ff0000" />
<rect x="811" y="494" width="2" height="4" fill="#ff0000" />
<rect x="811" y="521" width="2" height="4" fill="#ff0000" />
<rect x="811" y="570" width="2" height="4" fill="#ff0000" />
<rect x="811" y="604" width="2" height="4" fill="#0000ff" />
<rect x="811" y="612" width="2" height="4" fill="#add8e6" />
<rect x="811" y="625" width="2" height="4" fill="#0000ff" />
</g>
<text x="817" y="530.5" font-size="9.5" fill="#404040" text-anchor="start" textLength="33" lengthAdjust="spacingAndGlyphs" >6731.80</text>
<text x="817" y="562.9" font-size="9.5" fill="#404040" text-anchor="start" textLength="33" lengthAdjust="spacingAndGlyphs" >6646.80</text>
<text x="817" y="595.7" font-size="9.5" fill="#404040" text-anchor="start" textLength="33" lengthAdjust="spacingAndGlyphs" >6561.80</text>
<text x="817" y="661.5" font-size="9.5" fill="#404040" text-anchor="start" textLength="33" lengthAdjust="spacingAndGlyphs" >6394.30</text>
<rect x="813" y="615" width="41" height="11" fill="#3a3a3a" shape-rendering="crispEdges"/>
<text x="817" y="624" font-size="9.5" fill="#fff" text-anchor="start" textLength="33" lengthAdjust="spacingAndGlyphs" >6499.88</text>
<rect x="813" y="609" width="41" height="10" fill="#add8e6" shape-rendering="crispEdges"/>
<text x="817" y="617.4" font-size="9.5" fill="#fff" text-anchor="start" textLength="33" lengthAdjust="spacingAndGlyphs" >6505.66</text>
<rect x="813" y="466" width="41" height="10" fill="#add8e6" shape-rendering="crispEdges"/>
<text x="817" y="474.4" font-size="9.5" fill="#fff" text-anchor="start" textLength="33" lengthAdjust="spacingAndGlyphs" >6872.05</text>
<rect x="813" y="545" width="41" height="10" fill="#add8e6" shape-rendering="crispEdges"/>
<text x="817" y="553.4" font-size="9.5" fill="#fff" text-anchor="start" textLength="33" lengthAdjust="spacingAndGlyphs" >6669.85</text>
<rect x="813" y="476" width="41" height="10" fill="#ff0000" shape-rendering="crispEdges"/>
<text x="817" y="484.4" font-size="9.5" fill="#fff" text-anchor="start" textLength="33" lengthAdjust="spacingAndGlyphs" >6845.71</text>
<rect x="813" y="491" width="41" height="10" fill="#ff0000" shape-rendering="crispEdges"/>
<text x="817" y="499.4" font-size="9.5" fill="#fff" text-anchor="start" textLength="33" lengthAdjust="spacingAndGlyphs" >6807.27</text>
<rect x="813" y="518" width="41" height="10" fill="#ff0000" shape-rendering="crispEdges"/>
<text x="817" y="526.4" font-size="9.5" fill="#fff" text-anchor="start" textLength="33" lengthAdjust="spacingAndGlyphs" >6738.66</text>
<rect x="813" y="567" width="41" height="10" fill="#ff0000" shape-rendering="crispEdges"/>
<text x="817" y="575.4" font-size="9.5" fill="#fff" text-anchor="start" textLength="33" lengthAdjust="spacingAndGlyphs" >6612.71</text>
<rect x="813" y="601" width="41" height="10" fill="#0000ff" shape-rendering="crispEdges"/>
<text x="817" y="609.4" font-size="9.5" fill="#fff" text-anchor="start" textLength="33" lengthAdjust="spacingAndGlyphs" >6525.52</text>
<rect x="813" y="621" width="41" height="11" fill="#0000ff" shape-rendering="crispEdges"/>
<text x="817" y="630.4" font-size="9.5" fill="#fff" text-anchor="start" textLength="33" lengthAdjust="spacingAndGlyphs" >6471.57</text>
<text x="815.5" y="674.2" font-size="9.5" fill="#404040" text-anchor="start" >100</text>
<text x="815.5" y="684.2" font-size="9.5" fill="#404040" text-anchor="start" >80</text>
<text x="815.5" y="732.2" font-size="9.5" fill="#404040" text-anchor="start" >20</text>
<text x="815.5" y="742.2" font-size="9.5" fill="#404040" text-anchor="start" >0</text>
<text x="815.5" y="757.9" font-size="9.5" fill="#404040" text-anchor="start" >100</text>
<text x="815.5" y="776.2" font-size="9.5" fill="#404040" text-anchor="start" >70</text>
<text x="815.5" y="791.9" font-size="9.5" fill="#404040" text-anchor="start" >50</text>
<text x="815.5" y="807.9" font-size="9.5" fill="#404040" text-anchor="start" >30</text>
<text x="815.5" y="825.9" font-size="9.5" fill="#404040" text-anchor="start" >0</text>
<g clip-path="url(#ch1s)">
<polyline points="13.1,702.2 17.4,723.1 21.6,718.3 29.5,722.2 33.8,704.8 41.6,687.8 45.2,710.0 49.5,719.8 51.3,700.2 53.0,675.3 55.0,668.1 57.6,668.5 61.5,677.3 65.4,671.4 70.0,674.0 71.7,692.4 75.3,713.3 77.5,731.6 81.4,720.5 85.7,729.7 89.4,740.8 92.9,695.0 94.0,690.4 97.5,705.4 101.4,723.1 104.7,709.4 112.6,675.3 116.5,679.3 120.0,675.3 125.7,680.1 130.0,675.6 136.6,729.3 137.7,740.1 145.7,673.6 154.3,691.6 157.7,689.3 161.4,675.0 165.7,685.9 170.9,668.7 178.6,667.9 182.9,702.1 188.6,741.3 194.3,728.7 197.7,710.7 201.4,707.9 205.7,667.0 210.9,667.9 214.3,683.0 217.7,675.6 221.4,722.1 225.7,673.6 229.4,665.9 233.7,737.9 240.0,736.4 245.1,736.4 252.9,669.3 257.7,718.4 261.4,720.7 266.3,737.9 274.3,726.4 281.4,685.9 285.7,713.6 289.1,707.9 294.3,738.4 305.1,724.1 310.0,732.1 312.9,735.0 317.7,712.1 321.4,713.6 325.7,740.7 331.4,712.1 337.1,680.1 342.9,683.0 350.0,680.1 354.3,696.4 357.7,738.4 361.4,729.9 365.7,736.4 369.1,729.9 373.7,737.9 378.6,732.1 382.9,703.6 393.7,667.9 397.7,700.1 401.4,677.3 405.7,687.9 413.7,742.1 417.7,699.3 425.7,715.0 430.0,729.9 433.1,737.9 437.3,737.9 441.6,723.6 448.7,665.9 457.3,743.0 461.6,737.9 468.7,710.7 474.4,671.6 477.3,667.0 481.6,666.4 487.3,709.3 492.4,730.7 497.3,735.0 501.0,697.9 507.9,683.6 513.6,668.7 517.3,697.3 525.0,671.6 529.6,712.1 532.4,711.6" fill="none" stroke="#20b2aa" stroke-width="1" stroke-linejoin="round" shape-rendering="crispEdges" />
<polyline points="13.1,702.2 17.4,723.1 21.6,718.3 29.5,722.2 33.8,704.8 41.6,687.8 45.2,710.0 49.5,719.8 51.3,700.2 53.0,675.3 55.0,668.1 57.6,668.5 61.5,677.3 65.4,671.4 70.0,674.0 71.7,692.4 75.3,713.3 77.5,731.6 81.4,720.5 85.7,729.7 89.4,740.8 92.9,695.0 94.0,690.4 97.5,705.4 101.4,723.1 104.7,709.4 112.6,675.3 116.5,679.3 120.0,675.3 125.7,680.1 130.0,675.6 136.6,729.3 137.7,740.1 145.7,673.6 154.3,691.6 157.7,689.3 161.4,675.0 165.7,685.9 170.9,668.7 178.6,667.9 182.9,702.1 188.6,741.3 194.3,728.7 197.7,710.7 201.4,707.9 205.7,667.0 210.9,667.9 214.3,683.0 217.7,675.6 221.4,722.1 225.7,673.6 229.4,665.9 233.7,737.9 240.0,736.4 245.1,736.4 252.9,669.3 257.7,718.4 261.4,720.7 266.3,737.9 274.3,726.4 281.4,685.9 285.7,713.6 289.1,707.9 294.3,738.4 305.1,724.1 310.0,732.1 312.9,735.0 317.7,712.1 321.4,713.6 325.7,740.7 331.4,712.1 337.1,680.1 342.9,683.0 350.0,680.1 354.3,696.4 357.7,738.4 361.4,729.9 365.7,736.4 369.1,729.9 373.7,737.9 378.6,732.1 382.9,703.6 393.7,667.9 397.7,700.1 401.4,677.3 405.7,687.9 413.7,742.1 417.7,699.3 425.7,715.0 430.0,729.9 433.1,737.9 437.3,737.9 441.6,723.6 448.7,665.9 457.3,743.0 461.6,737.9 468.7,710.7 474.4,671.6 477.3,667.0 481.6,666.4 487.3,709.3 492.4,730.7 497.3,735.0 501.0,697.9 507.9,683.6 513.6,668.7 517.3,697.3 525.0,671.6 529.6,712.1 532.4,711.6" fill="none" stroke="#ff0000" stroke-width="1" stroke-linejoin="round" stroke-dasharray="3 3" shape-rendering="crispEdges" />
</g>
<text x="17" y="676" font-size="9.5" fill="#404040" text-anchor="start" textLength="121.5" lengthAdjust="spacingAndGlyphs" >Stoch(4,1,1) 42.0396 42.0396</text>
<polyline points="12.9,783.6 17.7,785.0 28.6,785.0 49.1,783.6 58.6,772.1 68.6,767.0 75.7,779.3 81.4,779.3 89.1,795.6 93.7,786.4 101.4,791.6 112.9,782.1 122.9,782.1 131.4,780.1 137.7,786.4 145.7,779.3 154.3,782.1 164.3,777.3 168.6,777.9 177.1,772.1 182.9,777.3 188.6,790.7 194.3,791.6 198.6,787.0 202.9,787.0 210.0,784.1 217.7,785.0 221.4,785.9 228.6,782.1 233.7,787.9 245.7,792.1 252.9,785.9 258.6,790.7 267.1,795.6 275.7,795.0 281.4,791.6 285.7,795.0 290.0,794.4 297.1,802.1 300.6,803.0 305.1,801.3 312.9,804.1 317.7,802.1 325.7,807.0 337.1,797.3 350.0,795.6 354.3,793.6 357.7,803.6 361.4,800.7 369.1,805.9 374.9,808.7 382.9,803.6 393.7,797.3 401.4,796.4 405.7,796.4 413.7,801.3 417.7,797.9 425.7,800.1 433.1,803.6 441.6,811.6 449.3,789.9 454.4,800.7 460.1,805.0 465.0,807.3 473.0,800.7 477.3,800.1 481.6,797.9 487.3,799.3 492.4,800.7 497.3,802.1 501.0,798.4 505.9,797.9 513.6,795.0 517.3,795.6 525.0,788.7 529.6,793.6 532.4,792.1" fill="none" stroke="#000" stroke-width="1" stroke-linejoin="round" shape-rendering="crispEdges" />
<text x="17" y="760" font-size="9.5" fill="#404040" text-anchor="start" textLength="67.5" lengthAdjust="spacingAndGlyphs" >RSI(14) 45.2989</text>
<rect x="13" y="830" width="1" height="3" fill="#404040" shape-rendering="crispEdges"/>
<text x="12" y="842" font-size="9.5" fill="#404040" text-anchor="start" textLength="51.445327734375" lengthAdjust="spacingAndGlyphs" >10 Dec 2018</text>
<rect x="77" y="830" width="1" height="3" fill="#404040" shape-rendering="crispEdges"/>
<text x="76" y="842" font-size="9.5" fill="#404040" text-anchor="start" textLength="53.292432031249994" lengthAdjust="spacingAndGlyphs" >11 Dec 15:00</text>
<rect x="141" y="830" width="1" height="3" fill="#404040" shape-rendering="crispEdges"/>
<text x="140" y="842" font-size="9.5" fill="#404040" text-anchor="start" textLength="53.965781640624996" lengthAdjust="spacingAndGlyphs" >12 Dec 08:00</text>
<rect x="205" y="830" width="1" height="3" fill="#404040" shape-rendering="crispEdges"/>
<text x="204" y="842" font-size="9.5" fill="#404040" text-anchor="start" textLength="53.965781640624996" lengthAdjust="spacingAndGlyphs" >13 Dec 01:00</text>
<rect x="269" y="830" width="1" height="3" fill="#404040" shape-rendering="crispEdges"/>
<text x="268" y="842" font-size="9.5" fill="#404040" text-anchor="start" textLength="53.965781640624996" lengthAdjust="spacingAndGlyphs" >13 Dec 18:00</text>
<rect x="333" y="830" width="1" height="3" fill="#404040" shape-rendering="crispEdges"/>
<text x="332" y="842" font-size="9.5" fill="#404040" text-anchor="start" textLength="53.292432031249994" lengthAdjust="spacingAndGlyphs" >14 Dec 11:00</text>
<rect x="397" y="830" width="1" height="3" fill="#404040" shape-rendering="crispEdges"/>
<text x="396" y="842" font-size="9.5" fill="#404040" text-anchor="start" textLength="53.965781640624996" lengthAdjust="spacingAndGlyphs" >17 Dec 03:00</text>
<rect x="461" y="830" width="1" height="3" fill="#404040" shape-rendering="crispEdges"/>
<text x="460" y="842" font-size="9.5" fill="#404040" text-anchor="start" textLength="53.965781640624996" lengthAdjust="spacingAndGlyphs" >17 Dec 19:00</text>
<rect x="525" y="830" width="1" height="3" fill="#404040" shape-rendering="crispEdges"/>
<text x="524" y="842" font-size="9.5" fill="#404040" text-anchor="start" textLength="53.965781640624996" lengthAdjust="spacingAndGlyphs" >18 Dec 12:00</text>
</g>
<g id="d1">
<clipPath id="cd1"><rect x="877" y="463" width="798" height="257"/></clipPath>
<clipPath id="cd1r"><rect x="877" y="724" width="798" height="105"/></clipPath>
<g clip-path="url(#cd1)">
<g shape-rendering="crispEdges">
<rect x="877" y="709" width="1" height="11" fill="#12a8dc" />
<rect x="881" y="709" width="1" height="11" fill="#12a8dc" />
<rect x="889" y="711" width="1" height="9" fill="#12a8dc" />
<rect x="893" y="708" width="1" height="12" fill="#12a8dc" />
<rect x="897" y="709" width="1" height="11" fill="#12a8dc" />
<rect x="901" y="707" width="1" height="13" fill="#12a8dc" />
<rect x="905" y="705" width="1" height="15" fill="#12a8dc" />
<rect x="913" y="705" width="1" height="15" fill="#12a8dc" />
<rect x="917" y="707" width="1" height="13" fill="#12a8dc" />
<rect x="921" y="707" width="1" height="13" fill="#12a8dc" />
<rect x="925" y="707" width="1" height="13" fill="#12a8dc" />
<rect x="929" y="710" width="1" height="10" fill="#12a8dc" />
<rect x="937" y="712" width="1" height="8" fill="#12a8dc" />
<rect x="941" y="712" width="1" height="8" fill="#12a8dc" />
<rect x="945" y="713" width="1" height="7" fill="#12a8dc" />
<rect x="949" y="713" width="1" height="7" fill="#12a8dc" />
<rect x="953" y="709" width="1" height="11" fill="#12a8dc" />
<rect x="961" y="708" width="1" height="12" fill="#12a8dc" />
<rect x="965" y="711" width="1" height="9" fill="#12a8dc" />
<rect x="969" y="705" width="1" height="15" fill="#12a8dc" />
<rect x="973" y="710" width="1" height="10" fill="#12a8dc" />
<rect x="977" y="709" width="1" height="11" fill="#12a8dc" />
<rect x="985" y="711" width="1" height="9" fill="#12a8dc" />
<rect x="989" y="712" width="1" height="8" fill="#12a8dc" />
<rect x="993" y="711" width="1" height="9" fill="#12a8dc" />
<rect x="997" y="712" width="1" height="8" fill="#12a8dc" />
<rect x="1001" y="713" width="1" height="7" fill="#12a8dc" />
<rect x="1009" y="714" width="1" height="6" fill="#12a8dc" />
<rect x="1013" y="713" width="1" height="7" fill="#12a8dc" />
<rect x="1017" y="714" width="1" height="6" fill="#12a8dc" />
<rect x="1021" y="710" width="1" height="10" fill="#12a8dc" />
<rect x="1025" y="711" width="1" height="9" fill="#12a8dc" />
<rect x="1033" y="718" width="1" height="2" fill="#12a8dc" />
<rect x="1037" y="709" width="1" height="11" fill="#12a8dc" />
<rect x="1041" y="707" width="1" height="13" fill="#12a8dc" />
<rect x="1045" y="705" width="1" height="15" fill="#12a8dc" />
<rect x="1049" y="704" width="1" height="16" fill="#12a8dc" />
<rect x="1057" y="708" width="1" height="12" fill="#12a8dc" />
<rect x="1061" y="709" width="1" height="11" fill="#12a8dc" />
<rect x="1065" y="706" width="1" height="14" fill="#12a8dc" />
<rect x="1069" y="710" width="1" height="10" fill="#12a8dc" />
<rect x="1073" y="712" width="1" height="8" fill="#12a8dc" />
<rect x="1081" y="710" width="1" height="10" fill="#12a8dc" />
<rect x="1085" y="709" width="1" height="11" fill="#12a8dc" />
<rect x="1089" y="711" width="1" height="9" fill="#12a8dc" />
<rect x="1093" y="712" width="1" height="8" fill="#12a8dc" />
<rect x="1097" y="711" width="1" height="9" fill="#12a8dc" />
<rect x="1105" y="709" width="1" height="11" fill="#12a8dc" />
<rect x="1109" y="711" width="1" height="9" fill="#12a8dc" />
<rect x="1113" y="710" width="1" height="10" fill="#12a8dc" />
<rect x="1117" y="711" width="1" height="9" fill="#12a8dc" />
<rect x="1121" y="709" width="1" height="11" fill="#12a8dc" />
<rect x="1129" y="711" width="1" height="9" fill="#12a8dc" />
<rect x="1133" y="708" width="1" height="12" fill="#12a8dc" />
<rect x="1137" y="709" width="1" height="11" fill="#12a8dc" />
<rect x="1141" y="703" width="1" height="17" fill="#12a8dc" />
<rect x="1145" y="700" width="1" height="20" fill="#12a8dc" />
<rect x="1153" y="699" width="1" height="21" fill="#12a8dc" />
<rect x="1157" y="701" width="1" height="19" fill="#12a8dc" />
<rect x="1161" y="692" width="1" height="28" fill="#12a8dc" />
<rect x="1165" y="689" width="1" height="31" fill="#12a8dc" />
<rect x="1169" y="698" width="1" height="22" fill="#12a8dc" />
<rect x="1177" y="699" width="1" height="21" fill="#12a8dc" />
<rect x="1181" y="703" width="1" height="17" fill="#12a8dc" />
<rect x="1185" y="698" width="1" height="22" fill="#12a8dc" />
<rect x="1189" y="698" width="1" height="22" fill="#12a8dc" />
<rect x="1193" y="698" width="1" height="22" fill="#12a8dc" />
<rect x="1201" y="696" width="1" height="24" fill="#12a8dc" />
<rect x="1205" y="693" width="1" height="27" fill="#12a8dc" />
<rect x="1209" y="692" width="1" height="28" fill="#12a8dc" />
<rect x="1213" y="693" width="1" height="27" fill="#12a8dc" />
<rect x="1217" y="689" width="1" height="31" fill="#12a8dc" />
<rect x="1225" y="692" width="1" height="28" fill="#12a8dc" />
<rect x="1229" y="692" width="1" height="28" fill="#12a8dc" />
<rect x="1233" y="693" width="1" height="27" fill="#12a8dc" />
<rect x="1237" y="695" width="1" height="25" fill="#12a8dc" />
<rect x="1241" y="694" width="1" height="26" fill="#12a8dc" />
<rect x="1249" y="700" width="1" height="20" fill="#12a8dc" />
<rect x="1253" y="701" width="1" height="19" fill="#12a8dc" />
<rect x="1257" y="697" width="1" height="23" fill="#12a8dc" />
<rect x="1261" y="700" width="1" height="20" fill="#12a8dc" />
<rect x="1265" y="699" width="1" height="21" fill="#12a8dc" />
<rect x="1273" y="695" width="1" height="25" fill="#12a8dc" />
<rect x="1277" y="696" width="1" height="24" fill="#12a8dc" />
<rect x="1281" y="696" width="1" height="24" fill="#12a8dc" />
<rect x="1285" y="695" width="1" height="25" fill="#12a8dc" />
<rect x="1289" y="697" width="1" height="23" fill="#12a8dc" />
<rect x="1297" y="696" width="1" height="24" fill="#12a8dc" />
<rect x="1301" y="695" width="1" height="25" fill="#12a8dc" />
<rect x="1305" y="694" width="1" height="26" fill="#12a8dc" />
<rect x="1309" y="697" width="1" height="23" fill="#12a8dc" />
<rect x="1313" y="708" width="1" height="12" fill="#12a8dc" />
<rect x="1321" y="699" width="1" height="21" fill="#12a8dc" />
<rect x="1325" y="700" width="1" height="20" fill="#12a8dc" />
<rect x="1329" y="699" width="1" height="21" fill="#12a8dc" />
<rect x="1333" y="701" width="1" height="19" fill="#12a8dc" />
<rect x="1337" y="700" width="1" height="20" fill="#12a8dc" />
<rect x="1345" y="699" width="1" height="21" fill="#12a8dc" />
<rect x="1349" y="692" width="1" height="28" fill="#12a8dc" />
<rect x="1353" y="716" width="1" height="4" fill="#12a8dc" />
<rect x="1357" y="690" width="1" height="30" fill="#12a8dc" />
<rect x="1361" y="692" width="1" height="28" fill="#12a8dc" />
<rect x="1369" y="693" width="1" height="27" fill="#12a8dc" />
<rect x="1373" y="697" width="1" height="23" fill="#12a8dc" />
<rect x="1377" y="699" width="1" height="21" fill="#12a8dc" />
<rect x="1381" y="700" width="1" height="20" fill="#12a8dc" />
<rect x="1385" y="705" width="1" height="15" fill="#12a8dc" />
<rect x="1393" y="717" width="1" height="3" fill="#12a8dc" />
<rect x="1397" y="718" width="1" height="2" fill="#12a8dc" />
</g>
<g shape-rendering="crispEdges">
<line x1="877" y1="679.5" x2="1675" y2="679.5" stroke="#12a8dc" stroke-width="1" stroke-dasharray="9 4 2 4" />
<line x1="877" y1="689.5" x2="1675" y2="689.5" stroke="#ff0000" stroke-width="1" />
<line x1="877" y1="691.5" x2="1675" y2="691.5" stroke="#ff0000" stroke-width="1" stroke-dasharray="9 4 2 4" />
<line x1="877" y1="694.5" x2="1675" y2="694.5" stroke="#12a8dc" stroke-width="1" stroke-dasharray="9 4 2 4" />
<line x1="877" y1="697.5" x2="1675" y2="697.5" stroke="#ff0000" stroke-width="1" stroke-dasharray="9 4 2 4" />
</g>
<polyline points="918.4,464.8 920.2,462.7 922.7,459.8 925.8,456.4 929.1,452.8 932.4,449.2 934.8,446.6 937.4,443.9 940.1,441.1 942.8,438.2 945.6,435.5 948.4,432.8 951.1,430.5 953.8,428.3 956.5,426.3 959.1,424.5 961.8,422.7 964.5,421.1 967.2,419.5 969.8,418.0 972.5,416.5 975.2,415.2 977.9,413.9 980.5,412.7 983.2,411.6 985.9,410.5 988.5,409.4 991.2,408.4 993.9,407.4 996.6,406.5 999.2,405.7 1001.9,404.9 1004.6,404.2 1007.3,403.6 1010.0,403.2 1012.7,402.8 1015.4,402.6 1018.2,402.4 1020.9,402.3 1023.5,402.2 1026.0,402.1 1028.7,402.0 1031.1,402.0 1033.5,402.0 1035.9,402.1 1038.6,402.4 1041.6,402.7 1044.1,403.1 1046.9,403.5 1049.8,403.9 1052.8,404.4 1055.9,405.0 1058.9,405.7 1062.0,406.3 1065.0,407.1 1067.9,407.9 1070.8,408.7 1073.8,409.6 1076.7,410.6 1079.6,411.6 1082.5,412.6 1085.5,413.7 1088.4,414.9 1091.3,416.1 1094.1,417.3 1096.9,418.6 1099.8,420.0 1102.6,421.4 1105.6,422.8 1108.6,424.3 1111.8,425.8 1114.4,427.0 1117.2,428.3 1120.1,429.6 1123.1,430.9 1126.0,432.2 1129.0,433.5 1131.9,434.9 1134.7,436.3 1137.4,437.7 1140.0,439.1 1142.9,440.8 1145.6,442.5 1148.0,444.3 1150.4,446.0 1152.8,447.8 1155.4,449.7 1158.1,451.7 1161.2,453.9 1163.7,455.5 1166.3,457.2 1169.0,459.0 1171.8,460.8 1174.7,462.7 1177.6,464.6 1180.6,466.5 1183.6,468.5 1186.6,470.4 1189.5,472.3 1192.4,474.2 1195.2,476.0 1198.1,477.8 1200.9,479.6 1203.7,481.4 1206.6,483.2 1209.4,485.1 1212.2,486.9 1215.1,488.7 1217.9,490.6 1220.8,492.5 1223.6,494.4 1226.4,496.4 1229.3,498.4 1232.1,500.5 1234.9,502.6 1237.8,504.7 1240.6,506.8 1243.4,508.8 1246.3,510.9 1249.1,512.9 1251.9,514.9 1254.8,516.8 1257.7,518.7 1260.7,520.6 1263.7,522.4 1266.8,524.3 1269.8,526.1 1272.9,527.8 1275.8,529.6 1278.6,531.2 1281.3,532.7 1283.7,534.2 1286.0,535.5 1289.5,537.7 1292.3,539.4 1294.8,541.0 1297.0,542.3 1299.2,543.6 1301.6,544.9 1304.2,546.1 1306.8,547.2 1309.4,548.2 1312.0,549.2 1314.6,550.1 1317.2,551.1 1319.8,552.2 1322.4,553.3 1325.0,554.4 1327.6,555.4 1330.2,556.5 1332.8,557.4 1335.3,558.2 1337.7,558.9 1340.1,559.6 1342.6,560.2 1345.3,560.7 1348.4,561.3 1351.0,561.6 1353.9,561.9 1356.9,562.2 1360.1,562.5 1363.2,562.8 1366.3,563.0 1369.2,563.1 1371.8,563.3 1374.9,563.4 1377.8,563.5 1380.4,563.5 1382.9,563.5 1385.2,563.4 1387.4,563.3 1390.5,562.9 1393.4,562.4 1395.8,561.9 1397.5,561.6" fill="none" stroke="#ff0000" stroke-width="1" stroke-linejoin="round" shape-rendering="crispEdges" />
<polyline points="918.4,491.9 920.2,489.9 922.7,487.0 925.8,483.5 929.1,479.9 932.4,476.3 934.8,473.8 937.4,471.0 940.1,468.2 942.8,465.4 945.6,462.6 948.4,460.0 951.1,457.6 953.8,455.5 956.5,453.5 959.1,451.6 961.8,449.9 964.5,448.2 967.2,446.7 969.8,445.1 972.5,443.7 975.2,442.3 977.9,441.0 980.5,439.8 983.2,438.7 985.9,437.6 988.5,436.5 991.2,435.5 993.9,434.6 996.6,433.7 999.2,432.8 1001.9,432.0 1004.6,431.4 1007.3,430.8 1010.0,430.3 1012.7,430.0 1015.4,429.7 1018.2,429.5 1020.9,429.4 1023.5,429.3 1026.0,429.2 1028.7,429.2 1031.1,429.1 1033.5,429.2 1035.9,429.3 1038.6,429.5 1041.6,429.8 1044.1,430.2 1046.9,430.6 1049.8,431.1 1052.8,431.6 1055.9,432.2 1058.9,432.8 1062.0,433.5 1065.0,434.2 1067.9,435.0 1070.8,435.8 1073.8,436.7 1076.7,437.7 1079.6,438.7 1082.5,439.8 1085.5,440.9 1088.4,442.0 1091.3,443.2 1094.1,444.5 1096.9,445.8 1099.8,447.1 1102.6,448.5 1105.6,450.0 1108.6,451.4 1111.8,452.9 1114.4,454.2 1117.2,455.4 1120.1,456.7 1123.1,458.0 1126.0,459.3 1129.0,460.7 1131.9,462.0 1134.7,463.4 1137.4,464.8 1140.0,466.2 1142.9,467.9 1145.6,469.7 1148.0,471.4 1150.4,473.2 1152.8,475.0 1155.4,476.9 1158.1,478.9 1161.2,481.0 1163.7,482.6 1166.3,484.4 1169.0,486.1 1171.8,488.0 1174.7,489.9 1177.6,491.8 1180.6,493.7 1183.6,495.6 1186.6,497.5 1189.5,499.4 1192.4,501.3 1195.2,503.1 1198.1,504.9 1200.9,506.8 1203.7,508.6 1206.6,510.4 1209.4,512.2 1212.2,514.0 1215.1,515.9 1217.9,517.7 1220.8,519.6 1223.6,521.6 1226.4,523.5 1229.3,525.5 1232.1,527.6 1234.9,529.7 1237.8,531.8 1240.6,533.9 1243.4,536.0 1246.3,538.0 1249.1,540.1 1251.9,542.0 1254.8,543.9 1257.7,545.8 1260.7,547.7 1263.7,549.6 1266.8,551.4 1269.8,553.2 1272.9,555.0 1275.8,556.7 1278.6,558.3 1281.3,559.9 1283.7,561.3 1286.0,562.6 1289.5,564.8 1292.3,566.6 1294.8,568.1 1297.0,569.5 1299.2,570.7 1301.6,572.0 1304.2,573.2 1306.8,574.3 1309.4,575.3 1312.0,576.3 1314.6,577.2 1317.2,578.2 1319.8,579.3 1322.4,580.4 1325.0,581.5 1327.6,582.6 1330.2,583.6 1332.8,584.5 1335.3,585.3 1337.7,586.0 1340.1,586.7 1342.6,587.3 1345.3,587.9 1348.4,588.4 1351.0,588.7 1353.9,589.1 1356.9,589.4 1360.1,589.6 1363.2,589.9 1366.3,590.1 1369.2,590.3 1371.8,590.4 1374.9,590.6 1377.8,590.6 1380.4,590.6 1382.9,590.6 1385.2,590.5 1387.4,590.4 1390.5,590.1 1393.4,589.6 1395.8,589.0 1397.5,588.7" fill="none" stroke="#ff0000" stroke-width="1" stroke-linejoin="round" shape-rendering="crispEdges" />
<polyline points="918.4,519.1 920.2,517.0 922.7,514.1 925.8,510.7 929.1,507.0 932.4,503.5 934.8,500.9 937.4,498.2 940.1,495.3 942.8,492.5 945.6,489.7 948.4,487.1 951.1,484.7 953.8,482.6 956.5,480.6 959.1,478.7 961.8,477.0 964.5,475.4 967.2,473.8 969.8,472.3 972.5,470.8 975.2,469.4 977.9,468.2 980.5,467.0 983.2,465.8 985.9,464.7 988.5,463.7 991.2,462.7 993.9,461.7 996.6,460.8 999.2,459.9 1001.9,459.2 1004.6,458.5 1007.3,457.9 1010.0,457.4 1012.7,457.1 1015.4,456.8 1018.2,456.6 1020.9,456.5 1023.5,456.4 1026.0,456.3 1028.7,456.3 1031.1,456.3 1033.5,456.3 1035.9,456.4 1038.6,456.6 1041.6,457.0 1044.1,457.3 1046.9,457.7 1049.8,458.2 1052.8,458.7 1055.9,459.3 1058.9,459.9 1062.0,460.6 1065.0,461.3 1067.9,462.1 1070.8,463.0 1073.8,463.9 1076.7,464.8 1079.6,465.8 1082.5,466.9 1085.5,468.0 1088.4,469.1 1091.3,470.3 1094.1,471.6 1096.9,472.9 1099.8,474.3 1102.6,475.7 1105.6,477.1 1108.6,478.6 1111.8,480.1 1114.4,481.3 1117.2,482.5 1120.1,483.8 1123.1,485.1 1126.0,486.4 1129.0,487.8 1131.9,489.1 1134.7,490.5 1137.4,491.9 1140.0,493.3 1142.9,495.1 1145.6,496.8 1148.0,498.5 1150.4,500.3 1152.8,502.1 1155.4,504.0 1158.1,506.0 1161.2,508.1 1163.7,509.8 1166.3,511.5 1169.0,513.3 1171.8,515.1 1174.7,517.0 1177.6,518.9 1180.6,520.8 1183.6,522.7 1186.6,524.6 1189.5,526.5 1192.4,528.4 1195.2,530.2 1198.1,532.1 1200.9,533.9 1203.7,535.7 1206.6,537.5 1209.4,539.3 1212.2,541.2 1215.1,543.0 1217.9,544.9 1220.8,546.8 1223.6,548.7 1226.4,550.7 1229.3,552.7 1232.1,554.7 1234.9,556.8 1237.8,558.9 1240.6,561.0 1243.4,563.1 1246.3,565.2 1249.1,567.2 1251.9,569.2 1254.8,571.1 1257.7,572.9 1260.7,574.8 1263.7,576.7 1266.8,578.5 1269.8,580.3 1272.9,582.1 1275.8,583.8 1278.6,585.4 1281.3,587.0 1283.7,588.4 1286.0,589.8 1289.5,591.9 1292.3,593.7 1294.8,595.2 1297.0,596.6 1299.2,597.9 1301.6,599.1 1304.2,600.4 1306.8,601.4 1309.4,602.5 1312.0,603.4 1314.6,604.4 1317.2,605.4 1319.8,606.4 1322.4,607.5 1325.0,608.6 1327.6,609.7 1330.2,610.7 1332.8,611.6 1335.3,612.4 1337.7,613.2 1340.1,613.8 1342.6,614.4 1345.3,615.0 1348.4,615.5 1351.0,615.9 1353.9,616.2 1356.9,616.5 1360.1,616.8 1363.2,617.0 1366.3,617.2 1369.2,617.4 1371.8,617.5 1374.9,617.7 1377.8,617.8 1380.4,617.8 1382.9,617.7 1385.2,617.7 1387.4,617.5 1390.5,617.2 1393.4,616.7 1395.8,616.2 1397.5,615.8" fill="none" stroke="#707070" stroke-width="1" stroke-linejoin="round" shape-rendering="crispEdges" />
<polyline points="918.4,606.8 920.2,604.8 922.7,601.9 925.8,598.5 929.1,594.8 932.4,591.2 934.8,588.7 937.4,585.9 940.1,583.1 942.8,580.3 945.6,577.5 948.4,574.9 951.1,572.5 953.8,570.4 956.5,568.4 959.1,566.5 961.8,564.8 964.5,563.1 967.2,561.6 969.8,560.0 972.5,558.6 975.2,557.2 977.9,556.0 980.5,554.7 983.2,553.6 985.9,552.5 988.5,551.5 991.2,550.5 993.9,549.5 996.6,548.6 999.2,547.7 1001.9,547.0 1004.6,546.3 1007.3,545.7 1010.0,545.2 1012.7,544.9 1015.4,544.6 1018.2,544.4 1020.9,544.3 1023.5,544.2 1026.0,544.1 1028.7,544.1 1031.1,544.0 1033.5,544.1 1035.9,544.2 1038.6,544.4 1041.6,544.8 1044.1,545.1 1046.9,545.5 1049.8,546.0 1052.8,546.5 1055.9,547.1 1058.9,547.7 1062.0,548.4 1065.0,549.1 1067.9,549.9 1070.8,550.8 1073.8,551.7 1076.7,552.6 1079.6,553.6 1082.5,554.7 1085.5,555.8 1088.4,556.9 1091.3,558.1 1094.1,559.4 1096.9,560.7 1099.8,562.0 1102.6,563.4 1105.6,564.9 1108.6,566.4 1111.8,567.8 1114.4,569.1 1117.2,570.3 1120.1,571.6 1123.1,572.9 1126.0,574.2 1129.0,575.6 1131.9,576.9 1134.7,578.3 1137.4,579.7 1140.0,581.1 1142.9,582.8 1145.6,584.6 1148.0,586.3 1150.4,588.1 1152.8,589.9 1155.4,591.8 1158.1,593.8 1161.2,595.9 1163.7,597.6 1166.3,599.3 1169.0,601.1 1171.8,602.9 1174.7,604.8 1177.6,606.7 1180.6,608.6 1183.6,610.5 1186.6,612.4 1189.5,614.3 1192.4,616.2 1195.2,618.0 1198.1,619.9 1200.9,621.7 1203.7,623.5 1206.6,625.3 1209.4,627.1 1212.2,629.0 1215.1,630.8 1217.9,632.7 1220.8,634.6 1223.6,636.5 1226.4,638.4 1229.3,640.5 1232.1,642.5 1234.9,644.6 1237.8,646.7 1240.6,648.8 1243.4,650.9 1246.3,653.0 1249.1,655.0 1251.9,656.9 1254.8,658.9 1257.7,660.7 1260.7,662.6 1263.7,664.5 1266.8,666.3 1269.8,668.1 1272.9,669.9 1275.8,671.6 1278.6,673.2 1281.3,674.8 1283.7,676.2 1286.0,677.6 1289.5,679.7 1292.3,681.5 1294.8,683.0 1297.0,684.4 1299.2,685.7 1301.6,686.9 1304.2,688.2 1306.8,689.2 1309.4,690.2 1312.0,691.2 1314.6,692.2 1317.2,693.2 1319.8,694.2 1322.4,695.3 1325.0,696.4 1327.6,697.5 1330.2,698.5 1332.8,699.4 1335.3,700.2 1337.7,701.0 1340.1,701.6 1342.6,702.2 1345.3,702.8 1348.4,703.3 1351.0,703.7 1353.9,704.0 1356.9,704.3 1360.1,704.6 1363.2,704.8 1366.3,705.0 1369.2,705.2 1371.8,705.3 1374.9,705.5 1377.8,705.5 1380.4,705.6 1382.9,705.5 1385.2,705.5 1387.4,705.3 1390.5,705.0 1393.4,704.5 1395.8,704.0 1397.5,703.6" fill="none" stroke="#707070" stroke-width="1" stroke-linejoin="round" shape-rendering="crispEdges" />
<polyline points="918.4,634.0 920.2,631.9 922.7,629.0 925.8,625.6 929.1,621.9 932.4,618.4 934.8,615.8 937.4,613.1 940.1,610.2 942.8,607.4 945.6,604.6 948.4,602.0 951.1,599.7 953.8,597.5 956.5,595.5 959.1,593.7 961.8,591.9 964.5,590.3 967.2,588.7 969.8,587.2 972.5,585.7 975.2,584.4 977.9,583.1 980.5,581.9 983.2,580.7 985.9,579.6 988.5,578.6 991.2,577.6 993.9,576.6 996.6,575.7 999.2,574.9 1001.9,574.1 1004.6,573.4 1007.3,572.8 1010.0,572.4 1012.7,572.0 1015.4,571.8 1018.2,571.6 1020.9,571.4 1023.5,571.3 1026.0,571.3 1028.7,571.2 1031.1,571.2 1033.5,571.2 1035.9,571.3 1038.6,571.5 1041.6,571.9 1044.1,572.2 1046.9,572.6 1049.8,573.1 1052.8,573.6 1055.9,574.2 1058.9,574.8 1062.0,575.5 1065.0,576.3 1067.9,577.1 1070.8,577.9 1073.8,578.8 1076.7,579.8 1079.6,580.8 1082.5,581.8 1085.5,582.9 1088.4,584.1 1091.3,585.3 1094.1,586.5 1096.9,587.8 1099.8,589.2 1102.6,590.6 1105.6,592.0 1108.6,593.5 1111.8,595.0 1114.4,596.2 1117.2,597.5 1120.1,598.7 1123.1,600.0 1126.0,601.4 1129.0,602.7 1131.9,604.1 1134.7,605.4 1137.4,606.8 1140.0,608.2 1142.9,610.0 1145.6,611.7 1148.0,613.4 1150.4,615.2 1152.8,617.0 1155.4,618.9 1158.1,620.9 1161.2,623.1 1163.7,624.7 1166.3,626.4 1169.0,628.2 1171.8,630.0 1174.7,631.9 1177.6,633.8 1180.6,635.7 1183.6,637.7 1186.6,639.6 1189.5,641.5 1192.4,643.3 1195.2,645.2 1198.1,647.0 1200.9,648.8 1203.7,650.6 1206.6,652.4 1209.4,654.3 1212.2,656.1 1215.1,657.9 1217.9,659.8 1220.8,661.7 1223.6,663.6 1226.4,665.6 1229.3,667.6 1232.1,669.7 1234.9,671.7 1237.8,673.8 1240.6,675.9 1243.4,678.0 1246.3,680.1 1249.1,682.1 1251.9,684.1 1254.8,686.0 1257.7,687.9 1260.7,689.7 1263.7,691.6 1266.8,693.5 1269.8,695.3 1272.9,697.0 1275.8,698.7 1278.6,700.4 1281.3,701.9 1283.7,703.4 1286.0,704.7 1289.5,706.8 1292.3,708.6 1294.8,710.2 1297.0,711.5 1299.2,712.8 1301.6,714.1 1304.2,715.3 1306.8,716.4 1309.4,717.4 1312.0,718.3 1314.6,719.3 1317.2,720.3 1319.8,721.4 1322.4,722.5 1325.0,723.6 1327.6,724.6 1330.2,725.6 1332.8,726.5 1335.3,727.3 1337.7,728.1 1340.1,728.8 1342.6,729.4 1345.3,729.9 1348.4,730.4 1351.0,730.8 1353.9,731.1 1356.9,731.4 1360.1,731.7 1363.2,731.9 1366.3,732.1 1369.2,732.3 1371.8,732.5 1374.9,732.6 1377.8,732.7 1380.4,732.7 1382.9,732.7 1385.2,732.6 1387.4,732.5 1390.5,732.1 1393.4,731.6 1395.8,731.1 1397.5,730.8" fill="none" stroke="#22c022" stroke-width="1" stroke-linejoin="round" shape-rendering="crispEdges" />
<polyline points="918.4,661.1 920.2,659.0 922.7,656.1 925.8,652.7 929.1,649.1 932.4,645.5 934.8,642.9 937.4,640.2 940.1,637.4 942.8,634.5 945.6,631.8 948.4,629.2 951.1,626.8 953.8,624.6 956.5,622.7 959.1,620.8 961.8,619.1 964.5,617.4 967.2,615.8 969.8,614.3 972.5,612.9 975.2,611.5 977.9,610.2 980.5,609.0 983.2,607.9 985.9,606.8 988.5,605.7 991.2,604.7 993.9,603.8 996.6,602.8 999.2,602.0 1001.9,601.2 1004.6,600.5 1007.3,600.0 1010.0,599.5 1012.7,599.1 1015.4,598.9 1018.2,598.7 1020.9,598.6 1023.5,598.5 1026.0,598.4 1028.7,598.3 1031.1,598.3 1033.5,598.3 1035.9,598.5 1038.6,598.7 1041.6,599.0 1044.1,599.4 1046.9,599.8 1049.8,600.2 1052.8,600.8 1055.9,601.3 1058.9,602.0 1062.0,602.7 1065.0,603.4 1067.9,604.2 1070.8,605.0 1073.8,605.9 1076.7,606.9 1079.6,607.9 1082.5,608.9 1085.5,610.0 1088.4,611.2 1091.3,612.4 1094.1,613.6 1096.9,615.0 1099.8,616.3 1102.6,617.7 1105.6,619.1 1108.6,620.6 1111.8,622.1 1114.4,623.3 1117.2,624.6 1120.1,625.9 1123.1,627.2 1126.0,628.5 1129.0,629.8 1131.9,631.2 1134.7,632.6 1137.4,634.0 1140.0,635.4 1142.9,637.1 1145.6,638.8 1148.0,640.6 1150.4,642.3 1152.8,644.2 1155.4,646.1 1158.1,648.1 1161.2,650.2 1163.7,651.8 1166.3,653.5 1169.0,655.3 1171.8,657.2 1174.7,659.0 1177.6,660.9 1180.6,662.9 1183.6,664.8 1186.6,666.7 1189.5,668.6 1192.4,670.5 1195.2,672.3 1198.1,674.1 1200.9,675.9 1203.7,677.7 1206.6,679.6 1209.4,681.4 1212.2,683.2 1215.1,685.1 1217.9,686.9 1220.8,688.8 1223.6,690.7 1226.4,692.7 1229.3,694.7 1232.1,696.8 1234.9,698.9 1237.8,701.0 1240.6,703.1 1243.4,705.2 1246.3,707.2 1249.1,709.2 1251.9,711.2 1254.8,713.1 1257.7,715.0 1260.7,716.9 1263.7,718.7 1266.8,720.6 1269.8,722.4 1272.9,724.2 1275.8,725.9 1278.6,727.5 1281.3,729.0 1283.7,730.5 1286.0,731.8 1289.5,734.0 1292.3,735.8 1294.8,737.3 1297.0,738.6 1299.2,739.9 1301.6,741.2 1304.2,742.4 1306.8,743.5 1309.4,744.5 1312.0,745.5 1314.6,746.4 1317.2,747.4 1319.8,748.5 1322.4,749.6 1325.0,750.7 1327.6,751.8 1330.2,752.8 1332.8,753.7 1335.3,754.5 1337.7,755.2 1340.1,755.9 1342.6,756.5 1345.3,757.1 1348.4,757.6 1351.0,757.9 1353.9,758.3 1356.9,758.6 1360.1,758.8 1363.2,759.1 1366.3,759.3 1369.2,759.5 1371.8,759.6 1374.9,759.7 1377.8,759.8 1380.4,759.8 1382.9,759.8 1385.2,759.7 1387.4,759.6 1390.5,759.2 1393.4,758.7 1395.8,758.2 1397.5,757.9" fill="none" stroke="#22c022" stroke-width="1" stroke-linejoin="round" shape-rendering="crispEdges" />
<polyline points="918.4,562.9 920.2,560.9 922.7,558.0 925.8,554.6 929.1,550.9 932.4,547.3 934.8,544.8 937.4,542.0 940.1,539.2 942.8,536.4 945.6,533.6 948.4,531.0 951.1,528.6 953.8,526.5 956.5,524.5 959.1,522.6 961.8,520.9 964.5,519.3 967.2,517.7 969.8,516.2 972.5,514.7 975.2,513.3 977.9,512.1 980.5,510.9 983.2,509.7 985.9,508.6 988.5,507.6 991.2,506.6 993.9,505.6 996.6,504.7 999.2,503.8 1001.9,503.1 1004.6,502.4 1007.3,501.8 1010.0,501.3 1012.7,501.0 1015.4,500.7 1018.2,500.5 1020.9,500.4 1023.5,500.3 1026.0,500.2 1028.7,500.2 1031.1,500.2 1033.5,500.2 1035.9,500.3 1038.6,500.5 1041.6,500.9 1044.1,501.2 1046.9,501.6 1049.8,502.1 1052.8,502.6 1055.9,503.2 1058.9,503.8 1062.0,504.5 1065.0,505.2 1067.9,506.0 1070.8,506.9 1073.8,507.8 1076.7,508.7 1079.6,509.7 1082.5,510.8 1085.5,511.9 1088.4,513.0 1091.3,514.2 1094.1,515.5 1096.9,516.8 1099.8,518.2 1102.6,519.5 1105.6,521.0 1108.6,522.5 1111.8,524.0 1114.4,525.2 1117.2,526.4 1120.1,527.7 1123.1,529.0 1126.0,530.3 1129.0,531.7 1131.9,533.0 1134.7,534.4 1137.4,535.8 1140.0,537.2 1142.9,539.0 1145.6,540.7 1148.0,542.4 1150.4,544.2 1152.8,546.0 1155.4,547.9 1158.1,549.9 1161.2,552.0 1163.7,553.7 1166.3,555.4 1169.0,557.2 1171.8,559.0 1174.7,560.9 1177.6,562.8 1180.6,564.7 1183.6,566.6 1186.6,568.5 1189.5,570.4 1192.4,572.3 1195.2,574.1 1198.1,576.0 1200.9,577.8 1203.7,579.6 1206.6,581.4 1209.4,583.2 1212.2,585.1 1215.1,586.9 1217.9,588.8 1220.8,590.7 1223.6,592.6 1226.4,594.6 1229.3,596.6 1232.1,598.6 1234.9,600.7 1237.8,602.8 1240.6,604.9 1243.4,607.0 1246.3,609.1 1249.1,611.1 1251.9,613.1 1254.8,615.0 1257.7,616.8 1260.7,618.7 1263.7,620.6 1266.8,622.4 1269.8,624.2 1272.9,626.0 1275.8,627.7 1278.6,629.3 1281.3,630.9 1283.7,632.3 1286.0,633.7 1289.5,635.8 1292.3,637.6 1294.8,639.1 1297.0,640.5 1299.2,641.8 1301.6,643.0 1304.2,644.3 1306.8,645.3 1309.4,646.3 1312.0,647.3 1314.6,648.3 1317.2,649.3 1319.8,650.3 1322.4,651.4 1325.0,652.5 1327.6,653.6 1330.2,654.6 1332.8,655.5 1335.3,656.3 1337.7,657.1 1340.1,657.7 1342.6,658.3 1345.3,658.9 1348.4,659.4 1351.0,659.8 1353.9,660.1 1356.9,660.4 1360.1,660.7 1363.2,660.9 1366.3,661.1 1369.2,661.3 1371.8,661.4 1374.9,661.6 1377.8,661.7 1380.4,661.7 1382.9,661.6 1385.2,661.6 1387.4,661.4 1390.5,661.1 1393.4,660.6 1395.8,660.1 1397.5,659.7" fill="none" stroke="#0000ff" stroke-width="1" stroke-linejoin="round" shape-rendering="crispEdges" />
<line x1="918.5" y1="463.3" x2="1312" y2="720" stroke="#0000ff" stroke-width="1" shape-rendering="crispEdges" />
<line x1="877.5" y1="603.7" x2="1408" y2="720" stroke="#0000ff" stroke-width="1" shape-rendering="crispEdges" />
<line x1="1134" y1="478.7" x2="1505" y2="720" stroke="#0000ff" stroke-width="1" shape-rendering="crispEdges" />
<line x1="1169.8" y1="463.9" x2="1395.5" y2="720" stroke="#0000ff" stroke-width="1" shape-rendering="crispEdges" />
<line x1="1185.4" y1="544.2" x2="1675" y2="651.5" stroke="#0000ff" stroke-width="1" shape-rendering="crispEdges" />
<line x1="1345.4" y1="579.3" x2="1459" y2="720" stroke="#0000ff" stroke-width="1" shape-rendering="crispEdges" />
<rect x="1398" y="562" width="11" height="1" fill="#ff0000" shape-rendering="crispEdges"/>
<rect x="1398" y="589" width="11" height="1" fill="#ff0000" shape-rendering="crispEdges"/>
<rect x="1398" y="616" width="11" height="1" fill="#707070" shape-rendering="crispEdges"/>
<rect x="1398" y="660" width="11" height="1" fill="#0000ff" shape-rendering="crispEdges"/>
<rect x="1398" y="704" width="11" height="1" fill="#707070" shape-rendering="crispEdges"/>
<polyline points="877.0,551.2 879.1,550.4 882.1,549.3 885.5,547.9 888.7,546.6 891.1,545.5 893.5,544.3 895.9,543.2 898.5,542.1 901.2,541.1 903.8,540.4 906.7,539.8 909.8,539.2 912.6,538.7 915.1,538.3 916.8,538.0" fill="none" stroke="#add8e6" stroke-width="2.6" stroke-linejoin="round" />
<polyline points="916.8,538.0 922.3,537.7" fill="none" stroke="#ff6347" stroke-width="2.6" stroke-linejoin="round" />
<polyline points="922.3,537.7 924.3,537.5 927.2,537.3 930.5,537.0 934.1,536.6 937.4,536.2 940.2,535.7 943.4,534.8 946.0,533.7 948.4,532.5 951.1,531.0 953.5,529.4 955.8,527.5 958.3,525.5 960.9,523.7 963.6,522.4 965.9,521.7 968.3,521.2 970.8,520.9 973.4,520.8 976.2,520.7 979.2,520.5 981.7,520.4 984.4,520.3 987.3,520.3 990.3,520.3 993.2,520.3 996.1,520.3 998.7,520.2 1001.0,520.1 1004.1,519.8 1006.7,519.4 1009.0,519.0 1011.2,518.5 1013.5,517.7 1016.0,516.7 1018.5,515.6 1021.0,514.3 1023.5,512.9 1026.0,511.5 1028.6,509.9 1031.2,508.1 1033.8,506.4 1036.3,504.7 1038.5,503.4 1041.1,501.7 1043.3,500.6 1046.3,499.8 1049.0,499.4 1052.4,499.1 1055.9,498.9 1059.0,498.8 1061.1,498.7" fill="none" stroke="#add8e6" stroke-width="2.6" stroke-linejoin="round" />
<polyline points="1061.1,498.7 1065.8,498.7" fill="none" stroke="#ff6347" stroke-width="2.6" stroke-linejoin="round" />
<polyline points="1065.8,498.7 1077.5,498.2" fill="none" stroke="#add8e6" stroke-width="2.6" stroke-linejoin="round" />
<polyline points="1077.5,498.1 1105.5,498.2" fill="none" stroke="#ff6347" stroke-width="2.6" stroke-linejoin="round" />
<polyline points="1105.5,498.2 1107.3,498.2 1109.8,498.1 1112.8,498.0 1116.1,497.8 1119.6,497.4 1122.3,497.0 1125.6,496.4 1129.0,495.7 1132.4,495.0 1135.5,494.3 1138.1,493.8 1140.0,493.5 1140.7,494.2 1139.4,495.1 1141.3,494.2 1143.3,493.1" fill="none" stroke="#add8e6" stroke-width="2.6" stroke-linejoin="round" />
<polyline points="1143.3,492.8 1145.1,493.1 1147.8,493.6 1150.8,494.2 1153.4,495.1 1156.1,496.5 1158.6,498.2 1161.2,500.6 1163.4,502.8 1165.7,505.5 1168.1,508.4 1170.6,511.5 1173.2,514.8 1175.9,518.4 1178.7,522.1 1181.5,525.5 1184.2,528.6 1186.8,531.5 1189.6,534.3 1192.4,537.2 1194.8,539.6 1197.4,541.9 1200.0,544.3 1202.6,546.6 1204.9,548.9 1207.4,551.6 1209.7,554.2 1212.0,556.8 1214.2,559.8 1216.6,563.3 1218.9,567.0 1221.2,570.9 1223.6,574.6 1225.9,578.4 1228.3,582.3 1230.6,586.0 1232.9,589.5 1235.3,592.5 1237.5,595.3 1239.9,598.1 1242.3,600.9 1244.8,604.1 1247.3,607.4 1250.0,610.6 1253.2,613.4 1255.8,615.0 1258.8,616.4 1261.9,617.7 1265.0,618.9 1267.9,620.0 1270.4,621.2 1273.2,622.8 1275.4,624.3 1277.4,625.8 1279.7,627.4 1282.1,628.9 1284.7,630.4 1287.3,632.0 1289.9,633.6 1292.2,635.2 1294.8,637.3 1297.1,639.4 1299.3,641.5 1301.6,643.8 1303.9,646.2 1306.2,648.7 1308.5,651.3 1310.9,654.0 1313.7,656.7 1316.6,659.7 1319.4,662.5 1321.9,664.9 1324.2,667.4 1326.0,669.3 1328.1,670.8 1330.4,671.6 1333.2,672.1 1335.7,672.4 1337.5,672.7" fill="none" stroke="#ff6347" stroke-width="2.6" stroke-linejoin="round" />
<polyline points="1337.5,672.7 1339.4,672.0 1342.2,671.0 1345.4,669.8 1348.4,668.8 1351.4,667.7 1354.5,666.6 1357.3,665.6 1359.3,664.9" fill="none" stroke="#add8e6" stroke-width="2.6" stroke-linejoin="round" />
<polyline points="1359.3,664.9 1361.2,665.0 1364.0,665.1 1367.2,665.3 1370.4,665.5 1373.3,665.7 1375.9,665.7 1378.5,665.7 1380.9,665.8 1383.4,666.0 1385.8,666.4 1389.1,667.6 1392.4,669.2 1395.4,670.8 1397.5,671.9" fill="none" stroke="#ff6347" stroke-width="2.6" stroke-linejoin="round" />
<text x="1100" y="577.8" font-size="42" fill="#808080" text-anchor="start" >1</text>
<text x="1472" y="658.8" font-size="42" fill="#808080" text-anchor="start" >2</text>
<text x="865.8" y="671.9" font-size="18.5" fill="#808080" text-anchor="start" textLength="307.8" lengthAdjust="spacingAndGlyphs" >SI LIGNE TENDANCE HAUSSIERE</text>
<text x="884" y="676.6" font-size="9.5" fill="#585858" text-anchor="start" textLength="94.76405859375" lengthAdjust="spacingAndGlyphs" >#125939454 buy 10.00</text>
<text x="884" y="687.5" font-size="9.5" fill="#585858" text-anchor="start" textLength="61.805478515625" lengthAdjust="spacingAndGlyphs" >#125977660 tp</text>
<text x="884" y="692.2" font-size="9.5" fill="#585858" text-anchor="start" textLength="94.76405859375" lengthAdjust="spacingAndGlyphs" >#125977660 buy 10.00</text>
<text x="884" y="694.2" font-size="9.5" fill="#585858" text-anchor="start" textLength="60.77068359375" lengthAdjust="spacingAndGlyphs" >#125977660 sl</text>
<g shape-rendering="crispEdges">
<rect x="877" y="531" width="1" height="12" fill="#404040" />
<rect x="876" y="532" width="3" height="10" fill="#404040" />
<rect x="881" y="530" width="1" height="14" fill="#404040" />
<rect x="880" y="536" width="3" height="6" fill="#404040" />
<rect x="885" y="538" width="1" height="4" fill="#12a8dc" />
<rect x="884" y="539" width="3" height="2" fill="#12a8dc" />
<rect x="889" y="527" width="1" height="24" fill="#12a8dc" />
<rect x="888" y="528" width="3" height="13" fill="#12a8dc" />
<rect x="889" y="529" width="1" height="11" fill="#fff" />
<rect x="893" y="517" width="1" height="20" fill="#404040" />
<rect x="892" y="528" width="3" height="5" fill="#404040" />
<rect x="897" y="509" width="1" height="28" fill="#12a8dc" />
<rect x="896" y="530" width="3" height="4" fill="#12a8dc" />
<rect x="897" y="531" width="1" height="2" fill="#fff" />
<rect x="901" y="524" width="1" height="18" fill="#12a8dc" />
<rect x="900" y="527" width="3" height="5" fill="#12a8dc" />
<rect x="901" y="528" width="1" height="3" fill="#fff" />
<rect x="905" y="520" width="1" height="38" fill="#404040" />
<rect x="904" y="527" width="3" height="26" fill="#404040" />
<rect x="909" y="551" width="1" height="4" fill="#404040" />
<rect x="908" y="551" width="3" height="3" fill="#404040" />
<rect x="913" y="549" width="1" height="27" fill="#404040" />
<rect x="912" y="552" width="3" height="16" fill="#404040" />
<rect x="917" y="552" width="1" height="21" fill="#12a8dc" />
<rect x="916" y="559" width="3" height="9" fill="#12a8dc" />
<rect x="917" y="560" width="1" height="7" fill="#fff" />
<rect x="921" y="550" width="1" height="12" fill="#12a8dc" />
<rect x="920" y="554" width="3" height="7" fill="#12a8dc" />
<rect x="921" y="555" width="1" height="5" fill="#fff" />
<rect x="925" y="533" width="1" height="35" fill="#12a8dc" />
<rect x="924" y="534" width="3" height="21" fill="#12a8dc" />
<rect x="925" y="535" width="1" height="19" fill="#fff" />
<rect x="929" y="529" width="1" height="12" fill="#12a8dc" />
<rect x="928" y="532" width="3" height="4" fill="#12a8dc" />
<rect x="929" y="533" width="1" height="2" fill="#fff" />
<rect x="933" y="529" width="1" height="5" fill="#404040" />
<rect x="932" y="531" width="3" height="2" fill="#404040" />
<rect x="937" y="523" width="1" height="13" fill="#12a8dc" />
<rect x="936" y="524" width="3" height="9" fill="#12a8dc" />
<rect x="937" y="525" width="1" height="7" fill="#fff" />
<rect x="941" y="516" width="1" height="11" fill="#12a8dc" />
<rect x="940" y="519" width="3" height="7" fill="#12a8dc" />
<rect x="941" y="520" width="1" height="5" fill="#fff" />
<rect x="945" y="515" width="1" height="11" fill="#404040" />
<rect x="944" y="519" width="3" height="3" fill="#404040" />
<rect x="949" y="513" width="1" height="10" fill="#404040" />
<rect x="948" y="520" width="3" height="2" fill="#404040" />
<rect x="953" y="520" width="1" height="16" fill="#404040" />
<rect x="952" y="521" width="3" height="8" fill="#404040" />
<rect x="957" y="527" width="1" height="7" fill="#404040" />
<rect x="956" y="528" width="3" height="4" fill="#404040" />
<rect x="961" y="518" width="1" height="19" fill="#12a8dc" />
<rect x="960" y="527" width="3" height="5" fill="#12a8dc" />
<rect x="961" y="528" width="1" height="3" fill="#fff" />
<rect x="965" y="521" width="1" height="9" fill="#12a8dc" />
<rect x="964" y="522" width="3" height="6" fill="#12a8dc" />
<rect x="965" y="523" width="1" height="4" fill="#fff" />
<rect x="969" y="522" width="1" height="28" fill="#404040" />
<rect x="968" y="522" width="3" height="17" fill="#404040" />
<rect x="973" y="526" width="1" height="15" fill="#12a8dc" />
<rect x="972" y="537" width="3" height="2" fill="#12a8dc" />
<rect x="977" y="531" width="1" height="17" fill="#12a8dc" />
<rect x="976" y="535" width="3" height="4" fill="#12a8dc" />
<rect x="977" y="536" width="1" height="2" fill="#fff" />
<rect x="981" y="533" width="1" height="3" fill="#12a8dc" />
<rect x="980" y="533" width="3" height="3" fill="#12a8dc" />
<rect x="981" y="534" width="1" height="1" fill="#fff" />
<rect x="985" y="529" width="1" height="14" fill="#404040" />
<rect x="984" y="533" width="3" height="4" fill="#404040" />
<rect x="989" y="523" width="1" height="19" fill="#404040" />
<rect x="988" y="536" width="3" height="5" fill="#404040" />
<rect x="993" y="524" width="1" height="19" fill="#12a8dc" />
<rect x="992" y="525" width="3" height="16" fill="#12a8dc" />
<rect x="993" y="526" width="1" height="14" fill="#fff" />
<rect x="997" y="518" width="1" height="14" fill="#404040" />
<rect x="996" y="526" width="3" height="3" fill="#404040" />
<rect x="1001" y="515" width="1" height="15" fill="#12a8dc" />
<rect x="1000" y="515" width="3" height="14" fill="#12a8dc" />
<rect x="1001" y="516" width="1" height="12" fill="#fff" />
<rect x="1005" y="511" width="1" height="5" fill="#12a8dc" />
<rect x="1004" y="511" width="3" height="5" fill="#12a8dc" />
<rect x="1005" y="512" width="1" height="3" fill="#fff" />
<rect x="1009" y="500" width="1" height="13" fill="#12a8dc" />
<rect x="1008" y="501" width="3" height="11" fill="#12a8dc" />
<rect x="1009" y="502" width="1" height="9" fill="#fff" />
<rect x="1013" y="496" width="1" height="7" fill="#12a8dc" />
<rect x="1012" y="497" width="3" height="5" fill="#12a8dc" />
<rect x="1013" y="498" width="1" height="3" fill="#fff" />
<rect x="1017" y="483" width="1" height="18" fill="#12a8dc" />
<rect x="1016" y="483" width="3" height="17" fill="#12a8dc" />
<rect x="1017" y="484" width="1" height="15" fill="#fff" />
<rect x="1021" y="478" width="1" height="13" fill="#404040" />
<rect x="1020" y="483" width="3" height="7" fill="#404040" />
<rect x="1025" y="480" width="1" height="11" fill="#12a8dc" />
<rect x="1024" y="483" width="3" height="7" fill="#12a8dc" />
<rect x="1025" y="484" width="1" height="5" fill="#fff" />
<rect x="1029" y="482" width="1" height="3" fill="#404040" />
<rect x="1028" y="482" width="3" height="2" fill="#404040" />
<rect x="1033" y="479" width="1" height="7" fill="#12a8dc" />
<rect x="1032" y="481" width="3" height="4" fill="#12a8dc" />
<rect x="1033" y="482" width="1" height="2" fill="#fff" />
<rect x="1037" y="478" width="1" height="22" fill="#404040" />
<rect x="1036" y="481" width="3" height="10" fill="#404040" />
<rect x="1041" y="487" width="1" height="28" fill="#404040" />
<rect x="1040" y="489" width="3" height="20" fill="#404040" />
<rect x="1045" y="505" width="1" height="27" fill="#404040" />
<rect x="1044" y="508" width="3" height="15" fill="#404040" />
<rect x="1049" y="514" width="1" height="21" fill="#404040" />
<rect x="1048" y="522" width="3" height="4" fill="#404040" />
<rect x="1053" y="523" width="1" height="4" fill="#12a8dc" />
<rect x="1052" y="523" width="3" height="3" fill="#12a8dc" />
<rect x="1053" y="524" width="1" height="1" fill="#fff" />
<rect x="1057" y="517" width="1" height="14" fill="#12a8dc" />
<rect x="1056" y="520" width="3" height="5" fill="#12a8dc" />
<rect x="1057" y="521" width="1" height="3" fill="#fff" />
<rect x="1061" y="509" width="1" height="24" fill="#12a8dc" />
<rect x="1060" y="510" width="3" height="12" fill="#12a8dc" />
<rect x="1061" y="511" width="1" height="10" fill="#fff" />
<rect x="1065" y="507" width="1" height="22" fill="#404040" />
<rect x="1064" y="510" width="3" height="8" fill="#404040" />
<rect x="1069" y="498" width="1" height="23" fill="#12a8dc" />
<rect x="1068" y="501" width="3" height="17" fill="#12a8dc" />
<rect x="1069" y="502" width="1" height="15" fill="#fff" />
<rect x="1073" y="495" width="1" height="17" fill="#404040" />
<rect x="1072" y="501" width="3" height="6" fill="#404040" />
<rect x="1077" y="504" width="1" height="7" fill="#404040" />
<rect x="1076" y="505" width="3" height="4" fill="#404040" />
<rect x="1081" y="504" width="1" height="30" fill="#404040" />
<rect x="1080" y="508" width="3" height="25" fill="#404040" />
<rect x="1085" y="506" width="1" height="28" fill="#12a8dc" />
<rect x="1084" y="512" width="3" height="21" fill="#12a8dc" />
<rect x="1085" y="513" width="1" height="19" fill="#fff" />
<rect x="1089" y="510" width="1" height="15" fill="#404040" />
<rect x="1088" y="513" width="3" height="1" fill="#404040" />
<rect x="1093" y="497" width="1" height="19" fill="#12a8dc" />
<rect x="1092" y="499" width="3" height="16" fill="#12a8dc" />
<rect x="1093" y="500" width="1" height="14" fill="#fff" />
<rect x="1097" y="493" width="1" height="19" fill="#404040" />
<rect x="1096" y="499" width="3" height="12" fill="#404040" />
<rect x="1101" y="511" width="1" height="6" fill="#404040" />
<rect x="1100" y="511" width="3" height="6" fill="#404040" />
<rect x="1105" y="501" width="1" height="24" fill="#12a8dc" />
<rect x="1104" y="501" width="3" height="15" fill="#12a8dc" />
<rect x="1105" y="502" width="1" height="13" fill="#fff" />
<rect x="1109" y="499" width="1" height="11" fill="#12a8dc" />
<rect x="1108" y="500" width="3" height="3" fill="#12a8dc" />
<rect x="1109" y="501" width="1" height="1" fill="#fff" />
<rect x="1113" y="487" width="1" height="19" fill="#12a8dc" />
<rect x="1112" y="497" width="3" height="4" fill="#12a8dc" />
<rect x="1113" y="498" width="1" height="2" fill="#fff" />
<rect x="1117" y="483" width="1" height="21" fill="#12a8dc" />
<rect x="1116" y="488" width="3" height="12" fill="#12a8dc" />
<rect x="1117" y="489" width="1" height="10" fill="#fff" />
<rect x="1121" y="486" width="1" height="12" fill="#12a8dc" />
<rect x="1120" y="487" width="3" height="3" fill="#12a8dc" />
<rect x="1121" y="488" width="1" height="1" fill="#fff" />
<rect x="1125" y="483" width="1" height="6" fill="#12a8dc" />
<rect x="1124" y="484" width="3" height="5" fill="#12a8dc" />
<rect x="1125" y="485" width="1" height="3" fill="#fff" />
<rect x="1129" y="475" width="1" height="16" fill="#404040" />
<rect x="1128" y="484" width="3" height="5" fill="#404040" />
<rect x="1133" y="478" width="1" height="18" fill="#404040" />
<rect x="1132" y="487" width="3" height="4" fill="#404040" />
<rect x="1137" y="481" width="1" height="12" fill="#404040" />
<rect x="1136" y="489" width="3" height="2" fill="#404040" />
<rect x="1141" y="490" width="1" height="37" fill="#404040" />
<rect x="1140" y="490" width="3" height="26" fill="#404040" />
<rect x="1145" y="509" width="1" height="37" fill="#404040" />
<rect x="1144" y="514" width="3" height="16" fill="#404040" />
<rect x="1149" y="526" width="1" height="5" fill="#404040" />
<rect x="1148" y="527" width="3" height="2" fill="#404040" />
<rect x="1153" y="526" width="1" height="31" fill="#404040" />
<rect x="1152" y="527" width="3" height="10" fill="#404040" />
<rect x="1157" y="525" width="1" height="23" fill="#12a8dc" />
<rect x="1156" y="535" width="3" height="3" fill="#12a8dc" />
<rect x="1157" y="536" width="1" height="1" fill="#fff" />
<rect x="1161" y="533" width="1" height="77" fill="#404040" />
<rect x="1160" y="534" width="3" height="70" fill="#404040" />
<rect x="1165" y="583" width="1" height="42" fill="#12a8dc" />
<rect x="1164" y="595" width="3" height="8" fill="#12a8dc" />
<rect x="1165" y="596" width="1" height="6" fill="#fff" />
<rect x="1169" y="572" width="1" height="29" fill="#12a8dc" />
<rect x="1168" y="575" width="3" height="22" fill="#12a8dc" />
<rect x="1169" y="576" width="1" height="20" fill="#fff" />
<rect x="1173" y="574" width="1" height="9" fill="#404040" />
<rect x="1172" y="575" width="3" height="5" fill="#404040" />
<rect x="1177" y="575" width="1" height="23" fill="#404040" />
<rect x="1176" y="579" width="3" height="15" fill="#404040" />
<rect x="1181" y="541" width="1" height="54" fill="#12a8dc" />
<rect x="1180" y="544" width="3" height="50" fill="#12a8dc" />
<rect x="1181" y="545" width="1" height="48" fill="#fff" />
<rect x="1185" y="539" width="1" height="29" fill="#404040" />
<rect x="1184" y="544" width="3" height="11" fill="#404040" />
<rect x="1189" y="551" width="1" height="39" fill="#404040" />
<rect x="1188" y="553" width="3" height="29" fill="#404040" />
<rect x="1193" y="561" width="1" height="29" fill="#404040" />
<rect x="1192" y="580" width="3" height="9" fill="#404040" />
<rect x="1197" y="588" width="1" height="9" fill="#404040" />
<rect x="1196" y="588" width="3" height="6" fill="#404040" />
<rect x="1201" y="568" width="1" height="30" fill="#12a8dc" />
<rect x="1200" y="579" width="3" height="15" fill="#12a8dc" />
<rect x="1201" y="580" width="1" height="13" fill="#fff" />
<rect x="1205" y="576" width="1" height="11" fill="#404040" />
<rect x="1204" y="579" width="3" height="7" fill="#404040" />
<rect x="1209" y="575" width="1" height="71" fill="#404040" />
<rect x="1208" y="584" width="3" height="48" fill="#404040" />
<rect x="1213" y="592" width="1" height="49" fill="#12a8dc" />
<rect x="1212" y="624" width="3" height="8" fill="#12a8dc" />
<rect x="1213" y="625" width="1" height="6" fill="#fff" />
<rect x="1217" y="608" width="1" height="48" fill="#404040" />
<rect x="1216" y="625" width="3" height="1" fill="#404040" />
<rect x="1221" y="615" width="1" height="16" fill="#12a8dc" />
<rect x="1220" y="618" width="3" height="12" fill="#12a8dc" />
<rect x="1221" y="619" width="1" height="10" fill="#fff" />
<rect x="1225" y="607" width="1" height="77" fill="#404040" />
<rect x="1224" y="618" width="3" height="42" fill="#404040" />
<rect x="1229" y="630" width="1" height="37" fill="#12a8dc" />
<rect x="1228" y="636" width="3" height="24" fill="#12a8dc" />
<rect x="1229" y="637" width="1" height="22" fill="#fff" />
<rect x="1233" y="599" width="1" height="42" fill="#12a8dc" />
<rect x="1232" y="610" width="3" height="28" fill="#12a8dc" />
<rect x="1233" y="611" width="1" height="26" fill="#fff" />
<rect x="1237" y="592" width="1" height="27" fill="#12a8dc" />
<rect x="1236" y="606" width="3" height="5" fill="#12a8dc" />
<rect x="1237" y="607" width="1" height="3" fill="#fff" />
<rect x="1241" y="579" width="1" height="42" fill="#404040" />
<rect x="1240" y="606" width="3" height="4" fill="#404040" />
<rect x="1245" y="610" width="1" height="6" fill="#404040" />
<rect x="1244" y="610" width="3" height="5" fill="#404040" />
<rect x="1249" y="605" width="1" height="26" fill="#404040" />
<rect x="1248" y="613" width="3" height="2" fill="#404040" />
<rect x="1253" y="599" width="1" height="25" fill="#12a8dc" />
<rect x="1252" y="606" width="3" height="9" fill="#12a8dc" />
<rect x="1253" y="607" width="1" height="7" fill="#fff" />
<rect x="1257" y="565" width="1" height="46" fill="#12a8dc" />
<rect x="1256" y="567" width="3" height="40" fill="#12a8dc" />
<rect x="1257" y="568" width="1" height="38" fill="#fff" />
<rect x="1261" y="565" width="1" height="18" fill="#404040" />
<rect x="1260" y="567" width="3" height="12" fill="#404040" />
<rect x="1265" y="575" width="1" height="33" fill="#404040" />
<rect x="1264" y="577" width="3" height="21" fill="#404040" />
<rect x="1269" y="599" width="1" height="4" fill="#12a8dc" />
<rect x="1268" y="599" width="3" height="4" fill="#12a8dc" />
<rect x="1269" y="600" width="1" height="2" fill="#fff" />
<rect x="1273" y="586" width="1" height="53" fill="#404040" />
<rect x="1272" y="599" width="3" height="38" fill="#404040" />
<rect x="1277" y="612" width="1" height="31" fill="#12a8dc" />
<rect x="1276" y="628" width="3" height="9" fill="#12a8dc" />
<rect x="1277" y="629" width="1" height="7" fill="#fff" />
<rect x="1281" y="619" width="1" height="34" fill="#404040" />
<rect x="1280" y="628" width="3" height="21" fill="#404040" />
<rect x="1285" y="620" width="1" height="40" fill="#12a8dc" />
<rect x="1284" y="630" width="3" height="19" fill="#12a8dc" />
<rect x="1285" y="631" width="1" height="17" fill="#fff" />
<rect x="1289" y="621" width="1" height="21" fill="#12a8dc" />
<rect x="1288" y="626" width="3" height="4" fill="#12a8dc" />
<rect x="1289" y="627" width="1" height="2" fill="#fff" />
<rect x="1293" y="630" width="1" height="3" fill="#404040" />
<rect x="1292" y="630" width="3" height="2" fill="#404040" />
<rect x="1297" y="618" width="1" height="56" fill="#404040" />
<rect x="1296" y="630" width="3" height="41" fill="#404040" />
<rect x="1301" y="667" width="1" height="41" fill="#404040" />
<rect x="1300" y="669" width="3" height="26" fill="#404040" />
<rect x="1305" y="670" width="1" height="26" fill="#12a8dc" />
<rect x="1304" y="681" width="3" height="14" fill="#12a8dc" />
<rect x="1305" y="682" width="1" height="12" fill="#fff" />
<rect x="1309" y="679" width="1" height="19" fill="#404040" />
<rect x="1308" y="681" width="3" height="14" fill="#404040" />
<rect x="1313" y="678" width="1" height="21" fill="#404040" />
<rect x="1312" y="690" width="3" height="1" fill="#404040" />
<rect x="1317" y="687" width="1" height="5" fill="#12a8dc" />
<rect x="1316" y="687" width="3" height="4" fill="#12a8dc" />
<rect x="1317" y="688" width="1" height="2" fill="#fff" />
<rect x="1321" y="662" width="1" height="27" fill="#12a8dc" />
<rect x="1320" y="670" width="3" height="18" fill="#12a8dc" />
<rect x="1321" y="671" width="1" height="16" fill="#fff" />
<rect x="1325" y="653" width="1" height="24" fill="#12a8dc" />
<rect x="1324" y="656" width="3" height="15" fill="#12a8dc" />
<rect x="1325" y="657" width="1" height="13" fill="#fff" />
<rect x="1329" y="619" width="1" height="41" fill="#12a8dc" />
<rect x="1328" y="621" width="3" height="36" fill="#12a8dc" />
<rect x="1329" y="622" width="1" height="34" fill="#fff" />
<rect x="1333" y="615" width="1" height="20" fill="#404040" />
<rect x="1332" y="621" width="3" height="3" fill="#404040" />
<rect x="1337" y="611" width="1" height="19" fill="#12a8dc" />
<rect x="1336" y="612" width="3" height="11" fill="#12a8dc" />
<rect x="1337" y="613" width="1" height="9" fill="#fff" />
<rect x="1341" y="586" width="1" height="13" fill="#12a8dc" />
<rect x="1340" y="589" width="3" height="9" fill="#12a8dc" />
<rect x="1341" y="590" width="1" height="7" fill="#fff" />
<rect x="1345" y="579" width="1" height="23" fill="#404040" />
<rect x="1344" y="589" width="3" height="9" fill="#404040" />
<rect x="1349" y="595" width="1" height="51" fill="#404040" />
<rect x="1348" y="596" width="3" height="43" fill="#404040" />
<rect x="1353" y="630" width="1" height="9" fill="#12a8dc" />
<rect x="1352" y="632" width="3" height="7" fill="#12a8dc" />
<rect x="1353" y="633" width="1" height="5" fill="#fff" />
<rect x="1357" y="631" width="1" height="43" fill="#12a8dc" />
<rect x="1356" y="633" width="3" height="20" fill="#12a8dc" />
<rect x="1357" y="634" width="1" height="18" fill="#fff" />
<rect x="1361" y="631" width="1" height="49" fill="#404040" />
<rect x="1360" y="633" width="3" height="43" fill="#404040" />
<rect x="1365" y="676" width="1" height="10" fill="#404040" />
<rect x="1364" y="678" width="3" height="7" fill="#404040" />
<rect x="1369" y="656" width="1" height="34" fill="#12a8dc" />
<rect x="1368" y="663" width="3" height="21" fill="#12a8dc" />
<rect x="1369" y="664" width="1" height="19" fill="#fff" />
<rect x="1373" y="639" width="1" height="31" fill="#12a8dc" />
<rect x="1372" y="659" width="3" height="5" fill="#12a8dc" />
<rect x="1373" y="660" width="1" height="3" fill="#fff" />
<rect x="1377" y="627" width="1" height="34" fill="#12a8dc" />
<rect x="1376" y="643" width="3" height="17" fill="#12a8dc" />
<rect x="1377" y="644" width="1" height="15" fill="#fff" />
<rect x="1381" y="634" width="1" height="23" fill="#404040" />
<rect x="1380" y="643" width="3" height="9" fill="#404040" />
<rect x="1385" y="648" width="1" height="33" fill="#404040" />
<rect x="1384" y="650" width="3" height="30" fill="#404040" />
<rect x="1389" y="675" width="1" height="9" fill="#12a8dc" />
<rect x="1388" y="675" width="3" height="6" fill="#12a8dc" />
<rect x="1389" y="676" width="1" height="4" fill="#fff" />
<rect x="1393" y="671" width="1" height="49" fill="#404040" />
<rect x="1392" y="675" width="3" height="24" fill="#404040" />
<rect x="1397" y="691" width="1" height="12" fill="#12a8dc" />
<rect x="1396" y="695" width="3" height="5" fill="#12a8dc" />
<rect x="1397" y="696" width="1" height="3" fill="#fff" />
</g>
<path transform="translate(1413,676.5) scale(1.0)" d="M0 -5 L4.5 0 L2 0 L2 5 L-2 5 L-2 0 L-4.5 0 Z" fill="#fff" stroke="#ff2020" stroke-width="1.2"/>
<path transform="translate(1397.5,699) scale(0.85)" d="M0 -5 L4.5 0 L2 0 L2 5 L-2 5 L-2 0 L-4.5 0 Z" fill="#fff" stroke="#ff7090" stroke-width="1.411764705882353"/>
</g>
<path d="M881 468 l7 0 l-3.5 4.5z" fill="#303030"/>
<text x="892" y="474" font-size="9.5" fill="#404040" text-anchor="start" textLength="234" lengthAdjust="spacingAndGlyphs" >.USTECHCash,Daily  6487.12 6521.25 6458.62 6499.88</text>
<text x="881" y="487" font-size="9.5" fill="#404040" text-anchor="start" textLength="60" lengthAdjust="spacingAndGlyphs" >MBFX System</text>
<rect x="1408.5" y="556.1" width="41" height="11" fill="none" stroke="#ff0000" shape-rendering="crispEdges"/>
<text x="1410" y="565.6" font-size="11" fill="#ff0000" text-anchor="start" textLength="38" lengthAdjust="spacingAndGlyphs" >7231.44</text>
<rect x="1408.5" y="583.2" width="41" height="11" fill="none" stroke="#ff0000" shape-rendering="crispEdges"/>
<text x="1410" y="592.7" font-size="11" fill="#ff0000" text-anchor="start" textLength="38" lengthAdjust="spacingAndGlyphs" >7083.15</text>
<rect x="1408.5" y="610.9" width="41" height="11" fill="none" stroke="#707070" shape-rendering="crispEdges"/>
<text x="1410" y="620.4" font-size="11" fill="#707070" text-anchor="start" textLength="38" lengthAdjust="spacingAndGlyphs" >6934.89</text>
<rect x="1408.5" y="654.4" width="41" height="11" fill="none" stroke="#0000ff" shape-rendering="crispEdges"/>
<text x="1410" y="663.9" font-size="11" fill="#0000ff" text-anchor="start" textLength="38" lengthAdjust="spacingAndGlyphs" >6694.97</text>
<rect x="1408.5" y="698.3" width="41" height="11" fill="none" stroke="#707070" shape-rendering="crispEdges"/>
<text x="1410" y="707.8" font-size="11" fill="#707070" text-anchor="start" textLength="38" lengthAdjust="spacingAndGlyphs" >6455.05</text>
<g shape-rendering="crispEdges">
<rect x="876" y="462" width="800" height="1" fill="#404040" />
<rect x="876" y="720" width="800" height="1" fill="#404040" />
<rect x="876" y="462" width="1" height="259" fill="#404040" />
<rect x="876" y="723" width="800" height="1" fill="#404040" />
<rect x="876" y="829" width="800" height="1" fill="#404040" />
<rect x="876" y="723" width="1" height="107" fill="#404040" />
<rect x="1675" y="462" width="1" height="368" fill="#404040" />
<rect x="1676" y="486" width="3" height="1" fill="#404040" />
<rect x="1676" y="519" width="3" height="1" fill="#404040" />
<rect x="1676" y="552" width="3" height="1" fill="#404040" />
<rect x="1676" y="585" width="3" height="1" fill="#404040" />
<rect x="1676" y="618" width="3" height="1" fill="#404040" />
<rect x="1676" y="651" width="3" height="1" fill="#404040" />
<rect x="1676" y="717" width="3" height="1" fill="#404040" />
<line x1="877" y1="755.5" x2="1675" y2="755.5" stroke="#b0b0b0" stroke-width="1" stroke-dasharray="3 3" />
<line x1="877" y1="797.5" x2="1675" y2="797.5" stroke="#b0b0b0" stroke-width="1" stroke-dasharray="3 3" />
</g>
<text x="1681" y="489.9" font-size="9.5" fill="#404040" text-anchor="start" textLength="33" lengthAdjust="spacingAndGlyphs" >7645.80</text>
<text x="1681" y="523.2" font-size="9.5" fill="#404040" text-anchor="start" textLength="33" lengthAdjust="spacingAndGlyphs" >7462.20</text>
<text x="1681" y="556.0" font-size="9.5" fill="#404040" text-anchor="start" textLength="33" lengthAdjust="spacingAndGlyphs" >7284.00</text>
<text x="1681" y="589.0" font-size="9.5" fill="#404040" text-anchor="start" textLength="33" lengthAdjust="spacingAndGlyphs" >7100.40</text>
<text x="1681" y="621.8" font-size="9.5" fill="#404040" text-anchor="start" textLength="33" lengthAdjust="spacingAndGlyphs" >6922.20</text>
<text x="1681" y="654.7" font-size="9.5" fill="#404040" text-anchor="start" textLength="33" lengthAdjust="spacingAndGlyphs" >6738.60</text>
<text x="1681" y="687.5" font-size="9.5" fill="#404040" text-anchor="start" textLength="33" lengthAdjust="spacingAndGlyphs" >6560.40</text>
<text x="1681" y="721.1" font-size="9.5" fill="#404040" text-anchor="start" textLength="33" lengthAdjust="spacingAndGlyphs" >6382.20</text>
<rect x="1677" y="690" width="41" height="11" fill="#3a3a3a" shape-rendering="crispEdges"/>
<text x="1681" y="699" font-size="9.5" fill="#fff" text-anchor="start" textLength="33" lengthAdjust="spacingAndGlyphs" >6499.88</text>
<rect x="1677" y="683" width="41" height="11" fill="#ff0000" shape-rendering="crispEdges"/>
<text x="1681" y="692" font-size="9.5" fill="#fff" text-anchor="start" textLength="33" lengthAdjust="spacingAndGlyphs" >6532.71</text>
<text x="1679.5" y="732.1999999999999" font-size="9.5" fill="#404040" text-anchor="start" >100</text>
<text x="1679.5" y="758.4" font-size="9.5" fill="#404040" text-anchor="start" >70</text>
<text x="1679.5" y="800.8" font-size="9.5" fill="#404040" text-anchor="start" >30</text>
<text x="1679.5" y="825.6999999999999" font-size="9.5" fill="#404040" text-anchor="start" >0</text>
<g clip-path="url(#cd1r)">
<polyline points="877.8,767.1 884.3,767.9 890.9,764.0 897.4,765.3 901.3,764.0 905.3,771.8 913.1,778.4 917.0,775.0 921.0,774.5 926.2,768.7 932.8,768.7 941.9,764.0 949.8,766.1 956.3,769.7 965.0,766.1 969.4,773.1 975.9,772.6 981.2,770.5 989.0,774.5 994.3,769.2 998.2,770.5 1003.4,766.1 1007.4,764.5 1011.3,760.8 1017.8,756.6 1021.8,758.7 1027.0,758.2 1033.5,758.2 1037.5,761.9 1042.7,771.8 1046.6,776.5 1050.6,777.6 1055.8,775.8 1061.0,771.3 1065.0,774.5 1069.7,769.7 1075.4,771.3 1081.2,780.2 1085.9,775.0 1093.7,770.5 1101.6,775.0 1105.5,771.8 1113.4,771.3 1118.6,767.4 1125.2,766.1 1133.0,767.9 1136.9,769.2 1140.9,776.5 1145.6,782.3 1151.3,783.6 1156.6,784.9 1161.3,798.0 1167.0,790.2 1171.0,788.8 1177.5,792.3 1181.4,779.2 1189.3,785.4 1196.4,788.8 1202.4,784.4 1209.5,792.3 1218.1,790.7 1225.2,794.9 1229.9,788.8 1235.6,783.6 1243.0,782.8 1248.7,784.9 1253.4,782.8 1257.4,775.0 1261.3,775.8 1266.5,780.2 1273.1,786.2 1277.0,784.4 1280.9,787.0 1286.2,782.8 1294.0,783.6 1299.0,790.2 1302.9,792.8 1308.2,789.6 1312.1,790.7 1317.3,790.2 1323.9,785.4 1329.1,777.1 1334.3,775.8 1342.2,771.3 1346.1,773.1 1350.0,778.4 1356.6,778.4 1361.8,785.4 1365.8,786.2 1371.0,781.8 1377.5,778.4 1382.8,780.2 1388.0,784.4 1393.2,787.5 1396.4,786.2" fill="none" stroke="#1e90ff" stroke-width="1" stroke-linejoin="round" shape-rendering="crispEdges" />
<line x1="1168.4" y1="776.5" x2="1676" y2="756.9" stroke="#ff0000" stroke-width="1.6" />
<line x1="1148.7" y1="801.4" x2="1676" y2="771.8" stroke="#ff0000" stroke-width="1.6" />
</g>
<text x="881" y="735.2" font-size="9.5" fill="#404040" text-anchor="start" textLength="67.5" lengthAdjust="spacingAndGlyphs" >RSI(21) 40.4236</text>
<rect x="877" y="830" width="1" height="3" fill="#404040" shape-rendering="crispEdges"/>
<text x="876" y="842" font-size="9.5" fill="#404040" text-anchor="start" textLength="46.909077734374996" lengthAdjust="spacingAndGlyphs" >19 Jul 2018</text>
<rect x="941" y="830" width="1" height="3" fill="#404040" shape-rendering="crispEdges"/>
<text x="940" y="842" font-size="9.5" fill="#404040" text-anchor="start" textLength="45.90826757812499" lengthAdjust="spacingAndGlyphs" >7 Aug 2018</text>
<rect x="1005" y="830" width="1" height="3" fill="#404040" shape-rendering="crispEdges"/>
<text x="1004" y="842" font-size="9.5" fill="#404040" text-anchor="start" textLength="50.953428124999995" lengthAdjust="spacingAndGlyphs" >26 Aug 2018</text>
<rect x="1069" y="830" width="1" height="3" fill="#404040" shape-rendering="crispEdges"/>
<text x="1068" y="842" font-size="9.5" fill="#404040" text-anchor="start" textLength="51.453833203125" lengthAdjust="spacingAndGlyphs" >13 Sep 2018</text>
<rect x="1133" y="830" width="1" height="3" fill="#404040" shape-rendering="crispEdges"/>
<text x="1132" y="842" font-size="9.5" fill="#404040" text-anchor="start" textLength="44.380118359375" lengthAdjust="spacingAndGlyphs" >2 Oct 2018</text>
<rect x="1197" y="830" width="1" height="3" fill="#404040" shape-rendering="crispEdges"/>
<text x="1196" y="842" font-size="9.5" fill="#404040" text-anchor="start" textLength="49.42527890625" lengthAdjust="spacingAndGlyphs" >21 Oct 2018</text>
<rect x="1261" y="830" width="1" height="3" fill="#404040" shape-rendering="crispEdges"/>
<text x="1260" y="842" font-size="9.5" fill="#404040" text-anchor="start" textLength="46.400167187499996" lengthAdjust="spacingAndGlyphs" >8 Nov 2018</text>
<rect x="1325" y="830" width="1" height="3" fill="#404040" shape-rendering="crispEdges"/>
<text x="1324" y="842" font-size="9.5" fill="#404040" text-anchor="start" textLength="51.445327734375" lengthAdjust="spacingAndGlyphs" >27 Nov 2018</text>
<rect x="1389" y="830" width="1" height="3" fill="#404040" shape-rendering="crispEdges"/>
<text x="1388" y="842" font-size="9.5" fill="#404040" text-anchor="start" textLength="51.445327734375" lengthAdjust="spacingAndGlyphs" >16 Dec 2018</text>
</g>
<g shape-rendering="crispEdges">
<rect x="0" y="858" width="1731" height="2" fill="#4a4a4a" />
<rect x="0" y="860" width="1731" height="2" fill="#f6f6f6" />
<rect x="0" y="862" width="1731" height="1" fill="#000" />
<rect x="0" y="863" width="1731" height="19" fill="#f0f0f0" />
<rect x="0" y="882" width="1731" height="4" fill="#fcfcfc" />
<rect x="0" y="886" width="1729" height="1" fill="#a0a0a0" />
<rect x="0" y="887" width="1731" height="24" fill="#ffffff" />
<rect x="0" y="908" width="1731" height="1" fill="#ececec" />
<rect x="0" y="911" width="1731" height="1" fill="#a8a8a8" />
<rect x="0" y="912" width="1731" height="5" fill="#f0f0f0" />
<rect x="1728" y="887" width="1" height="22" fill="#e4e4e4" />
<rect x="232" y="862" width="112" height="19" fill="#000" />
<rect x="233" y="863" width="110" height="16" fill="#fff" />
<rect x="120" y="866" width="1" height="14" fill="#606060" />
<rect x="468" y="866" width="1" height="14" fill="#606060" />
</g>
<text x="15" y="876" font-size="12" fill="#6a6a78" text-anchor="start" textLength="93" lengthAdjust="spacingAndGlyphs" >.USTECHCash,M5</text>
<text x="130" y="876" font-size="12" fill="#6a6a78" text-anchor="start" textLength="91" lengthAdjust="spacingAndGlyphs" >.USTECHCash,H1</text>
<text x="242" y="876" font-size="12" fill="#000" text-anchor="start" textLength="91" lengthAdjust="spacingAndGlyphs" >.USTECHCash,H4</text>
<text x="355" y="876" font-size="12" fill="#6a6a78" text-anchor="start" textLength="102" lengthAdjust="spacingAndGlyphs" >.USTECHCash,Daily</text>
<text x="0" y="901" font-size="12" fill="#000" text-anchor="start" textLength="506" lengthAdjust="spacingAndGlyphs" >erte: -898.48  Fonds : 1 970.17  Marge : 1 308.83  Marge disponible : 661.35  Marge limite : 150.53%</text>
<path d="M1702.3 867.8 l-3.6 3.3 l3.6 3.3z" fill="#8c8c8c"/><path d="M1718 867.8 l3.6 3.3 l-3.6 3.3z" fill="#8c8c8c"/>
<rect x="252" y="812" width="155" height="49" fill="#000" fill-opacity="0.28" rx="1"/>
<rect x="249.5" y="809.5" width="155" height="48" fill="#fff" stroke="#767676" shape-rendering="crispEdges"/>
<text x="255.7" y="823" font-size="12" fill="#575757" text-anchor="start" textLength="141.4" lengthAdjust="spacingAndGlyphs" >Relative Strength Index (14)</text>
<text x="255.7" y="838" font-size="12" fill="#575757" text-anchor="start" textLength="115.7" lengthAdjust="spacingAndGlyphs" >Time: 2018.12.13 12:00</text>
<text x="255.7" y="852.7" font-size="12" fill="#575757" text-anchor="start" textLength="73.4" lengthAdjust="spacingAndGlyphs" >Value: 48.9686</text>
</svg></body></html>
